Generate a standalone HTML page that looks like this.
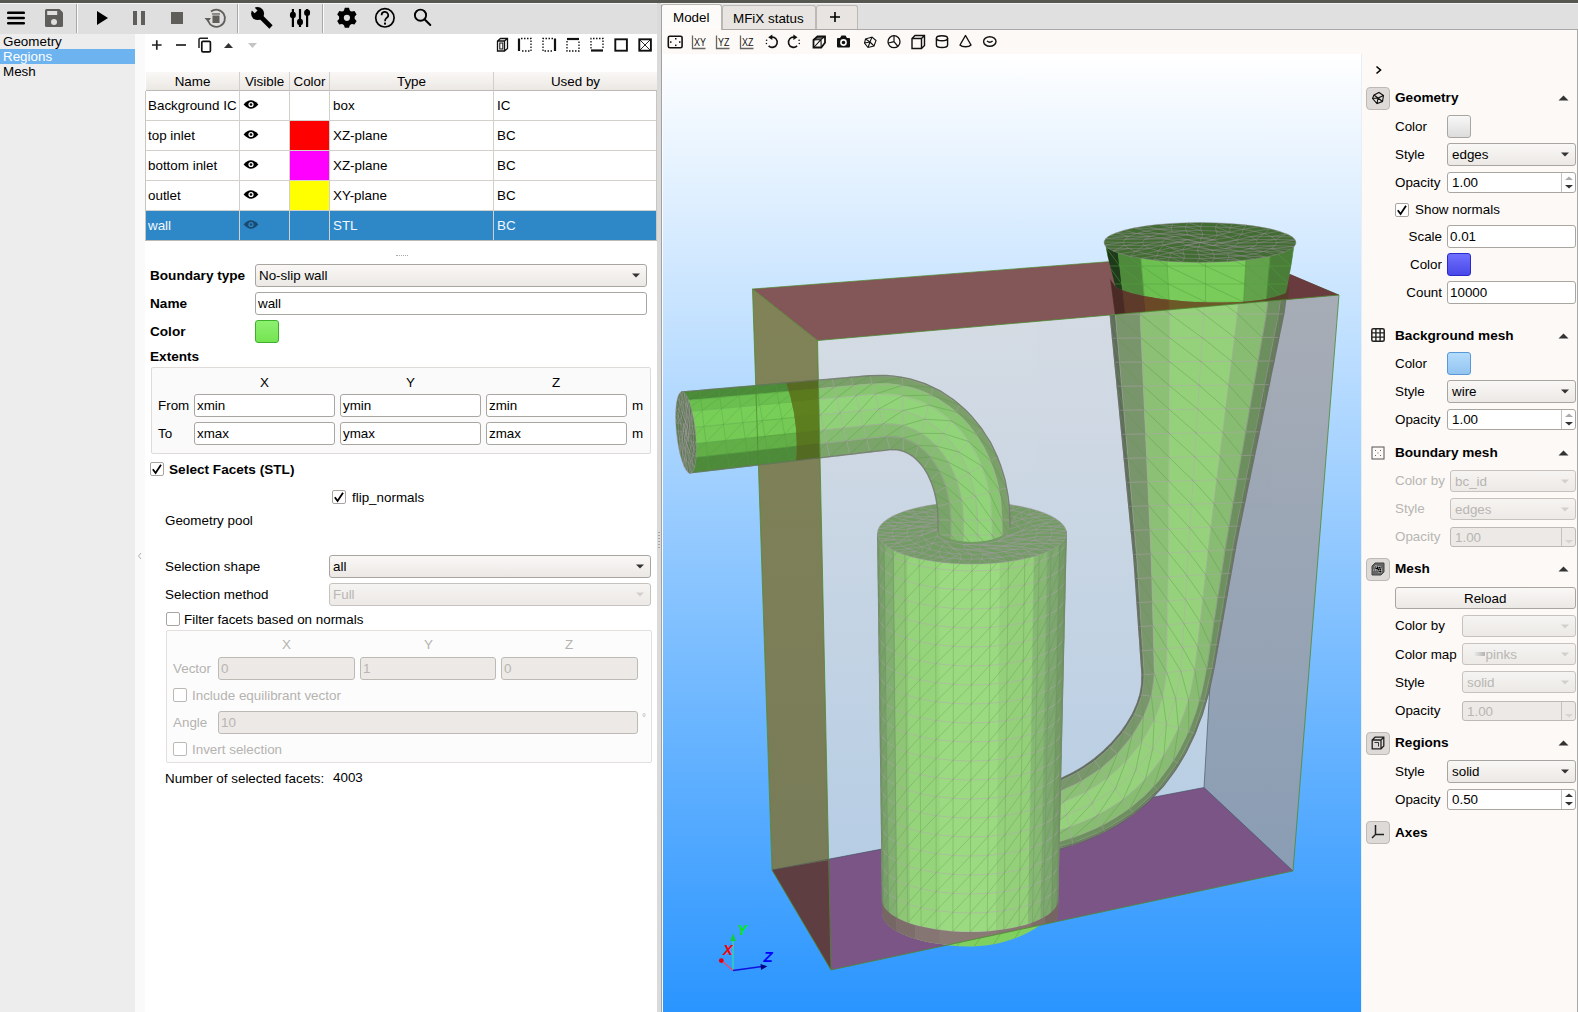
<!DOCTYPE html>
<html><head><meta charset="utf-8">
<style>
*{box-sizing:border-box;margin:0;padding:0}
html,body{width:1578px;height:1012px;overflow:hidden;background:#ededed;font-family:"Liberation Sans",sans-serif;font-size:13px;color:#000}
.a{position:absolute}
.t{position:absolute;white-space:nowrap;line-height:16px;font-size:13.4px;padding-top:1px}
.b{font-weight:bold;font-size:13.6px}
.combo{position:absolute;border:1px solid #a9a6a2;border-radius:3px;background:linear-gradient(#f9f7f5,#ebe8e5);}
.combo .ar{position:absolute;right:7px;top:9px;width:0;height:0;border-left:5px solid transparent;border-right:5px solid transparent;border-top:5px solid #333}
.inp{position:absolute;border:1px solid #aaa7a3;border-radius:3px;background:#fff}
.dis{color:#b5b3b0}
.dinp{position:absolute;border:1px solid #bab7b3;border-radius:3px;background:#edeae7}
.cbx{position:absolute;width:14px;height:14px;border:1px solid #aaa7a3;border-radius:2px;background:#fff}
.hdr{position:absolute;top:72px;height:19px;background:linear-gradient(#faf8f6,#ebe8e4);border-right:1px solid #d2cfcb;border-bottom:1px solid #bdbab6;text-align:center;line-height:20px;font-size:13.4px}
.row{position:absolute;left:146px;width:511px;height:30px;border-bottom:1px solid #d3d0cc}
.cell{position:absolute;top:0;height:30px;line-height:29px;padding-left:3px;border-right:1px solid #d3d0cc;font-size:13.4px}
.spin{position:absolute;border:1px solid #aaa7a3;border-radius:3px;background:#fff}
.spin .sep{position:absolute;right:14px;top:0;bottom:0;border-left:1px solid #c9c6c2;background:linear-gradient(#faf8f6,#eeebe8);width:0}
.ibtn{position:absolute;left:1366px;width:24px;height:23px;border:1px solid #bcb9b5;border-radius:4px;background:#dcd9d6}
.tri{position:absolute;left:1560px;width:0;height:0;border-left:5px solid transparent;border-right:5px solid transparent;border-bottom:5px solid #333}
</style></head><body>
<!-- top dark border -->
<div class="a" style="left:0;top:0;width:1578px;height:3px;background:#575752"></div>
<!-- main toolbar -->
<div class="a" style="left:0;top:3px;width:662px;height:31px;background:#dfdfdf;border-top:1px solid #f4f4f4"></div>
<svg class="a" style="left:0;top:0" width="662" height="34">
<g fill="#000"><rect x="7" y="11.5" width="18" height="2.6" rx="1.2"/><rect x="7" y="16.7" width="18" height="2.6" rx="1.2"/><rect x="7" y="21.9" width="18" height="2.6" rx="1.2"/></g>
<path d="M46.5,9 H59.5 L63,12.5 V25.5 Q63,27 61.5,27 H46.5 Q45,27 45,25.5 V10.5 Q45,9 46.5,9 Z" fill="#5f5e5a"/>
<rect x="47.2" y="11" width="10" height="4" fill="#dfdfdf"/><circle cx="54" cy="22" r="3" fill="#dfdfdf"/>
<rect x="76" y="4" width="1" height="29" fill="#a8a8a8"/><rect x="77" y="4" width="1" height="29" fill="#fbfbfb"/>
<path d="M97,11 L108,18 L97,25 Z" fill="#000"/>
<rect x="133" y="11" width="4" height="14" fill="#5f5e5a"/><rect x="141" y="11" width="4" height="14" fill="#5f5e5a"/>
<rect x="171" y="12" width="12" height="12" fill="#5f5e5a"/>
<path d="M208.2,21 A8.6,8.6 0 1 0 211,11.5" fill="none" stroke="#5f5e5a" stroke-width="1.8"/>
<path d="M204.5,18 L211,18 L208,22 Z" fill="#5f5e5a"/>
<rect x="212.5" y="15.5" width="7" height="7.5" fill="#5f5e5a"/><rect x="212" y="13.3" width="8" height="1.3" fill="#5f5e5a"/>
<rect x="237" y="4" width="1" height="29" fill="#a8a8a8"/><rect x="238" y="4" width="1" height="29" fill="#fbfbfb"/>
<g><circle cx="257.6" cy="13.6" r="6.5" fill="#000"/><path d="M259,15 L271,27" stroke="#000" stroke-width="4.6"/><rect x="250.9" y="4.2" width="4" height="9" transform="rotate(-45 252.9 8.7)" fill="#dfdfdf"/></g>
<g fill="#000"><rect x="291.8" y="9" width="2.2" height="18"/><rect x="298.9" y="9" width="2.2" height="18"/><rect x="306" y="9" width="2.2" height="18"/>
<ellipse cx="292.9" cy="15" rx="3" ry="3.3"/><ellipse cx="300" cy="22" rx="3" ry="3.3"/><ellipse cx="307.1" cy="12.8" rx="3" ry="3.3"/></g>
<rect x="322" y="4" width="1" height="29" fill="#a8a8a8"/><rect x="323" y="4" width="1" height="29" fill="#fbfbfb"/>
<g transform="translate(346.9 17.8)"><path d="M2.90,-7.40 L2.10,-10.00 L-2.10,-10.00 L-2.90,-7.40 A7.4,7.4 0 0 1 -4.96,-6.21 L-7.61,-6.82 L-9.71,-3.18 L-7.86,-1.19 A7.4,7.4 0 0 1 -7.86,1.19 L-9.71,3.18 L-7.61,6.82 L-4.96,6.21 A7.4,7.4 0 0 1 -2.90,7.40 L-2.10,10.00 L2.10,10.00 L2.90,7.40 A7.4,7.4 0 0 1 4.96,6.21 L7.61,6.82 L9.71,3.18 L7.86,1.19 A7.4,7.4 0 0 1 7.86,-1.19 L9.71,-3.18 L7.61,-6.82 L4.96,-6.21 A7.4,7.4 0 0 1 2.90,-7.40 Z" fill="#000"/><circle r="3.1" fill="#dfdfdf"/></g>
<circle cx="384.9" cy="17.8" r="9.2" fill="none" stroke="#000" stroke-width="1.7"/>
<path d="M381.6,15.2 A3.3,3.3 0 1 1 386.5,18 Q385,19 385,21.3" fill="none" stroke="#000" stroke-width="1.7"/><rect x="384" y="22.6" width="2" height="2" fill="#000"/>
<circle cx="420.5" cy="15.2" r="5.6" fill="none" stroke="#000" stroke-width="1.9"/><path d="M424.5,19.3 L430.3,25" stroke="#000" stroke-width="2" stroke-linecap="round"/>
</svg>

<!-- tab bar -->
<div class="a" style="left:662px;top:3px;width:916px;height:27px;background:#e0e0e0;border-top:1px solid #f2f2f2;border-bottom:1px solid #a9a9a9"></div>
<div class="a" style="left:661px;top:4px;width:61px;height:26px;background:#fdfbf9;border:1px solid #b9b6b2;border-bottom:none;border-radius:3px 3px 0 0"></div>
<div class="t" style="left:673px;top:9px">Model</div>
<div class="a" style="left:722px;top:5px;width:94px;height:24px;background:#e7e4e1;border:1px solid #bdbab6;border-bottom:none;border-radius:3px 3px 0 0"></div>
<div class="t" style="left:733px;top:10px">MFiX status</div>
<div class="a" style="left:816px;top:5px;width:42px;height:24px;background:#e7e4e1;border:1px solid #bdbab6;border-bottom:none;border-radius:3px 3px 0 0"></div>
<svg class="a" style="left:829px;top:11px" width="12" height="12"><path d="M6,1 V11 M1,6 H11" stroke="#000" stroke-width="1.6"/></svg>

<!-- left tree -->
<div class="a" style="left:0;top:34px;width:135px;height:978px;background:#ededed"></div>
<div class="a" style="left:0;top:49px;width:135px;height:15px;background:#6cb3f0"></div>
<div class="t" style="left:3px;top:33px">Geometry</div>
<div class="t" style="left:3px;top:48px;color:#fff">Regions</div>
<div class="t" style="left:3px;top:63px">Mesh</div>

<!-- left content panel -->
<div class="a" style="left:135px;top:34px;width:10px;height:978px;background:#fafafa"></div>
<div class="a" style="left:145px;top:34px;width:512px;height:978px;background:#fff"></div>
<div class="a" style="left:657px;top:3px;width:4px;height:1009px;background:#dadada"></div>
<div class="a" style="left:661px;top:5px;width:1px;height:1007px;background:#a2a2a2"></div>
<div class="a" style="left:662px;top:29px;width:1px;height:983px;background:#fdfdfd"></div>
<svg class="a" style="left:145px;top:34px" width="512" height="24">
<path d="M11.8,6.2 V15.8 M7,11 H16.6" stroke="#222" stroke-width="1.7"/>
<path d="M31,11 H41" stroke="#222" stroke-width="1.7"/>
<path d="M54,14 V5.5 Q54,4.3 55.2,4.3 H63" fill="none" stroke="#222" stroke-width="1.5"/><rect x="56.8" y="7.3" width="8.6" height="10.6" rx="1.2" fill="none" stroke="#111" stroke-width="1.7"/>
<path d="M79,14 L83.5,9 L88,14 Z" fill="#333"/>
<path d="M103,9 L107.5,14 L112,9 Z" fill="#c4c4c4"/>
<g fill="none" stroke="#111" stroke-width="1.3">
<path d="M352.5,17 V7 L355.5,4.5 H362.5 V14.5 L359.5,17 Z M352.5,7 H359.5 V17 M359.5,7 L362.5,4.5"/><rect x="354.8" y="9" width="3" height="6" stroke-width="1"/>
<path d="M374,4.5 V17" stroke-width="2.2"/><path d="M376,4.5 H386 V17 H376" stroke-dasharray="1.5 1.5"/>
<path d="M410,4.5 V17" stroke-width="2.2"/><path d="M408,4.5 H398 V17 H408" stroke-dasharray="1.5 1.5"/>
<path d="M422,5 H434" stroke-width="2.2"/><path d="M422,7 V17 H434 V7" stroke-dasharray="1.5 1.5"/>
<path d="M446,16.5 H458" stroke-width="2.2"/><path d="M446,14.5 V4.5 H458 V14.5" stroke-dasharray="1.5 1.5"/>
<rect x="470.3" y="5.3" width="11.6" height="11.4" stroke-width="1.9"/>
<rect x="494.3" y="5.3" width="11.6" height="11.4" stroke-width="1.9"/><path d="M495,6 L505,16 M505,6 L495,16" stroke-width="0.9"/>
</g></svg>
<!-- table header -->
<div class="hdr" style="left:146px;width:94px">Name</div>
<div class="hdr" style="left:240px;width:50px">Visible</div>
<div class="hdr" style="left:290px;width:40px">Color</div>
<div class="hdr" style="left:330px;width:164px">Type</div>
<div class="hdr" style="left:494px;width:163px;border-right:none">Used by</div>
<div class="a" style="left:145px;top:91px;width:1px;height:150px;background:#c9c6c2"></div>
<div class="a" style="left:656px;top:91px;width:1px;height:150px;background:#c9c6c2"></div>
<div class="a" style="left:146px;top:91px;width:510px;height:30px;background:#fff;border-bottom:1px solid #d3d0cc"></div>
<div class="a" style="left:239px;top:91px;width:1px;height:30px;background:#d3d0cc"></div>
<div class="a" style="left:289px;top:91px;width:1px;height:30px;background:#d3d0cc"></div>
<div class="a" style="left:329px;top:91px;width:1px;height:30px;background:#d3d0cc"></div>
<div class="a" style="left:493px;top:91px;width:1px;height:30px;background:#d3d0cc"></div>
<div class="t" style="left:148px;top:97px;color:#000">Background IC</div>
<div class="t" style="left:333px;top:97px;color:#000">box</div>
<div class="t" style="left:497px;top:97px;color:#000">IC</div>
<svg class="a" style="left:243px;top:99px" width="16" height="11"><path d="M0.6,5.5 Q8,-2.8 15.4,5.5 Q8,13.8 0.6,5.5 Z" fill="#000"/><circle cx="8" cy="5.5" r="2.6" fill="#fff"/><circle cx="8" cy="5.5" r="1.3" fill="#000"/></svg>
<div class="a" style="left:146px;top:121px;width:510px;height:30px;background:#fff;border-bottom:1px solid #d3d0cc"></div>
<div class="a" style="left:239px;top:121px;width:1px;height:30px;background:#d3d0cc"></div>
<div class="a" style="left:289px;top:121px;width:1px;height:30px;background:#d3d0cc"></div>
<div class="a" style="left:329px;top:121px;width:1px;height:30px;background:#d3d0cc"></div>
<div class="a" style="left:493px;top:121px;width:1px;height:30px;background:#d3d0cc"></div>
<div class="a" style="left:290px;top:121px;width:39px;height:29px;background:#ff0000"></div>
<div class="t" style="left:148px;top:127px;color:#000">top inlet</div>
<div class="t" style="left:333px;top:127px;color:#000">XZ-plane</div>
<div class="t" style="left:497px;top:127px;color:#000">BC</div>
<svg class="a" style="left:243px;top:129px" width="16" height="11"><path d="M0.6,5.5 Q8,-2.8 15.4,5.5 Q8,13.8 0.6,5.5 Z" fill="#000"/><circle cx="8" cy="5.5" r="2.6" fill="#fff"/><circle cx="8" cy="5.5" r="1.3" fill="#000"/></svg>
<div class="a" style="left:146px;top:151px;width:510px;height:30px;background:#fff;border-bottom:1px solid #d3d0cc"></div>
<div class="a" style="left:239px;top:151px;width:1px;height:30px;background:#d3d0cc"></div>
<div class="a" style="left:289px;top:151px;width:1px;height:30px;background:#d3d0cc"></div>
<div class="a" style="left:329px;top:151px;width:1px;height:30px;background:#d3d0cc"></div>
<div class="a" style="left:493px;top:151px;width:1px;height:30px;background:#d3d0cc"></div>
<div class="a" style="left:290px;top:151px;width:39px;height:29px;background:#ff00ff"></div>
<div class="t" style="left:148px;top:157px;color:#000">bottom inlet</div>
<div class="t" style="left:333px;top:157px;color:#000">XZ-plane</div>
<div class="t" style="left:497px;top:157px;color:#000">BC</div>
<svg class="a" style="left:243px;top:159px" width="16" height="11"><path d="M0.6,5.5 Q8,-2.8 15.4,5.5 Q8,13.8 0.6,5.5 Z" fill="#000"/><circle cx="8" cy="5.5" r="2.6" fill="#fff"/><circle cx="8" cy="5.5" r="1.3" fill="#000"/></svg>
<div class="a" style="left:146px;top:181px;width:510px;height:30px;background:#fff;border-bottom:1px solid #d3d0cc"></div>
<div class="a" style="left:239px;top:181px;width:1px;height:30px;background:#d3d0cc"></div>
<div class="a" style="left:289px;top:181px;width:1px;height:30px;background:#d3d0cc"></div>
<div class="a" style="left:329px;top:181px;width:1px;height:30px;background:#d3d0cc"></div>
<div class="a" style="left:493px;top:181px;width:1px;height:30px;background:#d3d0cc"></div>
<div class="a" style="left:290px;top:181px;width:39px;height:29px;background:#ffff00"></div>
<div class="t" style="left:148px;top:187px;color:#000">outlet</div>
<div class="t" style="left:333px;top:187px;color:#000">XY-plane</div>
<div class="t" style="left:497px;top:187px;color:#000">BC</div>
<svg class="a" style="left:243px;top:189px" width="16" height="11"><path d="M0.6,5.5 Q8,-2.8 15.4,5.5 Q8,13.8 0.6,5.5 Z" fill="#000"/><circle cx="8" cy="5.5" r="2.6" fill="#fff"/><circle cx="8" cy="5.5" r="1.3" fill="#000"/></svg>
<div class="a" style="left:146px;top:211px;width:510px;height:30px;background:#2e88c8;border-bottom:1px solid #d3d0cc"></div>
<div class="a" style="left:239px;top:211px;width:1px;height:30px;background:#d3d0cc"></div>
<div class="a" style="left:289px;top:211px;width:1px;height:30px;background:#d3d0cc"></div>
<div class="a" style="left:329px;top:211px;width:1px;height:30px;background:#d3d0cc"></div>
<div class="a" style="left:493px;top:211px;width:1px;height:30px;background:#d3d0cc"></div>
<div class="t" style="left:148px;top:217px;color:#f4f8fc">wall</div>
<div class="t" style="left:333px;top:217px;color:#f4f8fc">STL</div>
<div class="t" style="left:497px;top:217px;color:#f4f8fc">BC</div>
<svg class="a" style="left:243px;top:219px" width="16" height="11"><path d="M0.6,5.5 Q8,-2.8 15.4,5.5 Q8,13.8 0.6,5.5 Z" fill="#1a4a70"/><circle cx="8" cy="5.5" r="2.6" fill="#2e88c8"/><circle cx="8" cy="5.5" r="1.3" fill="#1a4a70"/></svg>

<div class="a" style="left:145px;top:240px;width:512px;height:1px;background:#bdbab6"></div>
<div class="a" style="left:396px;top:255px;width:12px;height:1px;border-top:1px dotted #aaa"></div>
<div class="t b" style="left:150px;top:267px">Boundary type</div><div class="a" style="left:255px;top:264px;width:392px;height:23px;border:1px solid #a9a6a2;border-radius:3px;background:linear-gradient(#faf8f6,#ebe8e5)"></div><div class="t" style="left:259px;top:267px;color:#000">No-slip wall</div><svg class="a" style="left:631px;top:273px" width="10" height="6"><path d="M1,0.5 H9 L5,4.5 Z" fill="#333"/></svg>
<div class="t b" style="left:150px;top:295px">Name</div><div class="a" style="left:255px;top:292px;width:392px;height:23px;border:1px solid #a9a6a2;border-radius:3px;background:#fff"></div><div class="t" style="left:258px;top:295px;color:#000">wall</div>
<div class="t b" style="left:150px;top:323px">Color</div><div class="a" style="left:255px;top:320px;width:24px;height:23px;border:1px solid #3cb02c;border-radius:3px;background:linear-gradient(#8ef070,#74e452)"></div>
<div class="t b" style="left:150px;top:348px">Extents</div><div class="a" style="left:151px;top:367px;width:500px;height:87px;border:1px solid #dedbd8;border-radius:2px;background:#fafafa"></div>
<div class="t" style="left:260px;top:374px">X</div><div class="t" style="left:406px;top:374px">Y</div><div class="t" style="left:552px;top:374px">Z</div><div class="t" style="left:158px;top:397px">From</div><div class="t" style="left:158px;top:425px">To</div><div class="a" style="left:194px;top:394px;width:141px;height:23px;border:1px solid #a9a6a2;border-radius:3px;background:#fff"></div><div class="t" style="left:197px;top:397px;color:#000">xmin</div>
<div class="a" style="left:194px;top:422px;width:141px;height:23px;border:1px solid #a9a6a2;border-radius:3px;background:#fff"></div><div class="t" style="left:197px;top:425px;color:#000">xmax</div>
<div class="a" style="left:340px;top:394px;width:141px;height:23px;border:1px solid #a9a6a2;border-radius:3px;background:#fff"></div><div class="t" style="left:343px;top:397px;color:#000">ymin</div>
<div class="a" style="left:340px;top:422px;width:141px;height:23px;border:1px solid #a9a6a2;border-radius:3px;background:#fff"></div><div class="t" style="left:343px;top:425px;color:#000">ymax</div>
<div class="a" style="left:486px;top:394px;width:141px;height:23px;border:1px solid #a9a6a2;border-radius:3px;background:#fff"></div><div class="t" style="left:489px;top:397px;color:#000">zmin</div>
<div class="a" style="left:486px;top:422px;width:141px;height:23px;border:1px solid #a9a6a2;border-radius:3px;background:#fff"></div><div class="t" style="left:489px;top:425px;color:#000">zmax</div>
<div class="t" style="left:632px;top:397px">m</div><div class="t" style="left:632px;top:425px">m</div>
<svg class="a" style="left:150px;top:462px" width="14" height="14"><rect x="0.5" y="0.5" width="13" height="13" rx="1.5" fill="#fff" stroke="#a8a5a1"/><path d="M2.8,7.2 L5.6,11 L11,2.8" fill="none" stroke="#000" stroke-width="1.8"/></svg><div class="t b" style="left:169px;top:461px">Select Facets (STL)</div>
<svg class="a" style="left:332px;top:490px" width="14" height="14"><rect x="0.5" y="0.5" width="13" height="13" rx="1.5" fill="#fff" stroke="#a8a5a1"/><path d="M2.8,7.2 L5.6,11 L11,2.8" fill="none" stroke="#000" stroke-width="1.8"/></svg><div class="t" style="left:352px;top:489px">flip_normals</div>
<div class="t" style="left:165px;top:512px">Geometry pool</div>
<div class="t" style="left:165px;top:558px">Selection shape</div><div class="a" style="left:329px;top:555px;width:322px;height:23px;border:1px solid #a9a6a2;border-radius:3px;background:linear-gradient(#faf8f6,#ebe8e5)"></div><div class="t" style="left:333px;top:558px;color:#000">all</div><svg class="a" style="left:635px;top:564px" width="10" height="6"><path d="M1,0.5 H9 L5,4.5 Z" fill="#333"/></svg>
<div class="t" style="left:165px;top:586px">Selection method</div><div class="a" style="left:329px;top:583px;width:322px;height:23px;border:1px solid #c6c3bf;border-radius:3px;background:linear-gradient(#f6f4f2,#ece9e6)"></div><div class="t" style="left:333px;top:586px;color:#b8b6b3">Full</div><svg class="a" style="left:635px;top:592px" width="10" height="6"><path d="M1,0.5 H9 L5,4.5 Z" fill="#d2d0cd"/></svg>
<svg class="a" style="left:166px;top:612px" width="14" height="14"><rect x="0.5" y="0.5" width="13" height="13" rx="1.5" fill="#fff" stroke="#a8a5a1"/></svg><div class="t" style="left:184px;top:611px">Filter facets based on normals</div>
<div class="a" style="left:166px;top:630px;width:486px;height:133px;border:1px solid #e2dfdc;border-radius:2px;background:#fcfcfc"></div>
<div class="t dis" style="left:282px;top:636px">X</div><div class="t dis" style="left:424px;top:636px">Y</div><div class="t dis" style="left:565px;top:636px">Z</div><div class="t dis" style="left:173px;top:660px">Vector</div><div class="a" style="left:218px;top:657px;width:137px;height:23px;border:1px solid #bdbab6;border-radius:3px;background:#ece9e6"></div><div class="t" style="left:221px;top:660px;color:#b8b6b3">0</div>
<div class="a" style="left:360px;top:657px;width:136px;height:23px;border:1px solid #bdbab6;border-radius:3px;background:#ece9e6"></div><div class="t" style="left:363px;top:660px;color:#b8b6b3">1</div>
<div class="a" style="left:501px;top:657px;width:137px;height:23px;border:1px solid #bdbab6;border-radius:3px;background:#ece9e6"></div><div class="t" style="left:504px;top:660px;color:#b8b6b3">0</div>
<svg class="a" style="left:173px;top:688px" width="14" height="14"><rect x="0.5" y="0.5" width="13" height="13" rx="1.5" fill="#fff" stroke="#bcb9b5"/></svg><div class="t dis" style="left:192px;top:687px">Include equilibrant vector</div>
<div class="t dis" style="left:173px;top:714px">Angle</div><div class="a" style="left:218px;top:711px;width:420px;height:23px;border:1px solid #bdbab6;border-radius:3px;background:#ece9e6"></div><div class="t" style="left:221px;top:714px;color:#b8b6b3">10</div>
<div class="t dis" style="left:642px;top:709px;font-size:10px">°</div><svg class="a" style="left:173px;top:742px" width="14" height="14"><rect x="0.5" y="0.5" width="13" height="13" rx="1.5" fill="#fff" stroke="#bcb9b5"/></svg><div class="t dis" style="left:192px;top:741px">Invert selection</div>
<div class="t" style="left:165px;top:770px">Number of selected facets:</div><div class="t" style="left:333px;top:769px">4003</div>
<svg class="a" style="left:137px;top:551px" width="6" height="10"><path d="M4,2 L1.5,5 L4,8" fill="none" stroke="#b0b0b0" stroke-width="1"/></svg><svg class="a" style="left:657px;top:530px" width="4" height="30"><g fill="#777"><rect x="1.5" y="2" width="1" height="1"/><rect x="1.5" y="5" width="1" height="1"/><rect x="1.5" y="8" width="1" height="1"/><rect x="1.5" y="11" width="1" height="1"/><rect x="1.5" y="14" width="1" height="1"/><rect x="1.5" y="17" width="1" height="1"/></g></svg>

<!-- viewer toolbar -->
<div class="a" style="left:663px;top:30px;width:915px;height:24px;background:#fcf9f6"></div>
<svg class="a" style="left:663px;top:30px" width="340" height="24"><g fill="none" stroke="#111" stroke-width="1.4">
<rect x="5.3" y="6.3" width="13.8" height="11.4" rx="1.5" stroke-width="1.6"/><g fill="#111" stroke="none"><rect x="7" y="11.3" width="1.5" height="1.5"/><rect x="16" y="11.3" width="1.5" height="1.5"/><rect x="12" y="8" width="1.5" height="1.5"/><rect x="12" y="14.6" width="1.5" height="1.5"/></g>
<path d="M29.5,5.5 V18.5 H42.5" stroke="#666" stroke-width="1.3"/>
<path d="M53.5,5.5 V18.5 H66.5" stroke="#666" stroke-width="1.3"/>
<path d="M77.5,5.5 V18.5 H90.5" stroke="#666" stroke-width="1.3"/>
<path d="M108.2,7.2 A5.1,5.1 0 1 1 105.6,15.9" stroke-width="1.6"/><g fill="#111" stroke="none"><circle cx="103.6" cy="10.3" r="0.8"/><circle cx="103.4" cy="13.5" r="0.8"/></g><path d="M105.2,7.3 L109.3,4.6 L109.3,10 Z" fill="#111" stroke="none"/>
<path d="M131.5,7.2 A5.1,5.1 0 1 0 134.1,15.9" stroke-width="1.6"/><g fill="#111" stroke="none"><circle cx="136.1" cy="10.3" r="0.8"/><circle cx="136.3" cy="13.5" r="0.8"/></g><path d="M134.5,7.3 L130.4,4.6 L130.4,10 Z" fill="#111" stroke="none"/>
<path d="M150.5,10 L154.5,6.5 H162 V12.8 L158.2,17.5 H150.5 Z" stroke-width="1.8"/><path d="M150.5,10 L158,9.5 L162,6.5 M158,9.5 L158.2,17.5 M151.2,17 L157.5,10.2" stroke-width="1.1"/><path d="M154.5,6.5 H162 L158,9.5 L150.5,10 Z" fill="#111" stroke="none" opacity="0.6"/>
<path d="M174,9 Q174,8 175,8 H177 L178.5,5.5 H182.5 L184,8 H186 Q187,8 187,9 V16.5 Q187,17.5 186,17.5 H175 Q174,17.5 174,16.5 Z" fill="#111" stroke="none"/><circle cx="180.5" cy="12.5" r="2.6" stroke="#fcf9f6" stroke-width="1.6"/>
<path d="M202.5,9 L209,7 L213,10.5 L211,16 L205,17.5 L201.5,13 Z M202.5,9 L207,12 L209,7 M207,12 L211,16 M207,12 L205,17.5 M201.5,13 L207,12" stroke-width="1.1"/>
<circle cx="231" cy="11.7" r="6" stroke-width="1.3"/><path d="M231,5.7 V11.7 L225.3,13 M231,11.7 L235,16.5" stroke-width="1.2"/>
<path d="M249,8.5 L252,5.5 H261.5 V15.5 L258.5,18.5 H249 Z M249,8.5 H258.5 V18.5 M258.5,8.5 L261.5,5.5" stroke-width="1.4"/>
<ellipse cx="279" cy="8.3" rx="5.6" ry="2.5" stroke-width="1.4"/><path d="M273.4,8.3 V15 A5.6,2.5 0 0 0 284.6,15 V8.3" stroke-width="1.4"/>
<path d="M302.5,5.5 L297,15 A6,3 0 0 0 308,15 Z" stroke-width="1.4" stroke-linejoin="round"/>
<ellipse cx="326.8" cy="11.5" rx="6.2" ry="4.8" stroke-width="1.4"/><path d="M324,11 Q326.8,13.5 329.6,11" stroke-width="1.4"/>
</g>
<g font-family="Liberation Sans" font-size="10.5" fill="#111" transform="scale(0.85 1)"><text x="36.5" y="16.5">XY</text><text x="64.7" y="16.5">YZ</text><text x="92.9" y="16.5">XZ</text></g>
</svg>

<!-- right panel -->
<div class="a" style="left:1361px;top:54px;width:216px;height:958px;background:#fcf9f6"></div>
<div class="a" style="left:1577px;top:29px;width:1px;height:983px;background:#a9a9a9"></div>
<svg class="a" style="left:1375px;top:65px" width="8" height="10"><path d="M1.5,1.5 L5.5,5 L1.5,8.5" fill="none" stroke="#000" stroke-width="1.6"/></svg>
<div class="a" style="left:1366px;top:87px;width:24px;height:23px;border:1px solid #bdbab6;border-radius:4px;background:#dddad7"></div><svg class="a" style="left:1371px;top:91px" width="14" height="14"><path d="M3,4 L8,1.5 L12.5,4.5 L11.5,10.5 L6,12.5 L1.5,7.5 Z M3,4 L7,7 L12.5,4.5 M7,7 L11.5,10.5 M7,7 L6,12.5 M1.5,7.5 L7,7" fill="none" stroke="#111" stroke-width="1.1"/></svg><div class="t b" style="left:1395px;top:89px">Geometry</div><svg class="a" style="left:1558px;top:95px" width="11" height="6"><path d="M0.5,5.5 H10.5 L5.5,0.5 Z" fill="#333"/></svg>
<div class="t" style="left:1395px;top:118px;color:#000">Color</div><div class="a" style="left:1447px;top:115px;width:24px;height:23px;border:1px solid #a9a6a2;border-radius:3px;background:linear-gradient(#f8f8f8,#dcdcdc)"></div>
<div class="t" style="left:1395px;top:146px;color:#000">Style</div><div class="a" style="left:1447px;top:143px;width:129px;height:23px;border:1px solid #a9a6a2;border-radius:3px;background:linear-gradient(#faf8f6,#ebe8e5)"></div><div class="t" style="left:1452px;top:146px;color:#000">edges</div><svg class="a" style="left:1560px;top:152px" width="10" height="6"><path d="M1,0.5 H9 L5,4.5 Z" fill="#333"/></svg>
<div class="t" style="left:1395px;top:174px;color:#000">Opacity</div><div class="a" style="left:1447px;top:172px;width:129px;height:21px;border:1px solid #a9a6a2;border-radius:3px;background:#fff"></div><div class="a" style="left:1561px;top:173px;width:1px;height:19px;background:#c5c2be"></div><div class="t" style="left:1452px;top:174px;color:#000">1.00</div><svg class="a" style="left:1564px;top:175px" width="10" height="16"><path d="M1,5 H9 L5,1.5 Z" fill="#aaa"/><path d="M1,10 H9 L5,13.5 Z" fill="#333"/></svg>
<svg class="a" style="left:1395px;top:203px" width="14" height="14"><rect x="0.5" y="0.5" width="13" height="13" rx="1.5" fill="#fff" stroke="#a8a5a1"/><path d="M2.8,7.2 L5.6,11 L11,2.8" fill="none" stroke="#000" stroke-width="1.8"/></svg><div class="t" style="left:1415px;top:201px;color:#000">Show normals</div><div class="t" style="right:136px;top:228px;color:#000">Scale</div><div class="a" style="left:1447px;top:225px;width:129px;height:23px;border:1px solid #a9a6a2;border-radius:3px;background:#fff"></div><div class="t" style="left:1450px;top:228px">0.01</div>
<div class="t" style="right:136px;top:256px;color:#000">Color</div><div class="a" style="left:1447px;top:253px;width:24px;height:23px;border:1px solid #2a2ac8;border-radius:3px;background:linear-gradient(#7070ff,#4848e8)"></div>
<div class="t" style="right:136px;top:284px;color:#000">Count</div><div class="a" style="left:1447px;top:281px;width:129px;height:23px;border:1px solid #a9a6a2;border-radius:3px;background:#fff"></div><div class="t" style="left:1450px;top:284px">10000</div>
<svg class="a" style="left:1371px;top:328px" width="14" height="14"><rect x="0.8" y="0.8" width="12.4" height="12.4" rx="1.5" fill="none" stroke="#222" stroke-width="1.5"/><path d="M4.9,1 V13 M9.1,1 V13 M1,4.9 H13 M1,9.1 H13" stroke="#222" stroke-width="1.4"/></svg><div class="t b" style="left:1395px;top:327px">Background mesh</div><svg class="a" style="left:1558px;top:333px" width="11" height="6"><path d="M0.5,5.5 H10.5 L5.5,0.5 Z" fill="#333"/></svg>
<div class="t" style="left:1395px;top:355px;color:#000">Color</div><div class="a" style="left:1447px;top:352px;width:24px;height:23px;border:1px solid #5898d8;border-radius:3px;background:linear-gradient(#b4dcfc,#92c4f0)"></div>
<div class="t" style="left:1395px;top:383px;color:#000">Style</div><div class="a" style="left:1447px;top:380px;width:129px;height:23px;border:1px solid #a9a6a2;border-radius:3px;background:linear-gradient(#faf8f6,#ebe8e5)"></div><div class="t" style="left:1452px;top:383px;color:#000">wire</div><svg class="a" style="left:1560px;top:389px" width="10" height="6"><path d="M1,0.5 H9 L5,4.5 Z" fill="#333"/></svg>
<div class="t" style="left:1395px;top:411px;color:#000">Opacity</div><div class="a" style="left:1447px;top:409px;width:129px;height:21px;border:1px solid #a9a6a2;border-radius:3px;background:#fff"></div><div class="a" style="left:1561px;top:410px;width:1px;height:19px;background:#c5c2be"></div><div class="t" style="left:1452px;top:411px;color:#000">1.00</div><svg class="a" style="left:1564px;top:412px" width="10" height="16"><path d="M1,5 H9 L5,1.5 Z" fill="#aaa"/><path d="M1,10 H9 L5,13.5 Z" fill="#333"/></svg>
<svg class="a" style="left:1371px;top:446px" width="14" height="14"><rect x="1" y="1" width="12" height="12" fill="none" stroke="#555" stroke-width="1"/><g fill="#666"><rect x="4" y="4" width="1" height="1"/><rect x="9" y="4" width="1" height="1"/><rect x="4" y="9" width="1" height="1"/><rect x="9" y="9" width="1" height="1"/><rect x="6.5" y="6.5" width="1" height="1"/></g></svg><div class="t b" style="left:1395px;top:444px">Boundary mesh</div><svg class="a" style="left:1558px;top:450px" width="11" height="6"><path d="M0.5,5.5 H10.5 L5.5,0.5 Z" fill="#333"/></svg>
<div class="t" style="left:1395px;top:472px;color:#b8b6b3">Color by</div><div class="a" style="left:1450px;top:470px;width:126px;height:22px;border:1px solid #c6c3bf;border-radius:3px;background:linear-gradient(#f6f4f2,#ece9e6)"></div><div class="t" style="left:1455px;top:473px;color:#b8b6b3">bc_id</div><svg class="a" style="left:1560px;top:479px" width="10" height="6"><path d="M1,0.5 H9 L5,4.5 Z" fill="#d2d0cd"/></svg>
<div class="t" style="left:1395px;top:500px;color:#b8b6b3">Style</div><div class="a" style="left:1450px;top:498px;width:126px;height:22px;border:1px solid #c6c3bf;border-radius:3px;background:linear-gradient(#f6f4f2,#ece9e6)"></div><div class="t" style="left:1455px;top:501px;color:#b8b6b3">edges</div><svg class="a" style="left:1560px;top:507px" width="10" height="6"><path d="M1,0.5 H9 L5,4.5 Z" fill="#d2d0cd"/></svg>
<div class="t" style="left:1395px;top:528px;color:#b8b6b3">Opacity</div><div class="a" style="left:1450px;top:527px;width:126px;height:20px;border:1px solid #bdbab6;border-radius:3px;background:#ece9e6"></div><div class="a" style="left:1561px;top:528px;width:1px;height:18px;background:#c5c2be"></div><div class="t" style="left:1455px;top:529px;color:#b8b6b3">1.00</div><svg class="a" style="left:1564px;top:529px" width="10" height="16"><path d="M1,11 H9 L5,14.5 Z" fill="#d6d4d1"/></svg>
<div class="a" style="left:1366px;top:558px;width:24px;height:23px;border:1px solid #bdbab6;border-radius:4px;background:#dddad7"></div><svg class="a" style="left:1371px;top:562px" width="14" height="14"><path d="M1,4 L4,1 H13 V10 L10,13 H1 Z" fill="#666" stroke="#444" stroke-width="1"/><path d="M3,5 H10 V11 M5,3 V9 M8,4 V11 M2,8 H11" stroke="#ddd" stroke-width="0.8" stroke-dasharray="1 1"/></svg><div class="t b" style="left:1395px;top:560px">Mesh</div><svg class="a" style="left:1558px;top:566px" width="11" height="6"><path d="M0.5,5.5 H10.5 L5.5,0.5 Z" fill="#333"/></svg>
<div class="a" style="left:1395px;top:587px;width:181px;height:22px;border:1px solid #a9a6a2;border-radius:3px;background:linear-gradient(#faf8f6,#ebe8e5)"></div><div class="t" style="left:1464px;top:590px">Reload</div>
<div class="t" style="left:1395px;top:617px;color:#000">Color by</div><div class="a" style="left:1462px;top:615px;width:114px;height:22px;border:1px solid #c6c3bf;border-radius:3px;background:linear-gradient(#f6f4f2,#ece9e6)"></div><div class="t" style="left:1467px;top:618px;color:#b8b6b3"></div><svg class="a" style="left:1560px;top:624px" width="10" height="6"><path d="M1,0.5 H9 L5,4.5 Z" fill="#d2d0cd"/></svg>
<div class="t" style="left:1395px;top:646px;color:#000">Color map</div><div class="a" style="left:1462px;top:643px;width:114px;height:22px;border:1px solid #c6c3bf;border-radius:3px;background:linear-gradient(#f6f4f2,#ece9e6)"></div><div class="t" style="left:1467px;top:646px;color:#b8b6b3">&nbsp;&nbsp;&nbsp;&nbsp;&nbsp;pinks</div><svg class="a" style="left:1560px;top:652px" width="10" height="6"><path d="M1,0.5 H9 L5,4.5 Z" fill="#d2d0cd"/></svg>
<div class="a" style="left:1473px;top:652px;width:12px;height:4px;background:linear-gradient(90deg,#f4f2f0,#b4b2b0)"></div><div class="t" style="left:1395px;top:674px;color:#000">Style</div><div class="a" style="left:1462px;top:671px;width:114px;height:22px;border:1px solid #c6c3bf;border-radius:3px;background:linear-gradient(#f6f4f2,#ece9e6)"></div><div class="t" style="left:1467px;top:674px;color:#b8b6b3">solid</div><svg class="a" style="left:1560px;top:680px" width="10" height="6"><path d="M1,0.5 H9 L5,4.5 Z" fill="#d2d0cd"/></svg>
<div class="t" style="left:1395px;top:702px;color:#000">Opacity</div><div class="a" style="left:1462px;top:701px;width:114px;height:20px;border:1px solid #bdbab6;border-radius:3px;background:#ece9e6"></div><div class="a" style="left:1561px;top:702px;width:1px;height:18px;background:#c5c2be"></div><div class="t" style="left:1467px;top:703px;color:#b8b6b3">1.00</div><svg class="a" style="left:1564px;top:703px" width="10" height="16"><path d="M1,11 H9 L5,14.5 Z" fill="#d6d4d1"/></svg>
<div class="a" style="left:1366px;top:732px;width:24px;height:23px;border:1px solid #bdbab6;border-radius:4px;background:#dddad7"></div><svg class="a" style="left:1371px;top:736px" width="14" height="14"><path d="M1.2,4 L4,1.2 H12.8 V10 L10,12.8 H1.2 Z M1.2,4 H10 V12.8 M10,4 L12.8,1.2" fill="none" stroke="#222" stroke-width="1.3"/><path d="M3.5,6.5 H7.5 V10.5" fill="none" stroke="#222" stroke-width="0.9"/></svg><div class="t b" style="left:1395px;top:734px">Regions</div><svg class="a" style="left:1558px;top:740px" width="11" height="6"><path d="M0.5,5.5 H10.5 L5.5,0.5 Z" fill="#333"/></svg>
<div class="t" style="left:1395px;top:763px;color:#000">Style</div><div class="a" style="left:1447px;top:760px;width:129px;height:23px;border:1px solid #a9a6a2;border-radius:3px;background:linear-gradient(#faf8f6,#ebe8e5)"></div><div class="t" style="left:1452px;top:763px;color:#000">solid</div><svg class="a" style="left:1560px;top:769px" width="10" height="6"><path d="M1,0.5 H9 L5,4.5 Z" fill="#333"/></svg>
<div class="t" style="left:1395px;top:791px;color:#000">Opacity</div><div class="a" style="left:1447px;top:789px;width:129px;height:21px;border:1px solid #a9a6a2;border-radius:3px;background:#fff"></div><div class="a" style="left:1561px;top:790px;width:1px;height:19px;background:#c5c2be"></div><div class="t" style="left:1452px;top:791px;color:#000">0.50</div><svg class="a" style="left:1564px;top:792px" width="10" height="16"><path d="M1,5 H9 L5,1.5 Z" fill="#333"/><path d="M1,10 H9 L5,13.5 Z" fill="#333"/></svg>
<div class="a" style="left:1366px;top:821px;width:24px;height:23px;border:1px solid #bdbab6;border-radius:4px;background:#dddad7"></div><svg class="a" style="left:1371px;top:824px" width="14" height="16"><path d="M4.5,1 V10.5 L1,14 M4.5,10.5 H13" fill="none" stroke="#222" stroke-width="1.5"/></svg><div class="t b" style="left:1395px;top:824px">Axes</div>
<div class="a" style="left:1361px;top:54px;width:1px;height:958px;background:#e8eef6"></div>

<!-- viewport -->
<svg class="a" style="left:663px;top:54px" width="698" height="958" viewBox="663 54 698 958">
<defs>
<linearGradient id="bg" x1="0" y1="0" x2="0" y2="1"><stop offset="0" stop-color="#ffffff"/><stop offset="1" stop-color="#2a95ff"/></linearGradient>
</defs>
<rect x="663" y="54" width="698" height="958" fill="url(#bg)"/>
<defs>
<linearGradient id="backg" x1="0" y1="0" x2="0" y2="1"><stop offset="0" stop-color="#d8dde3"/><stop offset="1" stop-color="#b6cde4"/></linearGradient>
<linearGradient id="rightg" x1="0" y1="0" x2="0" y2="1"><stop offset="0" stop-color="#a9aeb6"/><stop offset="1" stop-color="#8a9db4"/></linearGradient>
<linearGradient id="leftg" x1="0" y1="0" x2="0" y2="1"><stop offset="0" stop-color="#818357"/><stop offset="1" stop-color="#767a58"/></linearGradient>
<clipPath id="cFront"><polygon points="817.5,340.5 1339.0,295.0 1293.0,871.0 831.0,970.0"/></clipPath>
<clipPath id="cLeft"><polygon points="752.5,289.0 817.5,340.5 831.0,970.0 772.0,870.0"/></clipPath>
<clipPath id="cTop"><polygon points="752.5,289.0 1235.0,252.0 1339.0,295.0 817.5,340.5"/></clipPath>
<clipPath id="cOut"><path clip-rule="evenodd" d="M663,54 H1361 V1012 H663 Z M752.5,289.0 L1235.0,252.0 L1339.0,295.0 L1293.0,871.0 L831.0,970.0 L772.0,870.0 Z"/></clipPath>
<clipPath id="cPipeOut"><path d="M663,54 L786,54 L786,382 Q801,425 795,470 L795,1012 L663,1012 Z"/></clipPath>
<clipPath id="cPipeLeft"><path d="M786,54 L1361,54 L1361,1012 L795,1012 L795,470 Q801,425 786,382 Z"/></clipPath>
<pattern id="noise" patternUnits="userSpaceOnUse" width="24" height="16"><path d="M5.7,8.7 h3.5 M14.5,10.0 h2.3 M0.3,13.4 h3.0 M5.6,15.9 h3.9 M20.1,7.6 h4.6 M3.6,10.2 h5.5 M12.6,11.9 h4.7 M1.5,12.1 h4.4 M7.2,0.5 h5.5 M11.3,11.5 h5.5 M17.1,14.7 h3.6 M19.2,7.1 h5.7 M21.1,1.6 h2.5 M5.2,15.4 h3.7 M15.0,4.8 l0.1,2.8 M8.4,9.4 l0.7,3.8 M16.4,14.9 l2.9,4.0 M16.1,2.6 l2.9,3.9 M21.7,9.1 l1.7,2.4" stroke="#a898a8" stroke-width="1.1" fill="none"/></pattern>
</defs>
<polygon points="752.5,289.0 1235.0,252.0 1204.0,787.5 772.0,870.0" fill="url(#backg)"/>
<polygon points="1235.0,252.0 1339.0,295.0 1293.0,871.0 1204.0,787.5" fill="url(#rightg)"/>
<polygon points="772.0,870.0 1204.0,787.5 1293.0,871.0 831.0,970.0" fill="#7b5586"/>
<polygon points="752.5,289.0 817.5,340.5 831.0,970.0 772.0,870.0" fill="url(#leftg)"/>
<polygon points="752.5,289.0 1235.0,252.0 1339.0,295.0 817.5,340.5" fill="#835757"/>
<polygon points="772,870 829,860 831,970" fill="#5e3e40"/>
<g fill="none" stroke="#4a5058" stroke-width="1" opacity="0.6"><polyline points="772.0,870.0 1204.0,787.5 1293.0,871.0"/><polyline points="1235.0,252.0 1204.0,787.5"/></g>
<g fill="none" stroke="#4e8a30" stroke-width="1" opacity="0.7"><polyline points="752.5,289.0 1235.0,252.0 1339.0,295.0"/></g>
<polygon points="1290,274 1339,295 1283,300" fill="#6a3b3e"/>
<g clip-path="url(#cFront)"><polygon points="1109.0,290.0 1109.2,294.8 1109.4,299.7 1109.6,304.5 1109.8,309.3 1110.1,314.1 1110.6,318.9 1111.0,323.7 1111.5,328.6 1112.0,333.4 1112.4,338.2 1112.9,343.0 1113.4,347.8 1113.8,352.6 1114.3,357.4 1114.8,362.2 1115.2,367.0 1115.7,371.8 1116.2,376.6 1116.7,381.4 1117.1,386.2 1117.6,391.1 1118.1,395.9 1118.5,400.7 1119.0,405.5 1119.5,410.3 1119.9,415.1 1120.4,419.9 1120.9,424.7 1121.3,429.5 1121.8,434.3 1122.3,439.1 1122.7,443.9 1123.2,448.8 1123.7,453.6 1124.1,458.4 1124.6,463.2 1125.1,468.0 1125.5,472.8 1126.0,477.6 1126.5,482.4 1126.9,487.2 1127.4,492.0 1127.9,496.8 1128.3,501.6 1128.8,506.5 1129.3,511.3 1129.7,516.1 1130.2,520.9 1130.7,525.7 1131.1,530.5 1131.6,535.3 1132.1,540.1 1132.5,544.9 1133.0,549.7 1133.5,554.5 1133.9,559.3 1134.3,564.2 1134.6,569.0 1135.0,573.8 1135.3,578.6 1135.6,583.4 1136.0,588.3 1136.3,593.1 1136.6,597.9 1137.0,602.7 1137.3,607.5 1137.6,612.4 1138.0,617.2 1138.3,622.0 1138.6,626.8 1139.0,631.6 1139.3,636.4 1139.7,641.3 1140.0,646.1 1140.3,650.9 1140.7,655.7 1141.0,660.5 1141.3,665.4 1141.7,670.2 1142.0,675.0 1141.9,679.0 1141.9,683.1 1141.4,687.1 1140.7,691.0 1139.9,695.0 1138.7,698.8 1137.5,702.7 1135.9,706.4 1134.3,710.1 1132.6,713.8 1130.6,717.3 1128.6,720.7 1126.5,724.2 1124.1,727.5 1121.8,730.8 1119.4,734.0 1116.8,737.0 1114.1,740.1 1111.5,743.1 1108.6,746.0 1105.7,748.8 1102.8,751.6 1099.7,754.2 1096.6,756.8 1093.5,759.4 1090.3,761.7 1087.0,764.0 1083.7,766.4 1080.2,768.5 1076.7,770.5 1073.3,772.5 1069.7,774.4 1066.1,776.1 1062.4,777.9 1058.7,779.5 1055.0,781.0 1051.2,782.5 1047.5,784.0 1043.7,785.5 1040.0,787.0 1040.0,789.0 1043.8,787.5 1047.7,786.0 1051.5,784.5 1055.3,783.0 1059.2,781.5 1062.9,779.8 1066.7,778.1 1070.4,776.3 1074.0,774.4 1077.6,772.3 1081.1,770.3 1084.7,768.1 1088.0,765.8 1091.4,763.4 1094.8,761.0 1097.9,758.4 1101.1,755.7 1104.2,753.1 1107.2,750.2 1110.1,747.3 1113.0,744.4 1115.7,741.3 1118.4,738.2 1121.1,735.1 1123.5,731.7 1125.9,728.4 1128.3,725.0 1130.4,721.5 1132.5,717.9 1134.5,714.4 1136.2,710.6 1137.9,706.8 1139.4,703.0 1140.6,699.1 1141.9,695.2 1142.7,691.1 1143.4,687.1 1143.9,683.0 1144.1,678.9 1144.2,674.8 1143.9,670.0 1143.6,665.2 1143.3,660.3 1143.0,655.5 1142.7,650.7 1142.4,645.9 1142.1,641.1 1141.8,636.3 1141.5,631.4 1141.2,626.6 1140.9,621.8 1140.6,617.0 1140.3,612.2 1140.0,607.4 1139.7,602.5 1139.4,597.7 1139.1,592.9 1138.8,588.1 1138.5,583.3 1138.2,578.5 1137.9,573.6 1137.6,568.8 1137.3,564.0 1137.0,559.2 1136.5,554.4 1136.1,549.6 1135.7,544.8 1135.2,540.0 1134.8,535.2 1134.4,530.4 1134.0,525.6 1133.5,520.7 1133.1,515.9 1132.7,511.1 1132.3,506.3 1131.9,501.5 1131.4,496.7 1131.0,491.9 1130.6,487.1 1130.2,482.3 1129.7,477.5 1129.3,472.7 1128.9,467.9 1128.5,463.1 1128.0,458.3 1127.6,453.5 1127.2,448.7 1126.8,443.9 1126.3,439.1 1125.9,434.3 1125.5,429.4 1125.1,424.6 1124.6,419.8 1124.2,415.0 1123.8,410.2 1123.4,405.4 1123.0,400.6 1122.5,395.8 1122.1,391.0 1121.7,386.2 1121.3,381.4 1120.8,376.6 1120.4,371.8 1120.0,367.0 1119.6,362.2 1119.1,357.4 1118.7,352.6 1118.3,347.8 1117.9,343.0 1117.4,338.1 1117.0,333.3 1116.6,328.5 1116.2,323.7 1115.7,318.9 1115.3,314.1 1115.1,309.3 1114.9,304.5 1114.7,299.6 1114.5,294.8 1114.3,290.0" fill="#5e6e5a" stroke="#5e6e5a" stroke-width="0.6"/>
<polygon points="1114.3,290.0 1114.5,294.8 1114.7,299.6 1114.9,304.5 1115.1,309.3 1115.3,314.1 1115.7,318.9 1116.2,323.7 1116.6,328.5 1117.0,333.3 1117.4,338.1 1117.9,343.0 1118.3,347.8 1118.7,352.6 1119.1,357.4 1119.6,362.2 1120.0,367.0 1120.4,371.8 1120.8,376.6 1121.3,381.4 1121.7,386.2 1122.1,391.0 1122.5,395.8 1123.0,400.6 1123.4,405.4 1123.8,410.2 1124.2,415.0 1124.6,419.8 1125.1,424.6 1125.5,429.4 1125.9,434.3 1126.3,439.1 1126.8,443.9 1127.2,448.7 1127.6,453.5 1128.0,458.3 1128.5,463.1 1128.9,467.9 1129.3,472.7 1129.7,477.5 1130.2,482.3 1130.6,487.1 1131.0,491.9 1131.4,496.7 1131.9,501.5 1132.3,506.3 1132.7,511.1 1133.1,515.9 1133.5,520.7 1134.0,525.6 1134.4,530.4 1134.8,535.2 1135.2,540.0 1135.7,544.8 1136.1,549.6 1136.5,554.4 1137.0,559.2 1137.3,564.0 1137.6,568.8 1137.9,573.6 1138.2,578.5 1138.5,583.3 1138.8,588.1 1139.1,592.9 1139.4,597.7 1139.7,602.5 1140.0,607.4 1140.3,612.2 1140.6,617.0 1140.9,621.8 1141.2,626.6 1141.5,631.4 1141.8,636.3 1142.1,641.1 1142.4,645.9 1142.7,650.7 1143.0,655.5 1143.3,660.3 1143.6,665.2 1143.9,670.0 1144.2,674.8 1144.1,678.9 1143.9,683.0 1143.4,687.1 1142.7,691.1 1141.9,695.2 1140.6,699.1 1139.4,703.0 1137.9,706.8 1136.2,710.6 1134.5,714.4 1132.5,717.9 1130.4,721.5 1128.3,725.0 1125.9,728.4 1123.5,731.7 1121.1,735.1 1118.4,738.2 1115.7,741.3 1113.0,744.4 1110.1,747.3 1107.2,750.2 1104.2,753.1 1101.1,755.7 1097.9,758.4 1094.8,761.0 1091.4,763.4 1088.0,765.8 1084.7,768.1 1081.1,770.3 1077.6,772.3 1074.0,774.4 1070.4,776.3 1066.7,778.1 1062.9,779.8 1059.2,781.5 1055.3,783.0 1051.5,784.5 1047.7,786.0 1043.8,787.5 1040.0,789.0 1040.0,798.4 1044.3,796.9 1048.5,795.5 1052.8,794.0 1057.0,792.4 1061.2,790.8 1065.4,789.1 1069.5,787.2 1073.6,785.4 1077.7,783.4 1081.6,781.1 1085.5,778.9 1089.4,776.6 1093.1,774.0 1096.8,771.4 1100.5,768.8 1104.0,765.9 1107.4,763.0 1110.9,760.1 1114.1,757.0 1117.3,753.8 1120.5,750.5 1123.4,747.1 1126.3,743.6 1129.1,740.1 1131.7,736.5 1134.3,732.7 1136.8,729.0 1139.1,725.1 1141.3,721.1 1143.4,717.2 1145.2,713.0 1147.0,708.9 1148.7,704.7 1150.0,700.4 1151.4,696.1 1152.4,691.7 1153.2,687.2 1153.9,682.8 1154.2,678.3 1154.5,673.8 1154.3,669.0 1154.2,664.2 1154.1,659.4 1153.9,654.6 1153.8,649.8 1153.7,645.0 1153.5,640.2 1153.4,635.3 1153.3,630.5 1153.2,625.7 1153.0,620.9 1152.9,616.1 1152.8,611.3 1152.6,606.5 1152.5,601.7 1152.4,596.9 1152.2,592.1 1152.1,587.3 1152.0,582.5 1151.9,577.7 1151.7,572.9 1151.6,568.1 1151.5,563.3 1151.3,558.5 1151.1,553.7 1150.8,548.9 1150.6,544.1 1150.4,539.3 1150.2,534.5 1150.0,529.7 1149.7,524.9 1149.5,520.1 1149.3,515.3 1149.1,510.5 1148.9,505.7 1148.6,501.0 1148.4,496.2 1148.2,491.4 1148.0,486.6 1147.8,481.8 1147.6,477.0 1147.3,472.2 1147.1,467.4 1146.9,462.6 1146.7,457.8 1146.5,453.0 1146.3,448.2 1146.0,443.5 1145.8,438.7 1145.6,433.9 1145.4,429.1 1145.2,424.3 1144.9,419.5 1144.7,414.7 1144.5,409.9 1144.3,405.1 1144.1,400.3 1143.9,395.5 1143.6,390.7 1143.4,386.0 1143.2,381.2 1143.0,376.4 1142.8,371.6 1142.6,366.8 1142.3,362.0 1142.1,357.2 1141.9,352.4 1141.7,347.6 1141.5,342.8 1141.2,338.0 1141.0,333.2 1140.8,328.5 1140.6,323.7 1140.4,318.9 1140.2,314.1 1140.1,309.3 1140.0,304.5 1139.9,299.6 1139.9,294.8 1139.8,290.0" fill="#7a966c" stroke="#7a966c" stroke-width="0.6"/>
<polygon points="1139.8,290.0 1139.9,294.8 1139.9,299.6 1140.0,304.5 1140.1,309.3 1140.2,314.1 1140.4,318.9 1140.6,323.7 1140.8,328.5 1141.0,333.2 1141.2,338.0 1141.5,342.8 1141.7,347.6 1141.9,352.4 1142.1,357.2 1142.3,362.0 1142.6,366.8 1142.8,371.6 1143.0,376.4 1143.2,381.2 1143.4,386.0 1143.6,390.7 1143.9,395.5 1144.1,400.3 1144.3,405.1 1144.5,409.9 1144.7,414.7 1144.9,419.5 1145.2,424.3 1145.4,429.1 1145.6,433.9 1145.8,438.7 1146.0,443.5 1146.3,448.2 1146.5,453.0 1146.7,457.8 1146.9,462.6 1147.1,467.4 1147.3,472.2 1147.6,477.0 1147.8,481.8 1148.0,486.6 1148.2,491.4 1148.4,496.2 1148.6,501.0 1148.9,505.7 1149.1,510.5 1149.3,515.3 1149.5,520.1 1149.7,524.9 1150.0,529.7 1150.2,534.5 1150.4,539.3 1150.6,544.1 1150.8,548.9 1151.1,553.7 1151.3,558.5 1151.5,563.3 1151.6,568.1 1151.7,572.9 1151.9,577.7 1152.0,582.5 1152.1,587.3 1152.2,592.1 1152.4,596.9 1152.5,601.7 1152.6,606.5 1152.8,611.3 1152.9,616.1 1153.0,620.9 1153.2,625.7 1153.3,630.5 1153.4,635.3 1153.5,640.2 1153.7,645.0 1153.8,649.8 1153.9,654.6 1154.1,659.4 1154.2,664.2 1154.3,669.0 1154.5,673.8 1154.2,678.3 1153.9,682.8 1153.2,687.2 1152.4,691.7 1151.4,696.1 1150.0,700.4 1148.7,704.7 1147.0,708.9 1145.2,713.0 1143.4,717.2 1141.3,721.1 1139.1,725.1 1136.8,729.0 1134.3,732.7 1131.7,736.5 1129.1,740.1 1126.3,743.6 1123.4,747.1 1120.5,750.5 1117.3,753.8 1114.1,757.0 1110.9,760.1 1107.4,763.0 1104.0,765.9 1100.5,768.8 1096.8,771.4 1093.1,774.0 1089.4,776.6 1085.5,778.9 1081.6,781.1 1077.7,783.4 1073.6,785.4 1069.5,787.2 1065.4,789.1 1061.2,790.8 1057.0,792.4 1052.8,794.0 1048.5,795.5 1044.3,796.9 1040.0,798.4 1040.0,809.7 1044.8,808.3 1049.5,806.8 1054.3,805.4 1059.0,803.7 1063.7,802.0 1068.3,800.2 1072.9,798.2 1077.5,796.2 1082.0,794.0 1086.4,791.6 1090.7,789.2 1095.0,786.7 1099.2,783.9 1103.3,781.1 1107.4,778.2 1111.2,775.0 1115.0,771.8 1118.9,768.6 1122.4,765.0 1125.9,761.5 1129.4,757.9 1132.5,754.0 1135.7,750.1 1138.8,746.2 1141.6,742.1 1144.3,737.9 1147.1,733.8 1149.4,729.4 1151.8,725.0 1154.1,720.6 1156.0,715.9 1158.0,711.3 1159.8,706.7 1161.2,701.9 1162.7,697.1 1163.9,692.3 1164.9,687.4 1165.7,682.5 1166.2,677.5 1166.8,672.6 1166.8,667.8 1166.9,663.0 1167.0,658.2 1167.1,653.4 1167.1,648.6 1167.2,643.8 1167.3,639.1 1167.4,634.3 1167.4,629.5 1167.5,624.7 1167.6,619.9 1167.6,615.1 1167.7,610.3 1167.8,605.5 1167.9,600.7 1167.9,595.9 1168.0,591.1 1168.1,586.4 1168.2,581.6 1168.2,576.8 1168.3,572.0 1168.4,567.2 1168.4,562.4 1168.5,557.6 1168.5,552.8 1168.5,548.0 1168.5,543.3 1168.5,538.5 1168.5,533.7 1168.6,528.9 1168.6,524.2 1168.6,519.4 1168.6,514.6 1168.7,509.8 1168.7,505.1 1168.7,500.3 1168.8,495.5 1168.8,490.7 1168.8,486.0 1168.8,481.2 1168.9,476.4 1168.9,471.6 1168.9,466.8 1169.0,462.1 1169.0,457.3 1169.0,452.5 1169.0,447.7 1169.1,443.0 1169.1,438.2 1169.1,433.4 1169.2,428.6 1169.2,423.9 1169.2,419.1 1169.3,414.3 1169.3,409.5 1169.3,404.8 1169.3,400.0 1169.4,395.2 1169.4,390.4 1169.4,385.7 1169.5,380.9 1169.5,376.1 1169.5,371.3 1169.5,366.6 1169.6,361.8 1169.6,357.0 1169.6,352.2 1169.7,347.5 1169.7,342.7 1169.7,337.9 1169.8,333.1 1169.8,328.4 1169.8,323.6 1169.8,318.8 1169.9,314.0 1169.9,309.2 1170.0,304.4 1170.1,299.6 1170.2,294.8 1170.2,290.0" fill="#8cc076" stroke="#8cc076" stroke-width="0.6"/>
<polygon points="1170.2,290.0 1170.2,294.8 1170.1,299.6 1170.0,304.4 1169.9,309.2 1169.9,314.0 1169.8,318.8 1169.8,323.6 1169.8,328.4 1169.8,333.1 1169.7,337.9 1169.7,342.7 1169.7,347.5 1169.6,352.2 1169.6,357.0 1169.6,361.8 1169.5,366.6 1169.5,371.3 1169.5,376.1 1169.5,380.9 1169.4,385.7 1169.4,390.4 1169.4,395.2 1169.3,400.0 1169.3,404.8 1169.3,409.5 1169.3,414.3 1169.2,419.1 1169.2,423.9 1169.2,428.6 1169.1,433.4 1169.1,438.2 1169.1,443.0 1169.0,447.7 1169.0,452.5 1169.0,457.3 1169.0,462.1 1168.9,466.8 1168.9,471.6 1168.9,476.4 1168.8,481.2 1168.8,486.0 1168.8,490.7 1168.8,495.5 1168.7,500.3 1168.7,505.1 1168.7,509.8 1168.6,514.6 1168.6,519.4 1168.6,524.2 1168.6,528.9 1168.5,533.7 1168.5,538.5 1168.5,543.3 1168.5,548.0 1168.5,552.8 1168.5,557.6 1168.4,562.4 1168.4,567.2 1168.3,572.0 1168.2,576.8 1168.2,581.6 1168.1,586.4 1168.0,591.1 1167.9,595.9 1167.9,600.7 1167.8,605.5 1167.7,610.3 1167.6,615.1 1167.6,619.9 1167.5,624.7 1167.4,629.5 1167.4,634.3 1167.3,639.1 1167.2,643.8 1167.1,648.6 1167.1,653.4 1167.0,658.2 1166.9,663.0 1166.8,667.8 1166.8,672.6 1166.2,677.5 1165.7,682.5 1164.9,687.4 1163.9,692.3 1162.7,697.1 1161.2,701.9 1159.8,706.7 1158.0,711.3 1156.0,715.9 1154.1,720.6 1151.8,725.0 1149.4,729.4 1147.1,733.8 1144.3,737.9 1141.6,742.1 1138.8,746.2 1135.7,750.1 1132.5,754.0 1129.4,757.9 1125.9,761.5 1122.4,765.0 1118.9,768.6 1115.0,771.8 1111.2,775.0 1107.4,778.2 1103.3,781.1 1099.2,783.9 1095.0,786.7 1090.7,789.2 1086.4,791.6 1082.0,794.0 1077.5,796.2 1072.9,798.2 1068.3,800.2 1063.7,802.0 1059.0,803.7 1054.3,805.4 1049.5,806.8 1044.8,808.3 1040.0,809.7 1040.0,835.4 1045.9,834.1 1051.8,832.7 1057.7,831.3 1063.5,829.4 1069.3,827.5 1075.1,825.5 1080.7,823.2 1086.3,820.8 1091.9,818.4 1097.3,815.6 1102.6,812.7 1107.9,809.8 1113.0,806.4 1118.1,803.0 1123.1,799.6 1127.8,795.7 1132.4,791.7 1137.0,787.8 1141.3,783.4 1145.5,779.0 1149.6,774.6 1153.4,769.8 1157.1,765.0 1160.8,760.1 1164.0,755.0 1167.2,749.8 1170.4,744.6 1173.1,739.2 1175.8,733.7 1178.5,728.3 1180.7,722.6 1182.9,716.9 1185.1,711.2 1186.8,705.4 1188.6,699.6 1190.2,693.7 1191.6,687.8 1192.7,681.8 1193.8,675.8 1194.8,669.9 1195.4,665.1 1195.9,660.3 1196.5,655.6 1197.0,650.8 1197.5,646.1 1198.1,641.3 1198.6,636.5 1199.1,631.8 1199.7,627.0 1200.2,622.3 1200.7,617.5 1201.3,612.8 1201.8,608.0 1202.3,603.2 1202.9,598.5 1203.4,593.7 1204.0,589.0 1204.5,584.2 1205.0,579.4 1205.6,574.7 1206.1,569.9 1206.6,565.2 1207.2,560.4 1207.7,555.6 1208.2,550.9 1208.7,546.1 1209.2,541.4 1209.8,536.6 1210.4,531.9 1211.0,527.2 1211.6,522.4 1212.2,517.7 1212.8,512.9 1213.3,508.2 1213.9,503.5 1214.5,498.7 1215.1,494.0 1215.7,489.3 1216.3,484.5 1216.9,479.8 1217.5,475.0 1218.1,470.3 1218.7,465.6 1219.3,460.8 1219.9,456.1 1220.4,451.3 1221.0,446.6 1221.6,441.9 1222.2,437.1 1222.8,432.4 1223.4,427.7 1224.0,422.9 1224.6,418.2 1225.2,413.4 1225.8,408.7 1226.4,404.0 1227.0,399.2 1227.6,394.5 1228.1,389.7 1228.7,385.0 1229.3,380.3 1229.9,375.5 1230.5,370.8 1231.1,366.0 1231.7,361.3 1232.3,356.6 1232.9,351.8 1233.5,347.1 1234.1,342.4 1234.7,337.6 1235.2,332.9 1235.8,328.1 1236.4,323.4 1237.0,318.7 1237.6,313.9 1238.0,309.1 1238.4,304.4 1238.8,299.6 1239.3,294.8 1239.7,290.0" fill="#96d27c" stroke="#96d27c" stroke-width="0.6"/>
<polygon points="1239.7,290.0 1239.3,294.8 1238.8,299.6 1238.4,304.4 1238.0,309.1 1237.6,313.9 1237.0,318.7 1236.4,323.4 1235.8,328.1 1235.2,332.9 1234.7,337.6 1234.1,342.4 1233.5,347.1 1232.9,351.8 1232.3,356.6 1231.7,361.3 1231.1,366.0 1230.5,370.8 1229.9,375.5 1229.3,380.3 1228.7,385.0 1228.1,389.7 1227.6,394.5 1227.0,399.2 1226.4,404.0 1225.8,408.7 1225.2,413.4 1224.6,418.2 1224.0,422.9 1223.4,427.7 1222.8,432.4 1222.2,437.1 1221.6,441.9 1221.0,446.6 1220.4,451.3 1219.9,456.1 1219.3,460.8 1218.7,465.6 1218.1,470.3 1217.5,475.0 1216.9,479.8 1216.3,484.5 1215.7,489.3 1215.1,494.0 1214.5,498.7 1213.9,503.5 1213.3,508.2 1212.8,512.9 1212.2,517.7 1211.6,522.4 1211.0,527.2 1210.4,531.9 1209.8,536.6 1209.2,541.4 1208.7,546.1 1208.2,550.9 1207.7,555.6 1207.2,560.4 1206.6,565.2 1206.1,569.9 1205.6,574.7 1205.0,579.4 1204.5,584.2 1204.0,589.0 1203.4,593.7 1202.9,598.5 1202.3,603.2 1201.8,608.0 1201.3,612.8 1200.7,617.5 1200.2,622.3 1199.7,627.0 1199.1,631.8 1198.6,636.5 1198.1,641.3 1197.5,646.1 1197.0,650.8 1196.5,655.6 1195.9,660.3 1195.4,665.1 1194.8,669.9 1193.8,675.8 1192.7,681.8 1191.6,687.8 1190.2,693.7 1188.6,699.6 1186.8,705.4 1185.1,711.2 1182.9,716.9 1180.7,722.6 1178.5,728.3 1175.8,733.7 1173.1,739.2 1170.4,744.6 1167.2,749.8 1164.0,755.0 1160.8,760.1 1157.1,765.0 1153.4,769.8 1149.6,774.6 1145.5,779.0 1141.3,783.4 1137.0,787.8 1132.4,791.7 1127.8,795.7 1123.1,799.6 1118.1,803.0 1113.0,806.4 1107.9,809.8 1102.6,812.7 1097.3,815.6 1091.9,818.4 1086.3,820.8 1080.7,823.2 1075.1,825.5 1069.3,827.5 1063.5,829.4 1057.7,831.3 1051.8,832.7 1045.9,834.1 1040.0,835.4 1040.0,846.4 1046.4,845.0 1052.8,843.7 1059.2,842.3 1065.4,840.3 1071.7,838.3 1077.9,836.3 1084.0,833.9 1090.0,831.3 1096.1,828.8 1101.9,825.8 1107.7,822.7 1113.4,819.6 1118.9,816.0 1124.3,812.3 1129.8,808.7 1134.8,804.5 1139.8,800.2 1144.8,796.0 1149.3,791.3 1153.8,786.5 1158.3,781.7 1162.3,776.5 1166.2,771.3 1170.1,766.0 1173.5,760.5 1177.0,754.9 1180.3,749.2 1183.2,743.3 1186.1,737.5 1188.9,731.5 1191.2,725.4 1193.5,719.3 1195.9,713.2 1197.7,706.9 1199.6,700.6 1201.4,694.3 1202.9,687.9 1204.2,681.5 1205.5,675.1 1206.8,668.7 1207.5,664.0 1208.3,659.2 1209.0,654.5 1209.7,649.7 1210.5,645.0 1211.2,640.2 1211.9,635.5 1212.7,630.7 1213.4,626.0 1214.1,621.2 1214.9,616.5 1215.6,611.8 1216.3,607.0 1217.1,602.3 1217.8,597.5 1218.5,592.8 1219.3,588.0 1220.0,583.3 1220.7,578.5 1221.5,573.8 1222.2,569.0 1222.9,564.3 1223.6,559.6 1224.4,554.8 1225.1,550.1 1225.8,545.3 1226.5,540.6 1227.4,535.9 1228.2,531.1 1229.0,526.4 1229.9,521.7 1230.7,517.0 1231.5,512.2 1232.4,507.5 1233.2,502.8 1234.0,498.1 1234.9,493.3 1235.7,488.6 1236.5,483.9 1237.3,479.2 1238.2,474.5 1239.0,469.7 1239.8,465.0 1240.7,460.3 1241.5,455.6 1242.3,450.8 1243.2,446.1 1244.0,441.4 1244.8,436.7 1245.7,431.9 1246.5,427.2 1247.3,422.5 1248.2,417.8 1249.0,413.1 1249.8,408.3 1250.7,403.6 1251.5,398.9 1252.3,394.2 1253.1,389.4 1254.0,384.7 1254.8,380.0 1255.6,375.3 1256.5,370.6 1257.3,365.8 1258.1,361.1 1259.0,356.4 1259.8,351.7 1260.6,346.9 1261.5,342.2 1262.3,337.5 1263.1,332.8 1264.0,328.0 1264.8,323.3 1265.6,318.6 1266.5,313.9 1267.0,309.1 1267.6,304.3 1268.1,299.6 1268.7,294.8 1269.2,290.0" fill="#88bc72" stroke="#88bc72" stroke-width="0.6"/>
<polygon points="1269.2,290.0 1268.7,294.8 1268.1,299.6 1267.6,304.3 1267.0,309.1 1266.5,313.9 1265.6,318.6 1264.8,323.3 1264.0,328.0 1263.1,332.8 1262.3,337.5 1261.5,342.2 1260.6,346.9 1259.8,351.7 1259.0,356.4 1258.1,361.1 1257.3,365.8 1256.5,370.6 1255.6,375.3 1254.8,380.0 1254.0,384.7 1253.1,389.4 1252.3,394.2 1251.5,398.9 1250.7,403.6 1249.8,408.3 1249.0,413.1 1248.2,417.8 1247.3,422.5 1246.5,427.2 1245.7,431.9 1244.8,436.7 1244.0,441.4 1243.2,446.1 1242.3,450.8 1241.5,455.6 1240.7,460.3 1239.8,465.0 1239.0,469.7 1238.2,474.5 1237.3,479.2 1236.5,483.9 1235.7,488.6 1234.9,493.3 1234.0,498.1 1233.2,502.8 1232.4,507.5 1231.5,512.2 1230.7,517.0 1229.9,521.7 1229.0,526.4 1228.2,531.1 1227.4,535.9 1226.5,540.6 1225.8,545.3 1225.1,550.1 1224.4,554.8 1223.6,559.6 1222.9,564.3 1222.2,569.0 1221.5,573.8 1220.7,578.5 1220.0,583.3 1219.3,588.0 1218.5,592.8 1217.8,597.5 1217.1,602.3 1216.3,607.0 1215.6,611.8 1214.9,616.5 1214.1,621.2 1213.4,626.0 1212.7,630.7 1211.9,635.5 1211.2,640.2 1210.5,645.0 1209.7,649.7 1209.0,654.5 1208.3,659.2 1207.5,664.0 1206.8,668.7 1205.5,675.1 1204.2,681.5 1202.9,687.9 1201.4,694.3 1199.6,700.6 1197.7,706.9 1195.9,713.2 1193.5,719.3 1191.2,725.4 1188.9,731.5 1186.1,737.5 1183.2,743.3 1180.3,749.2 1177.0,754.9 1173.5,760.5 1170.1,766.0 1166.2,771.3 1162.3,776.5 1158.3,781.7 1153.8,786.5 1149.3,791.3 1144.8,796.0 1139.8,800.2 1134.8,804.5 1129.8,808.7 1124.3,812.3 1118.9,816.0 1113.4,819.6 1107.7,822.7 1101.9,825.8 1096.1,828.8 1090.0,831.3 1084.0,833.9 1077.9,836.3 1071.7,838.3 1065.4,840.3 1059.2,842.3 1052.8,843.7 1046.4,845.0 1040.0,846.4 1040.0,851.0 1046.6,849.7 1053.2,848.3 1059.8,847.0 1066.3,844.9 1072.7,842.9 1079.1,840.9 1085.4,838.4 1091.6,835.8 1097.8,833.2 1103.9,830.1 1109.8,826.9 1115.7,823.7 1121.4,820.1 1127.0,816.3 1132.6,812.5 1137.8,808.2 1142.9,803.8 1148.1,799.5 1152.7,794.6 1157.3,789.7 1161.9,784.7 1166.0,779.3 1170.1,774.0 1174.1,768.5 1177.6,762.8 1181.1,757.0 1184.5,751.2 1187.4,745.1 1190.4,739.0 1193.2,732.9 1195.6,726.6 1198.0,720.3 1200.4,714.0 1202.3,707.5 1204.2,701.0 1206.1,694.6 1207.7,688.0 1209.1,681.4 1210.5,674.8 1211.8,668.2 1212.7,663.5 1213.5,658.7 1214.3,654.0 1215.1,649.3 1215.9,644.5 1216.7,639.8 1217.5,635.0 1218.4,630.3 1219.2,625.6 1220.0,620.8 1220.8,616.1 1221.6,611.3 1222.4,606.6 1223.3,601.9 1224.1,597.1 1224.9,592.4 1225.7,587.6 1226.5,582.9 1227.3,578.2 1228.2,573.4 1229.0,568.7 1229.8,563.9 1230.6,559.2 1231.4,554.5 1232.2,549.7 1233.0,545.0 1233.9,540.2 1234.8,535.5 1235.7,530.8 1236.6,526.1 1237.6,521.4 1238.5,516.7 1239.4,511.9 1240.4,507.2 1241.3,502.5 1242.2,497.8 1243.2,493.1 1244.1,488.4 1245.0,483.6 1246.0,478.9 1246.9,474.2 1247.8,469.5 1248.8,464.8 1249.7,460.1 1250.6,455.3 1251.6,450.6 1252.5,445.9 1253.4,441.2 1254.4,436.5 1255.3,431.8 1256.2,427.0 1257.2,422.3 1258.1,417.6 1259.0,412.9 1260.0,408.2 1260.9,403.5 1261.8,398.8 1262.8,394.0 1263.7,389.3 1264.6,384.6 1265.6,379.9 1266.5,375.2 1267.4,370.5 1268.4,365.7 1269.3,361.0 1270.2,356.3 1271.2,351.6 1272.1,346.9 1273.0,342.2 1273.9,337.4 1274.9,332.7 1275.8,328.0 1276.7,323.3 1277.7,318.6 1278.6,313.9 1279.3,309.1 1279.9,304.3 1280.5,299.5 1281.1,294.8 1281.7,290.0" fill="#6e9060" stroke="#6e9060" stroke-width="0.6"/>
<polygon points="1281.7,290.0 1281.1,294.8 1280.5,299.5 1279.9,304.3 1279.3,309.1 1278.6,313.9 1277.7,318.6 1276.7,323.3 1275.8,328.0 1274.9,332.7 1273.9,337.4 1273.0,342.2 1272.1,346.9 1271.2,351.6 1270.2,356.3 1269.3,361.0 1268.4,365.7 1267.4,370.5 1266.5,375.2 1265.6,379.9 1264.6,384.6 1263.7,389.3 1262.8,394.0 1261.8,398.8 1260.9,403.5 1260.0,408.2 1259.0,412.9 1258.1,417.6 1257.2,422.3 1256.2,427.0 1255.3,431.8 1254.4,436.5 1253.4,441.2 1252.5,445.9 1251.6,450.6 1250.6,455.3 1249.7,460.1 1248.8,464.8 1247.8,469.5 1246.9,474.2 1246.0,478.9 1245.0,483.6 1244.1,488.4 1243.2,493.1 1242.2,497.8 1241.3,502.5 1240.4,507.2 1239.4,511.9 1238.5,516.7 1237.6,521.4 1236.6,526.1 1235.7,530.8 1234.8,535.5 1233.9,540.2 1233.0,545.0 1232.2,549.7 1231.4,554.5 1230.6,559.2 1229.8,563.9 1229.0,568.7 1228.2,573.4 1227.3,578.2 1226.5,582.9 1225.7,587.6 1224.9,592.4 1224.1,597.1 1223.3,601.9 1222.4,606.6 1221.6,611.3 1220.8,616.1 1220.0,620.8 1219.2,625.6 1218.4,630.3 1217.5,635.0 1216.7,639.8 1215.9,644.5 1215.1,649.3 1214.3,654.0 1213.5,658.7 1212.7,663.5 1211.8,668.2 1210.5,674.8 1209.1,681.4 1207.7,688.0 1206.1,694.6 1204.2,701.0 1202.3,707.5 1200.4,714.0 1198.0,720.3 1195.6,726.6 1193.2,732.9 1190.4,739.0 1187.4,745.1 1184.5,751.2 1181.1,757.0 1177.6,762.8 1174.1,768.5 1170.1,774.0 1166.0,779.3 1161.9,784.7 1157.3,789.7 1152.7,794.6 1148.1,799.5 1142.9,803.8 1137.8,808.2 1132.6,812.5 1127.0,816.3 1121.4,820.1 1115.7,823.7 1109.8,826.9 1103.9,830.1 1097.8,833.2 1091.6,835.8 1085.4,838.4 1079.1,840.9 1072.7,842.9 1066.3,844.9 1059.8,847.0 1053.2,848.3 1046.6,849.7 1040.0,851.0 1040.0,853.0 1046.7,851.7 1053.4,850.3 1060.1,849.0 1066.6,846.9 1073.1,844.9 1079.6,842.8 1086.0,840.3 1092.3,837.7 1098.6,835.0 1104.7,832.0 1110.7,828.7 1116.7,825.5 1122.5,821.8 1128.1,818.0 1133.8,814.1 1139.0,809.8 1144.2,805.4 1149.5,800.9 1154.2,796.0 1158.8,791.0 1163.5,786.0 1167.6,780.6 1171.7,775.1 1175.7,769.6 1179.3,763.8 1182.9,757.9 1186.3,752.0 1189.2,745.9 1192.2,739.7 1195.1,733.5 1197.5,727.1 1199.9,720.7 1202.4,714.4 1204.3,707.8 1206.2,701.2 1208.1,694.7 1209.7,688.0 1211.2,681.4 1212.6,674.7 1214.0,668.0 1214.9,663.3 1215.7,658.5 1216.6,653.8 1217.4,649.1 1218.3,644.3 1219.1,639.6 1220.0,634.8 1220.8,630.1 1221.7,625.4 1222.5,620.6 1223.4,615.9 1224.2,611.2 1225.1,606.4 1225.9,601.7 1226.8,596.9 1227.6,592.2 1228.5,587.5 1229.3,582.7 1230.2,578.0 1231.0,573.3 1231.9,568.5 1232.7,563.8 1233.6,559.0 1234.4,554.3 1235.3,549.6 1236.1,544.8 1237.0,540.1 1238.0,535.4 1238.9,530.7 1239.9,526.0 1240.9,521.2 1241.9,516.5 1242.8,511.8 1243.8,507.1 1244.8,502.4 1245.8,497.7 1246.7,493.0 1247.7,488.2 1248.7,483.5 1249.7,478.8 1250.6,474.1 1251.6,469.4 1252.6,464.7 1253.6,460.0 1254.5,455.3 1255.5,450.5 1256.5,445.8 1257.5,441.1 1258.5,436.4 1259.4,431.7 1260.4,427.0 1261.4,422.3 1262.4,417.5 1263.3,412.8 1264.3,408.1 1265.3,403.4 1266.3,398.7 1267.2,394.0 1268.2,389.3 1269.2,384.6 1270.2,379.8 1271.1,375.1 1272.1,370.4 1273.1,365.7 1274.1,361.0 1275.0,356.3 1276.0,351.6 1277.0,346.8 1278.0,342.1 1278.9,337.4 1279.9,332.7 1280.9,328.0 1281.9,323.3 1282.8,318.6 1283.8,313.9 1284.5,309.1 1285.1,304.3 1285.8,299.5 1286.4,294.8 1287.0,290.0" fill="#667a5c" stroke="#667a5c" stroke-width="0.6"/><path d="M1109.0,290.0 L1114.3,290.0 L1139.8,290.0 L1170.2,290.0 L1205.1,290.0 L1239.7,290.0 L1269.2,290.0 L1281.7,290.0 L1287.0,290.0 M1110.1,314.1 L1115.3,314.1 L1140.2,314.1 L1169.9,314.0 L1203.9,314.0 L1237.6,313.9 L1266.5,313.9 L1278.6,313.9 L1283.8,313.9 M1112.4,338.2 L1117.4,338.1 L1141.2,338.0 L1169.7,337.9 L1202.4,337.8 L1234.7,337.6 L1262.3,337.5 L1273.9,337.4 L1278.9,337.4 M1114.8,362.2 L1119.6,362.2 L1142.3,362.0 L1169.6,361.8 L1200.8,361.5 L1231.7,361.3 L1258.1,361.1 L1269.3,361.0 L1274.1,361.0 M1117.1,386.2 L1121.7,386.2 L1143.4,386.0 L1169.4,385.7 L1199.2,385.3 L1228.7,385.0 L1254.0,384.7 L1264.6,384.6 L1269.2,384.6 M1119.5,410.3 L1123.8,410.2 L1144.5,409.9 L1169.3,409.5 L1197.7,409.1 L1225.8,408.7 L1249.8,408.3 L1260.0,408.2 L1264.3,408.1 M1121.8,434.3 L1125.9,434.3 L1145.6,433.9 L1169.1,433.4 L1196.1,432.9 L1222.8,432.4 L1245.7,431.9 L1255.3,431.8 L1259.4,431.7 M1124.1,458.4 L1128.0,458.3 L1146.7,457.8 L1169.0,457.3 L1194.6,456.7 L1219.9,456.1 L1241.5,455.6 L1250.6,455.3 L1254.5,455.3 M1126.5,482.4 L1130.2,482.3 L1147.8,481.8 L1168.8,481.2 L1193.0,480.5 L1216.9,479.8 L1237.3,479.2 L1246.0,478.9 L1249.7,478.8 M1128.8,506.5 L1132.3,506.3 L1148.9,505.7 L1168.7,505.1 L1191.4,504.3 L1213.9,503.5 L1233.2,502.8 L1241.3,502.5 L1244.8,502.4 M1131.1,530.5 L1134.4,530.4 L1150.0,529.7 L1168.6,528.9 L1189.9,528.0 L1211.0,527.2 L1229.0,526.4 L1236.6,526.1 L1239.9,526.0 M1133.5,554.5 L1136.5,554.4 L1151.1,553.7 L1168.5,552.8 L1188.4,551.9 L1208.2,550.9 L1225.1,550.1 L1232.2,549.7 L1235.3,549.6 M1135.3,578.6 L1138.2,578.5 L1151.9,577.7 L1168.2,576.8 L1187.0,575.7 L1205.6,574.7 L1221.5,573.8 L1228.2,573.4 L1231.0,573.3 M1137.0,602.7 L1139.7,602.5 L1152.5,601.7 L1167.9,600.7 L1185.5,599.6 L1202.9,598.5 L1217.8,597.5 L1224.1,597.1 L1226.8,596.9 M1138.6,626.8 L1141.2,626.6 L1153.2,625.7 L1167.5,624.7 L1183.9,623.5 L1200.2,622.3 L1214.1,621.2 L1220.0,620.8 L1222.5,620.6 M1140.3,650.9 L1142.7,650.7 L1153.8,649.8 L1167.1,648.6 L1182.4,647.3 L1197.5,646.1 L1210.5,645.0 L1215.9,644.5 L1218.3,644.3 M1142.0,675.0 L1144.2,674.8 L1154.5,673.8 L1166.8,672.6 L1180.9,671.2 L1194.8,669.9 L1206.8,668.7 L1211.8,668.2 L1214.0,668.0 M1139.9,695.0 L1141.9,695.2 L1151.4,696.1 L1162.7,697.1 L1175.7,698.4 L1188.6,699.6 L1199.6,700.6 L1204.2,701.0 L1206.2,701.2 M1132.6,713.8 L1134.5,714.4 L1143.4,717.2 L1154.1,720.6 L1166.4,724.4 L1178.5,728.3 L1188.9,731.5 L1193.2,732.9 L1195.1,733.5 M1121.8,730.8 L1123.5,731.7 L1131.7,736.5 L1141.6,742.1 L1152.8,748.6 L1164.0,755.0 L1173.5,760.5 L1177.6,762.8 L1179.3,763.8 M1108.6,746.0 L1110.1,747.3 L1117.3,753.8 L1125.9,761.5 L1135.7,770.3 L1145.5,779.0 L1153.8,786.5 L1157.3,789.7 L1158.8,791.0 M1093.5,759.4 L1094.8,761.0 L1100.5,768.8 L1107.4,778.2 L1115.3,788.9 L1123.1,799.6 L1129.8,808.7 L1132.6,812.5 L1133.8,814.1 M1076.7,770.5 L1077.6,772.3 L1081.6,781.1 L1086.4,791.6 L1091.8,803.7 L1097.3,815.6 L1101.9,825.8 L1103.9,830.1 L1104.7,832.0 M1058.7,779.5 L1059.2,781.5 L1061.2,790.8 L1063.7,802.0 L1066.5,814.8 L1069.3,827.5 L1071.7,838.3 L1072.7,842.9 L1073.1,844.9 M1040.0,787.0 L1040.0,789.0 L1040.0,798.4 L1040.0,809.7 L1040.0,822.6 L1040.0,835.4 L1040.0,846.4 L1040.0,851.0 L1040.0,853.0 M1109.0,290.0 L1110.1,314.1 L1112.4,338.2 L1114.8,362.2 L1117.1,386.2 L1119.5,410.3 L1121.8,434.3 L1124.1,458.4 L1126.5,482.4 L1128.8,506.5 L1131.1,530.5 L1133.5,554.5 L1135.3,578.6 L1137.0,602.7 L1138.6,626.8 L1140.3,650.9 L1142.0,675.0 L1139.9,695.0 L1132.6,713.8 L1121.8,730.8 L1108.6,746.0 L1093.5,759.4 L1076.7,770.5 L1058.7,779.5 L1040.0,787.0 M1114.3,290.0 L1115.3,314.1 L1117.4,338.1 L1119.6,362.2 L1121.7,386.2 L1123.8,410.2 L1125.9,434.3 L1128.0,458.3 L1130.2,482.3 L1132.3,506.3 L1134.4,530.4 L1136.5,554.4 L1138.2,578.5 L1139.7,602.5 L1141.2,626.6 L1142.7,650.7 L1144.2,674.8 L1141.9,695.2 L1134.5,714.4 L1123.5,731.7 L1110.1,747.3 L1094.8,761.0 L1077.6,772.3 L1059.2,781.5 L1040.0,789.0 M1139.8,290.0 L1140.2,314.1 L1141.2,338.0 L1142.3,362.0 L1143.4,386.0 L1144.5,409.9 L1145.6,433.9 L1146.7,457.8 L1147.8,481.8 L1148.9,505.7 L1150.0,529.7 L1151.1,553.7 L1151.9,577.7 L1152.5,601.7 L1153.2,625.7 L1153.8,649.8 L1154.5,673.8 L1151.4,696.1 L1143.4,717.2 L1131.7,736.5 L1117.3,753.8 L1100.5,768.8 L1081.6,781.1 L1061.2,790.8 L1040.0,798.4 M1170.2,290.0 L1169.9,314.0 L1169.7,337.9 L1169.6,361.8 L1169.4,385.7 L1169.3,409.5 L1169.1,433.4 L1169.0,457.3 L1168.8,481.2 L1168.7,505.1 L1168.6,528.9 L1168.5,552.8 L1168.2,576.8 L1167.9,600.7 L1167.5,624.7 L1167.1,648.6 L1166.8,672.6 L1162.7,697.1 L1154.1,720.6 L1141.6,742.1 L1125.9,761.5 L1107.4,778.2 L1086.4,791.6 L1063.7,802.0 L1040.0,809.7 M1205.1,290.0 L1203.9,314.0 L1202.4,337.8 L1200.8,361.5 L1199.2,385.3 L1197.7,409.1 L1196.1,432.9 L1194.6,456.7 L1193.0,480.5 L1191.4,504.3 L1189.9,528.0 L1188.4,551.9 L1187.0,575.7 L1185.5,599.6 L1183.9,623.5 L1182.4,647.3 L1180.9,671.2 L1175.7,698.4 L1166.4,724.4 L1152.8,748.6 L1135.7,770.3 L1115.3,788.9 L1091.8,803.7 L1066.5,814.8 L1040.0,822.6 M1239.7,290.0 L1237.6,313.9 L1234.7,337.6 L1231.7,361.3 L1228.7,385.0 L1225.8,408.7 L1222.8,432.4 L1219.9,456.1 L1216.9,479.8 L1213.9,503.5 L1211.0,527.2 L1208.2,550.9 L1205.6,574.7 L1202.9,598.5 L1200.2,622.3 L1197.5,646.1 L1194.8,669.9 L1188.6,699.6 L1178.5,728.3 L1164.0,755.0 L1145.5,779.0 L1123.1,799.6 L1097.3,815.6 L1069.3,827.5 L1040.0,835.4 M1269.2,290.0 L1266.5,313.9 L1262.3,337.5 L1258.1,361.1 L1254.0,384.7 L1249.8,408.3 L1245.7,431.9 L1241.5,455.6 L1237.3,479.2 L1233.2,502.8 L1229.0,526.4 L1225.1,550.1 L1221.5,573.8 L1217.8,597.5 L1214.1,621.2 L1210.5,645.0 L1206.8,668.7 L1199.6,700.6 L1188.9,731.5 L1173.5,760.5 L1153.8,786.5 L1129.8,808.7 L1101.9,825.8 L1071.7,838.3 L1040.0,846.4 M1281.7,290.0 L1278.6,313.9 L1273.9,337.4 L1269.3,361.0 L1264.6,384.6 L1260.0,408.2 L1255.3,431.8 L1250.6,455.3 L1246.0,478.9 L1241.3,502.5 L1236.6,526.1 L1232.2,549.7 L1228.2,573.4 L1224.1,597.1 L1220.0,620.8 L1215.9,644.5 L1211.8,668.2 L1204.2,701.0 L1193.2,732.9 L1177.6,762.8 L1157.3,789.7 L1132.6,812.5 L1103.9,830.1 L1072.7,842.9 L1040.0,851.0 M1287.0,290.0 L1283.8,313.9 L1278.9,337.4 L1274.1,361.0 L1269.2,384.6 L1264.3,408.1 L1259.4,431.7 L1254.5,455.3 L1249.7,478.8 L1244.8,502.4 L1239.9,526.0 L1235.3,549.6 L1231.0,573.3 L1226.8,596.9 L1222.5,620.6 L1218.3,644.3 L1214.0,668.0 L1206.2,701.2 L1195.1,733.5 L1179.3,763.8 L1158.8,791.0 L1133.8,814.1 L1104.7,832.0 L1073.1,844.9 L1040.0,853.0" fill="none" stroke="#b8a4b8" stroke-width="0.8" opacity="0.55"/><path d="M1109.0,290.0 L1115.3,314.1 M1114.3,290.0 L1140.2,314.1 M1139.8,290.0 L1169.9,314.0 M1170.2,290.0 L1203.9,314.0 M1205.1,290.0 L1237.6,313.9 M1239.7,290.0 L1266.5,313.9 M1269.2,290.0 L1278.6,313.9 M1281.7,290.0 L1283.8,313.9 M1110.1,314.1 L1117.4,338.1 M1115.3,314.1 L1141.2,338.0 M1140.2,314.1 L1169.7,337.9 M1169.9,314.0 L1202.4,337.8 M1203.9,314.0 L1234.7,337.6 M1237.6,313.9 L1262.3,337.5 M1266.5,313.9 L1273.9,337.4 M1278.6,313.9 L1278.9,337.4 M1112.4,338.2 L1119.6,362.2 M1117.4,338.1 L1142.3,362.0 M1141.2,338.0 L1169.6,361.8 M1169.7,337.9 L1200.8,361.5 M1202.4,337.8 L1231.7,361.3 M1234.7,337.6 L1258.1,361.1 M1262.3,337.5 L1269.3,361.0 M1273.9,337.4 L1274.1,361.0 M1114.8,362.2 L1121.7,386.2 M1119.6,362.2 L1143.4,386.0 M1142.3,362.0 L1169.4,385.7 M1169.6,361.8 L1199.2,385.3 M1200.8,361.5 L1228.7,385.0 M1231.7,361.3 L1254.0,384.7 M1258.1,361.1 L1264.6,384.6 M1269.3,361.0 L1269.2,384.6 M1117.1,386.2 L1123.8,410.2 M1121.7,386.2 L1144.5,409.9 M1143.4,386.0 L1169.3,409.5 M1169.4,385.7 L1197.7,409.1 M1199.2,385.3 L1225.8,408.7 M1228.7,385.0 L1249.8,408.3 M1254.0,384.7 L1260.0,408.2 M1264.6,384.6 L1264.3,408.1 M1119.5,410.3 L1125.9,434.3 M1123.8,410.2 L1145.6,433.9 M1144.5,409.9 L1169.1,433.4 M1169.3,409.5 L1196.1,432.9 M1197.7,409.1 L1222.8,432.4 M1225.8,408.7 L1245.7,431.9 M1249.8,408.3 L1255.3,431.8 M1260.0,408.2 L1259.4,431.7 M1121.8,434.3 L1128.0,458.3 M1125.9,434.3 L1146.7,457.8 M1145.6,433.9 L1169.0,457.3 M1169.1,433.4 L1194.6,456.7 M1196.1,432.9 L1219.9,456.1 M1222.8,432.4 L1241.5,455.6 M1245.7,431.9 L1250.6,455.3 M1255.3,431.8 L1254.5,455.3 M1124.1,458.4 L1130.2,482.3 M1128.0,458.3 L1147.8,481.8 M1146.7,457.8 L1168.8,481.2 M1169.0,457.3 L1193.0,480.5 M1194.6,456.7 L1216.9,479.8 M1219.9,456.1 L1237.3,479.2 M1241.5,455.6 L1246.0,478.9 M1250.6,455.3 L1249.7,478.8 M1126.5,482.4 L1132.3,506.3 M1130.2,482.3 L1148.9,505.7 M1147.8,481.8 L1168.7,505.1 M1168.8,481.2 L1191.4,504.3 M1193.0,480.5 L1213.9,503.5 M1216.9,479.8 L1233.2,502.8 M1237.3,479.2 L1241.3,502.5 M1246.0,478.9 L1244.8,502.4 M1128.8,506.5 L1134.4,530.4 M1132.3,506.3 L1150.0,529.7 M1148.9,505.7 L1168.6,528.9 M1168.7,505.1 L1189.9,528.0 M1191.4,504.3 L1211.0,527.2 M1213.9,503.5 L1229.0,526.4 M1233.2,502.8 L1236.6,526.1 M1241.3,502.5 L1239.9,526.0 M1131.1,530.5 L1136.5,554.4 M1134.4,530.4 L1151.1,553.7 M1150.0,529.7 L1168.5,552.8 M1168.6,528.9 L1188.4,551.9 M1189.9,528.0 L1208.2,550.9 M1211.0,527.2 L1225.1,550.1 M1229.0,526.4 L1232.2,549.7 M1236.6,526.1 L1235.3,549.6 M1133.5,554.5 L1138.2,578.5 M1136.5,554.4 L1151.9,577.7 M1151.1,553.7 L1168.2,576.8 M1168.5,552.8 L1187.0,575.7 M1188.4,551.9 L1205.6,574.7 M1208.2,550.9 L1221.5,573.8 M1225.1,550.1 L1228.2,573.4 M1232.2,549.7 L1231.0,573.3 M1135.3,578.6 L1139.7,602.5 M1138.2,578.5 L1152.5,601.7 M1151.9,577.7 L1167.9,600.7 M1168.2,576.8 L1185.5,599.6 M1187.0,575.7 L1202.9,598.5 M1205.6,574.7 L1217.8,597.5 M1221.5,573.8 L1224.1,597.1 M1228.2,573.4 L1226.8,596.9 M1137.0,602.7 L1141.2,626.6 M1139.7,602.5 L1153.2,625.7 M1152.5,601.7 L1167.5,624.7 M1167.9,600.7 L1183.9,623.5 M1185.5,599.6 L1200.2,622.3 M1202.9,598.5 L1214.1,621.2 M1217.8,597.5 L1220.0,620.8 M1224.1,597.1 L1222.5,620.6 M1138.6,626.8 L1142.7,650.7 M1141.2,626.6 L1153.8,649.8 M1153.2,625.7 L1167.1,648.6 M1167.5,624.7 L1182.4,647.3 M1183.9,623.5 L1197.5,646.1 M1200.2,622.3 L1210.5,645.0 M1214.1,621.2 L1215.9,644.5 M1220.0,620.8 L1218.3,644.3 M1140.3,650.9 L1144.2,674.8 M1142.7,650.7 L1154.5,673.8 M1153.8,649.8 L1166.8,672.6 M1167.1,648.6 L1180.9,671.2 M1182.4,647.3 L1194.8,669.9 M1197.5,646.1 L1206.8,668.7 M1210.5,645.0 L1211.8,668.2 M1215.9,644.5 L1214.0,668.0 M1142.0,675.0 L1141.9,695.2 M1144.2,674.8 L1151.4,696.1 M1154.5,673.8 L1162.7,697.1 M1166.8,672.6 L1175.7,698.4 M1180.9,671.2 L1188.6,699.6 M1194.8,669.9 L1199.6,700.6 M1206.8,668.7 L1204.2,701.0 M1211.8,668.2 L1206.2,701.2 M1139.9,695.0 L1134.5,714.4 M1141.9,695.2 L1143.4,717.2 M1151.4,696.1 L1154.1,720.6 M1162.7,697.1 L1166.4,724.4 M1175.7,698.4 L1178.5,728.3 M1188.6,699.6 L1188.9,731.5 M1199.6,700.6 L1193.2,732.9 M1204.2,701.0 L1195.1,733.5 M1132.6,713.8 L1123.5,731.7 M1134.5,714.4 L1131.7,736.5 M1143.4,717.2 L1141.6,742.1 M1154.1,720.6 L1152.8,748.6 M1166.4,724.4 L1164.0,755.0 M1178.5,728.3 L1173.5,760.5 M1188.9,731.5 L1177.6,762.8 M1193.2,732.9 L1179.3,763.8 M1121.8,730.8 L1110.1,747.3 M1123.5,731.7 L1117.3,753.8 M1131.7,736.5 L1125.9,761.5 M1141.6,742.1 L1135.7,770.3 M1152.8,748.6 L1145.5,779.0 M1164.0,755.0 L1153.8,786.5 M1173.5,760.5 L1157.3,789.7 M1177.6,762.8 L1158.8,791.0 M1108.6,746.0 L1094.8,761.0 M1110.1,747.3 L1100.5,768.8 M1117.3,753.8 L1107.4,778.2 M1125.9,761.5 L1115.3,788.9 M1135.7,770.3 L1123.1,799.6 M1145.5,779.0 L1129.8,808.7 M1153.8,786.5 L1132.6,812.5 M1157.3,789.7 L1133.8,814.1 M1093.5,759.4 L1077.6,772.3 M1094.8,761.0 L1081.6,781.1 M1100.5,768.8 L1086.4,791.6 M1107.4,778.2 L1091.8,803.7 M1115.3,788.9 L1097.3,815.6 M1123.1,799.6 L1101.9,825.8 M1129.8,808.7 L1103.9,830.1 M1132.6,812.5 L1104.7,832.0 M1076.7,770.5 L1059.2,781.5 M1077.6,772.3 L1061.2,790.8 M1081.6,781.1 L1063.7,802.0 M1086.4,791.6 L1066.5,814.8 M1091.8,803.7 L1069.3,827.5 M1097.3,815.6 L1071.7,838.3 M1101.9,825.8 L1072.7,842.9 M1103.9,830.1 L1073.1,844.9 M1058.7,779.5 L1040.0,789.0 M1059.2,781.5 L1040.0,798.4 M1061.2,790.8 L1040.0,809.7 M1063.7,802.0 L1040.0,822.6 M1066.5,814.8 L1040.0,835.4 M1069.3,827.5 L1040.0,846.4 M1071.7,838.3 L1040.0,851.0 M1072.7,842.9 L1040.0,853.0" fill="none" stroke="#5e9a4c" stroke-width="0.8" opacity="0.55"/></g>
<g clip-path="url(#cOut)"><polygon points="1109.0,290.0 1109.2,294.8 1109.4,299.7 1109.6,304.5 1109.8,309.3 1110.1,314.1 1110.6,318.9 1111.0,323.7 1111.5,328.6 1112.0,333.4 1112.4,338.2 1112.9,343.0 1113.4,347.8 1113.8,352.6 1114.3,357.4 1114.8,362.2 1115.2,367.0 1115.7,371.8 1116.2,376.6 1116.7,381.4 1117.1,386.2 1117.6,391.1 1118.1,395.9 1118.5,400.7 1119.0,405.5 1119.5,410.3 1119.9,415.1 1120.4,419.9 1120.9,424.7 1121.3,429.5 1121.8,434.3 1122.3,439.1 1122.7,443.9 1123.2,448.8 1123.7,453.6 1124.1,458.4 1124.6,463.2 1125.1,468.0 1125.5,472.8 1126.0,477.6 1126.5,482.4 1126.9,487.2 1127.4,492.0 1127.9,496.8 1128.3,501.6 1128.8,506.5 1129.3,511.3 1129.7,516.1 1130.2,520.9 1130.7,525.7 1131.1,530.5 1131.6,535.3 1132.1,540.1 1132.5,544.9 1133.0,549.7 1133.5,554.5 1133.9,559.3 1134.3,564.2 1134.6,569.0 1135.0,573.8 1135.3,578.6 1135.6,583.4 1136.0,588.3 1136.3,593.1 1136.6,597.9 1137.0,602.7 1137.3,607.5 1137.6,612.4 1138.0,617.2 1138.3,622.0 1138.6,626.8 1139.0,631.6 1139.3,636.4 1139.7,641.3 1140.0,646.1 1140.3,650.9 1140.7,655.7 1141.0,660.5 1141.3,665.4 1141.7,670.2 1142.0,675.0 1141.9,679.0 1141.9,683.1 1141.4,687.1 1140.7,691.0 1139.9,695.0 1138.7,698.8 1137.5,702.7 1135.9,706.4 1134.3,710.1 1132.6,713.8 1130.6,717.3 1128.6,720.7 1126.5,724.2 1124.1,727.5 1121.8,730.8 1119.4,734.0 1116.8,737.0 1114.1,740.1 1111.5,743.1 1108.6,746.0 1105.7,748.8 1102.8,751.6 1099.7,754.2 1096.6,756.8 1093.5,759.4 1090.3,761.7 1087.0,764.0 1083.7,766.4 1080.2,768.5 1076.7,770.5 1073.3,772.5 1069.7,774.4 1066.1,776.1 1062.4,777.9 1058.7,779.5 1055.0,781.0 1051.2,782.5 1047.5,784.0 1043.7,785.5 1040.0,787.0 1040.0,789.0 1043.8,787.5 1047.7,786.0 1051.5,784.5 1055.3,783.0 1059.2,781.5 1062.9,779.8 1066.7,778.1 1070.4,776.3 1074.0,774.4 1077.6,772.3 1081.1,770.3 1084.7,768.1 1088.0,765.8 1091.4,763.4 1094.8,761.0 1097.9,758.4 1101.1,755.7 1104.2,753.1 1107.2,750.2 1110.1,747.3 1113.0,744.4 1115.7,741.3 1118.4,738.2 1121.1,735.1 1123.5,731.7 1125.9,728.4 1128.3,725.0 1130.4,721.5 1132.5,717.9 1134.5,714.4 1136.2,710.6 1137.9,706.8 1139.4,703.0 1140.6,699.1 1141.9,695.2 1142.7,691.1 1143.4,687.1 1143.9,683.0 1144.1,678.9 1144.2,674.8 1143.9,670.0 1143.6,665.2 1143.3,660.3 1143.0,655.5 1142.7,650.7 1142.4,645.9 1142.1,641.1 1141.8,636.3 1141.5,631.4 1141.2,626.6 1140.9,621.8 1140.6,617.0 1140.3,612.2 1140.0,607.4 1139.7,602.5 1139.4,597.7 1139.1,592.9 1138.8,588.1 1138.5,583.3 1138.2,578.5 1137.9,573.6 1137.6,568.8 1137.3,564.0 1137.0,559.2 1136.5,554.4 1136.1,549.6 1135.7,544.8 1135.2,540.0 1134.8,535.2 1134.4,530.4 1134.0,525.6 1133.5,520.7 1133.1,515.9 1132.7,511.1 1132.3,506.3 1131.9,501.5 1131.4,496.7 1131.0,491.9 1130.6,487.1 1130.2,482.3 1129.7,477.5 1129.3,472.7 1128.9,467.9 1128.5,463.1 1128.0,458.3 1127.6,453.5 1127.2,448.7 1126.8,443.9 1126.3,439.1 1125.9,434.3 1125.5,429.4 1125.1,424.6 1124.6,419.8 1124.2,415.0 1123.8,410.2 1123.4,405.4 1123.0,400.6 1122.5,395.8 1122.1,391.0 1121.7,386.2 1121.3,381.4 1120.8,376.6 1120.4,371.8 1120.0,367.0 1119.6,362.2 1119.1,357.4 1118.7,352.6 1118.3,347.8 1117.9,343.0 1117.4,338.1 1117.0,333.3 1116.6,328.5 1116.2,323.7 1115.7,318.9 1115.3,314.1 1115.1,309.3 1114.9,304.5 1114.7,299.6 1114.5,294.8 1114.3,290.0" fill="#2a4a22" stroke="#2a4a22" stroke-width="0.6"/>
<polygon points="1114.3,290.0 1114.5,294.8 1114.7,299.6 1114.9,304.5 1115.1,309.3 1115.3,314.1 1115.7,318.9 1116.2,323.7 1116.6,328.5 1117.0,333.3 1117.4,338.1 1117.9,343.0 1118.3,347.8 1118.7,352.6 1119.1,357.4 1119.6,362.2 1120.0,367.0 1120.4,371.8 1120.8,376.6 1121.3,381.4 1121.7,386.2 1122.1,391.0 1122.5,395.8 1123.0,400.6 1123.4,405.4 1123.8,410.2 1124.2,415.0 1124.6,419.8 1125.1,424.6 1125.5,429.4 1125.9,434.3 1126.3,439.1 1126.8,443.9 1127.2,448.7 1127.6,453.5 1128.0,458.3 1128.5,463.1 1128.9,467.9 1129.3,472.7 1129.7,477.5 1130.2,482.3 1130.6,487.1 1131.0,491.9 1131.4,496.7 1131.9,501.5 1132.3,506.3 1132.7,511.1 1133.1,515.9 1133.5,520.7 1134.0,525.6 1134.4,530.4 1134.8,535.2 1135.2,540.0 1135.7,544.8 1136.1,549.6 1136.5,554.4 1137.0,559.2 1137.3,564.0 1137.6,568.8 1137.9,573.6 1138.2,578.5 1138.5,583.3 1138.8,588.1 1139.1,592.9 1139.4,597.7 1139.7,602.5 1140.0,607.4 1140.3,612.2 1140.6,617.0 1140.9,621.8 1141.2,626.6 1141.5,631.4 1141.8,636.3 1142.1,641.1 1142.4,645.9 1142.7,650.7 1143.0,655.5 1143.3,660.3 1143.6,665.2 1143.9,670.0 1144.2,674.8 1144.1,678.9 1143.9,683.0 1143.4,687.1 1142.7,691.1 1141.9,695.2 1140.6,699.1 1139.4,703.0 1137.9,706.8 1136.2,710.6 1134.5,714.4 1132.5,717.9 1130.4,721.5 1128.3,725.0 1125.9,728.4 1123.5,731.7 1121.1,735.1 1118.4,738.2 1115.7,741.3 1113.0,744.4 1110.1,747.3 1107.2,750.2 1104.2,753.1 1101.1,755.7 1097.9,758.4 1094.8,761.0 1091.4,763.4 1088.0,765.8 1084.7,768.1 1081.1,770.3 1077.6,772.3 1074.0,774.4 1070.4,776.3 1066.7,778.1 1062.9,779.8 1059.2,781.5 1055.3,783.0 1051.5,784.5 1047.7,786.0 1043.8,787.5 1040.0,789.0 1040.0,798.4 1044.3,796.9 1048.5,795.5 1052.8,794.0 1057.0,792.4 1061.2,790.8 1065.4,789.1 1069.5,787.2 1073.6,785.4 1077.7,783.4 1081.6,781.1 1085.5,778.9 1089.4,776.6 1093.1,774.0 1096.8,771.4 1100.5,768.8 1104.0,765.9 1107.4,763.0 1110.9,760.1 1114.1,757.0 1117.3,753.8 1120.5,750.5 1123.4,747.1 1126.3,743.6 1129.1,740.1 1131.7,736.5 1134.3,732.7 1136.8,729.0 1139.1,725.1 1141.3,721.1 1143.4,717.2 1145.2,713.0 1147.0,708.9 1148.7,704.7 1150.0,700.4 1151.4,696.1 1152.4,691.7 1153.2,687.2 1153.9,682.8 1154.2,678.3 1154.5,673.8 1154.3,669.0 1154.2,664.2 1154.1,659.4 1153.9,654.6 1153.8,649.8 1153.7,645.0 1153.5,640.2 1153.4,635.3 1153.3,630.5 1153.2,625.7 1153.0,620.9 1152.9,616.1 1152.8,611.3 1152.6,606.5 1152.5,601.7 1152.4,596.9 1152.2,592.1 1152.1,587.3 1152.0,582.5 1151.9,577.7 1151.7,572.9 1151.6,568.1 1151.5,563.3 1151.3,558.5 1151.1,553.7 1150.8,548.9 1150.6,544.1 1150.4,539.3 1150.2,534.5 1150.0,529.7 1149.7,524.9 1149.5,520.1 1149.3,515.3 1149.1,510.5 1148.9,505.7 1148.6,501.0 1148.4,496.2 1148.2,491.4 1148.0,486.6 1147.8,481.8 1147.6,477.0 1147.3,472.2 1147.1,467.4 1146.9,462.6 1146.7,457.8 1146.5,453.0 1146.3,448.2 1146.0,443.5 1145.8,438.7 1145.6,433.9 1145.4,429.1 1145.2,424.3 1144.9,419.5 1144.7,414.7 1144.5,409.9 1144.3,405.1 1144.1,400.3 1143.9,395.5 1143.6,390.7 1143.4,386.0 1143.2,381.2 1143.0,376.4 1142.8,371.6 1142.6,366.8 1142.3,362.0 1142.1,357.2 1141.9,352.4 1141.7,347.6 1141.5,342.8 1141.2,338.0 1141.0,333.2 1140.8,328.5 1140.6,323.7 1140.4,318.9 1140.2,314.1 1140.1,309.3 1140.0,304.5 1139.9,299.6 1139.9,294.8 1139.8,290.0" fill="#4f8a3c" stroke="#4f8a3c" stroke-width="0.6"/>
<polygon points="1139.8,290.0 1139.9,294.8 1139.9,299.6 1140.0,304.5 1140.1,309.3 1140.2,314.1 1140.4,318.9 1140.6,323.7 1140.8,328.5 1141.0,333.2 1141.2,338.0 1141.5,342.8 1141.7,347.6 1141.9,352.4 1142.1,357.2 1142.3,362.0 1142.6,366.8 1142.8,371.6 1143.0,376.4 1143.2,381.2 1143.4,386.0 1143.6,390.7 1143.9,395.5 1144.1,400.3 1144.3,405.1 1144.5,409.9 1144.7,414.7 1144.9,419.5 1145.2,424.3 1145.4,429.1 1145.6,433.9 1145.8,438.7 1146.0,443.5 1146.3,448.2 1146.5,453.0 1146.7,457.8 1146.9,462.6 1147.1,467.4 1147.3,472.2 1147.6,477.0 1147.8,481.8 1148.0,486.6 1148.2,491.4 1148.4,496.2 1148.6,501.0 1148.9,505.7 1149.1,510.5 1149.3,515.3 1149.5,520.1 1149.7,524.9 1150.0,529.7 1150.2,534.5 1150.4,539.3 1150.6,544.1 1150.8,548.9 1151.1,553.7 1151.3,558.5 1151.5,563.3 1151.6,568.1 1151.7,572.9 1151.9,577.7 1152.0,582.5 1152.1,587.3 1152.2,592.1 1152.4,596.9 1152.5,601.7 1152.6,606.5 1152.8,611.3 1152.9,616.1 1153.0,620.9 1153.2,625.7 1153.3,630.5 1153.4,635.3 1153.5,640.2 1153.7,645.0 1153.8,649.8 1153.9,654.6 1154.1,659.4 1154.2,664.2 1154.3,669.0 1154.5,673.8 1154.2,678.3 1153.9,682.8 1153.2,687.2 1152.4,691.7 1151.4,696.1 1150.0,700.4 1148.7,704.7 1147.0,708.9 1145.2,713.0 1143.4,717.2 1141.3,721.1 1139.1,725.1 1136.8,729.0 1134.3,732.7 1131.7,736.5 1129.1,740.1 1126.3,743.6 1123.4,747.1 1120.5,750.5 1117.3,753.8 1114.1,757.0 1110.9,760.1 1107.4,763.0 1104.0,765.9 1100.5,768.8 1096.8,771.4 1093.1,774.0 1089.4,776.6 1085.5,778.9 1081.6,781.1 1077.7,783.4 1073.6,785.4 1069.5,787.2 1065.4,789.1 1061.2,790.8 1057.0,792.4 1052.8,794.0 1048.5,795.5 1044.3,796.9 1040.0,798.4 1040.0,809.7 1044.8,808.3 1049.5,806.8 1054.3,805.4 1059.0,803.7 1063.7,802.0 1068.3,800.2 1072.9,798.2 1077.5,796.2 1082.0,794.0 1086.4,791.6 1090.7,789.2 1095.0,786.7 1099.2,783.9 1103.3,781.1 1107.4,778.2 1111.2,775.0 1115.0,771.8 1118.9,768.6 1122.4,765.0 1125.9,761.5 1129.4,757.9 1132.5,754.0 1135.7,750.1 1138.8,746.2 1141.6,742.1 1144.3,737.9 1147.1,733.8 1149.4,729.4 1151.8,725.0 1154.1,720.6 1156.0,715.9 1158.0,711.3 1159.8,706.7 1161.2,701.9 1162.7,697.1 1163.9,692.3 1164.9,687.4 1165.7,682.5 1166.2,677.5 1166.8,672.6 1166.8,667.8 1166.9,663.0 1167.0,658.2 1167.1,653.4 1167.1,648.6 1167.2,643.8 1167.3,639.1 1167.4,634.3 1167.4,629.5 1167.5,624.7 1167.6,619.9 1167.6,615.1 1167.7,610.3 1167.8,605.5 1167.9,600.7 1167.9,595.9 1168.0,591.1 1168.1,586.4 1168.2,581.6 1168.2,576.8 1168.3,572.0 1168.4,567.2 1168.4,562.4 1168.5,557.6 1168.5,552.8 1168.5,548.0 1168.5,543.3 1168.5,538.5 1168.5,533.7 1168.6,528.9 1168.6,524.2 1168.6,519.4 1168.6,514.6 1168.7,509.8 1168.7,505.1 1168.7,500.3 1168.8,495.5 1168.8,490.7 1168.8,486.0 1168.8,481.2 1168.9,476.4 1168.9,471.6 1168.9,466.8 1169.0,462.1 1169.0,457.3 1169.0,452.5 1169.0,447.7 1169.1,443.0 1169.1,438.2 1169.1,433.4 1169.2,428.6 1169.2,423.9 1169.2,419.1 1169.3,414.3 1169.3,409.5 1169.3,404.8 1169.3,400.0 1169.4,395.2 1169.4,390.4 1169.4,385.7 1169.5,380.9 1169.5,376.1 1169.5,371.3 1169.5,366.6 1169.6,361.8 1169.6,357.0 1169.6,352.2 1169.7,347.5 1169.7,342.7 1169.7,337.9 1169.8,333.1 1169.8,328.4 1169.8,323.6 1169.8,318.8 1169.9,314.0 1169.9,309.2 1170.0,304.4 1170.1,299.6 1170.2,294.8 1170.2,290.0" fill="#6cc050" stroke="#6cc050" stroke-width="0.6"/>
<polygon points="1170.2,290.0 1170.2,294.8 1170.1,299.6 1170.0,304.4 1169.9,309.2 1169.9,314.0 1169.8,318.8 1169.8,323.6 1169.8,328.4 1169.8,333.1 1169.7,337.9 1169.7,342.7 1169.7,347.5 1169.6,352.2 1169.6,357.0 1169.6,361.8 1169.5,366.6 1169.5,371.3 1169.5,376.1 1169.5,380.9 1169.4,385.7 1169.4,390.4 1169.4,395.2 1169.3,400.0 1169.3,404.8 1169.3,409.5 1169.3,414.3 1169.2,419.1 1169.2,423.9 1169.2,428.6 1169.1,433.4 1169.1,438.2 1169.1,443.0 1169.0,447.7 1169.0,452.5 1169.0,457.3 1169.0,462.1 1168.9,466.8 1168.9,471.6 1168.9,476.4 1168.8,481.2 1168.8,486.0 1168.8,490.7 1168.8,495.5 1168.7,500.3 1168.7,505.1 1168.7,509.8 1168.6,514.6 1168.6,519.4 1168.6,524.2 1168.6,528.9 1168.5,533.7 1168.5,538.5 1168.5,543.3 1168.5,548.0 1168.5,552.8 1168.5,557.6 1168.4,562.4 1168.4,567.2 1168.3,572.0 1168.2,576.8 1168.2,581.6 1168.1,586.4 1168.0,591.1 1167.9,595.9 1167.9,600.7 1167.8,605.5 1167.7,610.3 1167.6,615.1 1167.6,619.9 1167.5,624.7 1167.4,629.5 1167.4,634.3 1167.3,639.1 1167.2,643.8 1167.1,648.6 1167.1,653.4 1167.0,658.2 1166.9,663.0 1166.8,667.8 1166.8,672.6 1166.2,677.5 1165.7,682.5 1164.9,687.4 1163.9,692.3 1162.7,697.1 1161.2,701.9 1159.8,706.7 1158.0,711.3 1156.0,715.9 1154.1,720.6 1151.8,725.0 1149.4,729.4 1147.1,733.8 1144.3,737.9 1141.6,742.1 1138.8,746.2 1135.7,750.1 1132.5,754.0 1129.4,757.9 1125.9,761.5 1122.4,765.0 1118.9,768.6 1115.0,771.8 1111.2,775.0 1107.4,778.2 1103.3,781.1 1099.2,783.9 1095.0,786.7 1090.7,789.2 1086.4,791.6 1082.0,794.0 1077.5,796.2 1072.9,798.2 1068.3,800.2 1063.7,802.0 1059.0,803.7 1054.3,805.4 1049.5,806.8 1044.8,808.3 1040.0,809.7 1040.0,835.4 1045.9,834.1 1051.8,832.7 1057.7,831.3 1063.5,829.4 1069.3,827.5 1075.1,825.5 1080.7,823.2 1086.3,820.8 1091.9,818.4 1097.3,815.6 1102.6,812.7 1107.9,809.8 1113.0,806.4 1118.1,803.0 1123.1,799.6 1127.8,795.7 1132.4,791.7 1137.0,787.8 1141.3,783.4 1145.5,779.0 1149.6,774.6 1153.4,769.8 1157.1,765.0 1160.8,760.1 1164.0,755.0 1167.2,749.8 1170.4,744.6 1173.1,739.2 1175.8,733.7 1178.5,728.3 1180.7,722.6 1182.9,716.9 1185.1,711.2 1186.8,705.4 1188.6,699.6 1190.2,693.7 1191.6,687.8 1192.7,681.8 1193.8,675.8 1194.8,669.9 1195.4,665.1 1195.9,660.3 1196.5,655.6 1197.0,650.8 1197.5,646.1 1198.1,641.3 1198.6,636.5 1199.1,631.8 1199.7,627.0 1200.2,622.3 1200.7,617.5 1201.3,612.8 1201.8,608.0 1202.3,603.2 1202.9,598.5 1203.4,593.7 1204.0,589.0 1204.5,584.2 1205.0,579.4 1205.6,574.7 1206.1,569.9 1206.6,565.2 1207.2,560.4 1207.7,555.6 1208.2,550.9 1208.7,546.1 1209.2,541.4 1209.8,536.6 1210.4,531.9 1211.0,527.2 1211.6,522.4 1212.2,517.7 1212.8,512.9 1213.3,508.2 1213.9,503.5 1214.5,498.7 1215.1,494.0 1215.7,489.3 1216.3,484.5 1216.9,479.8 1217.5,475.0 1218.1,470.3 1218.7,465.6 1219.3,460.8 1219.9,456.1 1220.4,451.3 1221.0,446.6 1221.6,441.9 1222.2,437.1 1222.8,432.4 1223.4,427.7 1224.0,422.9 1224.6,418.2 1225.2,413.4 1225.8,408.7 1226.4,404.0 1227.0,399.2 1227.6,394.5 1228.1,389.7 1228.7,385.0 1229.3,380.3 1229.9,375.5 1230.5,370.8 1231.1,366.0 1231.7,361.3 1232.3,356.6 1232.9,351.8 1233.5,347.1 1234.1,342.4 1234.7,337.6 1235.2,332.9 1235.8,328.1 1236.4,323.4 1237.0,318.7 1237.6,313.9 1238.0,309.1 1238.4,304.4 1238.8,299.6 1239.3,294.8 1239.7,290.0" fill="#7acc5a" stroke="#7acc5a" stroke-width="0.6"/>
<polygon points="1239.7,290.0 1239.3,294.8 1238.8,299.6 1238.4,304.4 1238.0,309.1 1237.6,313.9 1237.0,318.7 1236.4,323.4 1235.8,328.1 1235.2,332.9 1234.7,337.6 1234.1,342.4 1233.5,347.1 1232.9,351.8 1232.3,356.6 1231.7,361.3 1231.1,366.0 1230.5,370.8 1229.9,375.5 1229.3,380.3 1228.7,385.0 1228.1,389.7 1227.6,394.5 1227.0,399.2 1226.4,404.0 1225.8,408.7 1225.2,413.4 1224.6,418.2 1224.0,422.9 1223.4,427.7 1222.8,432.4 1222.2,437.1 1221.6,441.9 1221.0,446.6 1220.4,451.3 1219.9,456.1 1219.3,460.8 1218.7,465.6 1218.1,470.3 1217.5,475.0 1216.9,479.8 1216.3,484.5 1215.7,489.3 1215.1,494.0 1214.5,498.7 1213.9,503.5 1213.3,508.2 1212.8,512.9 1212.2,517.7 1211.6,522.4 1211.0,527.2 1210.4,531.9 1209.8,536.6 1209.2,541.4 1208.7,546.1 1208.2,550.9 1207.7,555.6 1207.2,560.4 1206.6,565.2 1206.1,569.9 1205.6,574.7 1205.0,579.4 1204.5,584.2 1204.0,589.0 1203.4,593.7 1202.9,598.5 1202.3,603.2 1201.8,608.0 1201.3,612.8 1200.7,617.5 1200.2,622.3 1199.7,627.0 1199.1,631.8 1198.6,636.5 1198.1,641.3 1197.5,646.1 1197.0,650.8 1196.5,655.6 1195.9,660.3 1195.4,665.1 1194.8,669.9 1193.8,675.8 1192.7,681.8 1191.6,687.8 1190.2,693.7 1188.6,699.6 1186.8,705.4 1185.1,711.2 1182.9,716.9 1180.7,722.6 1178.5,728.3 1175.8,733.7 1173.1,739.2 1170.4,744.6 1167.2,749.8 1164.0,755.0 1160.8,760.1 1157.1,765.0 1153.4,769.8 1149.6,774.6 1145.5,779.0 1141.3,783.4 1137.0,787.8 1132.4,791.7 1127.8,795.7 1123.1,799.6 1118.1,803.0 1113.0,806.4 1107.9,809.8 1102.6,812.7 1097.3,815.6 1091.9,818.4 1086.3,820.8 1080.7,823.2 1075.1,825.5 1069.3,827.5 1063.5,829.4 1057.7,831.3 1051.8,832.7 1045.9,834.1 1040.0,835.4 1040.0,846.4 1046.4,845.0 1052.8,843.7 1059.2,842.3 1065.4,840.3 1071.7,838.3 1077.9,836.3 1084.0,833.9 1090.0,831.3 1096.1,828.8 1101.9,825.8 1107.7,822.7 1113.4,819.6 1118.9,816.0 1124.3,812.3 1129.8,808.7 1134.8,804.5 1139.8,800.2 1144.8,796.0 1149.3,791.3 1153.8,786.5 1158.3,781.7 1162.3,776.5 1166.2,771.3 1170.1,766.0 1173.5,760.5 1177.0,754.9 1180.3,749.2 1183.2,743.3 1186.1,737.5 1188.9,731.5 1191.2,725.4 1193.5,719.3 1195.9,713.2 1197.7,706.9 1199.6,700.6 1201.4,694.3 1202.9,687.9 1204.2,681.5 1205.5,675.1 1206.8,668.7 1207.5,664.0 1208.3,659.2 1209.0,654.5 1209.7,649.7 1210.5,645.0 1211.2,640.2 1211.9,635.5 1212.7,630.7 1213.4,626.0 1214.1,621.2 1214.9,616.5 1215.6,611.8 1216.3,607.0 1217.1,602.3 1217.8,597.5 1218.5,592.8 1219.3,588.0 1220.0,583.3 1220.7,578.5 1221.5,573.8 1222.2,569.0 1222.9,564.3 1223.6,559.6 1224.4,554.8 1225.1,550.1 1225.8,545.3 1226.5,540.6 1227.4,535.9 1228.2,531.1 1229.0,526.4 1229.9,521.7 1230.7,517.0 1231.5,512.2 1232.4,507.5 1233.2,502.8 1234.0,498.1 1234.9,493.3 1235.7,488.6 1236.5,483.9 1237.3,479.2 1238.2,474.5 1239.0,469.7 1239.8,465.0 1240.7,460.3 1241.5,455.6 1242.3,450.8 1243.2,446.1 1244.0,441.4 1244.8,436.7 1245.7,431.9 1246.5,427.2 1247.3,422.5 1248.2,417.8 1249.0,413.1 1249.8,408.3 1250.7,403.6 1251.5,398.9 1252.3,394.2 1253.1,389.4 1254.0,384.7 1254.8,380.0 1255.6,375.3 1256.5,370.6 1257.3,365.8 1258.1,361.1 1259.0,356.4 1259.8,351.7 1260.6,346.9 1261.5,342.2 1262.3,337.5 1263.1,332.8 1264.0,328.0 1264.8,323.3 1265.6,318.6 1266.5,313.9 1267.0,309.1 1267.6,304.3 1268.1,299.6 1268.7,294.8 1269.2,290.0" fill="#5f9a48" stroke="#5f9a48" stroke-width="0.6"/>
<polygon points="1269.2,290.0 1268.7,294.8 1268.1,299.6 1267.6,304.3 1267.0,309.1 1266.5,313.9 1265.6,318.6 1264.8,323.3 1264.0,328.0 1263.1,332.8 1262.3,337.5 1261.5,342.2 1260.6,346.9 1259.8,351.7 1259.0,356.4 1258.1,361.1 1257.3,365.8 1256.5,370.6 1255.6,375.3 1254.8,380.0 1254.0,384.7 1253.1,389.4 1252.3,394.2 1251.5,398.9 1250.7,403.6 1249.8,408.3 1249.0,413.1 1248.2,417.8 1247.3,422.5 1246.5,427.2 1245.7,431.9 1244.8,436.7 1244.0,441.4 1243.2,446.1 1242.3,450.8 1241.5,455.6 1240.7,460.3 1239.8,465.0 1239.0,469.7 1238.2,474.5 1237.3,479.2 1236.5,483.9 1235.7,488.6 1234.9,493.3 1234.0,498.1 1233.2,502.8 1232.4,507.5 1231.5,512.2 1230.7,517.0 1229.9,521.7 1229.0,526.4 1228.2,531.1 1227.4,535.9 1226.5,540.6 1225.8,545.3 1225.1,550.1 1224.4,554.8 1223.6,559.6 1222.9,564.3 1222.2,569.0 1221.5,573.8 1220.7,578.5 1220.0,583.3 1219.3,588.0 1218.5,592.8 1217.8,597.5 1217.1,602.3 1216.3,607.0 1215.6,611.8 1214.9,616.5 1214.1,621.2 1213.4,626.0 1212.7,630.7 1211.9,635.5 1211.2,640.2 1210.5,645.0 1209.7,649.7 1209.0,654.5 1208.3,659.2 1207.5,664.0 1206.8,668.7 1205.5,675.1 1204.2,681.5 1202.9,687.9 1201.4,694.3 1199.6,700.6 1197.7,706.9 1195.9,713.2 1193.5,719.3 1191.2,725.4 1188.9,731.5 1186.1,737.5 1183.2,743.3 1180.3,749.2 1177.0,754.9 1173.5,760.5 1170.1,766.0 1166.2,771.3 1162.3,776.5 1158.3,781.7 1153.8,786.5 1149.3,791.3 1144.8,796.0 1139.8,800.2 1134.8,804.5 1129.8,808.7 1124.3,812.3 1118.9,816.0 1113.4,819.6 1107.7,822.7 1101.9,825.8 1096.1,828.8 1090.0,831.3 1084.0,833.9 1077.9,836.3 1071.7,838.3 1065.4,840.3 1059.2,842.3 1052.8,843.7 1046.4,845.0 1040.0,846.4 1040.0,851.0 1046.6,849.7 1053.2,848.3 1059.8,847.0 1066.3,844.9 1072.7,842.9 1079.1,840.9 1085.4,838.4 1091.6,835.8 1097.8,833.2 1103.9,830.1 1109.8,826.9 1115.7,823.7 1121.4,820.1 1127.0,816.3 1132.6,812.5 1137.8,808.2 1142.9,803.8 1148.1,799.5 1152.7,794.6 1157.3,789.7 1161.9,784.7 1166.0,779.3 1170.1,774.0 1174.1,768.5 1177.6,762.8 1181.1,757.0 1184.5,751.2 1187.4,745.1 1190.4,739.0 1193.2,732.9 1195.6,726.6 1198.0,720.3 1200.4,714.0 1202.3,707.5 1204.2,701.0 1206.1,694.6 1207.7,688.0 1209.1,681.4 1210.5,674.8 1211.8,668.2 1212.7,663.5 1213.5,658.7 1214.3,654.0 1215.1,649.3 1215.9,644.5 1216.7,639.8 1217.5,635.0 1218.4,630.3 1219.2,625.6 1220.0,620.8 1220.8,616.1 1221.6,611.3 1222.4,606.6 1223.3,601.9 1224.1,597.1 1224.9,592.4 1225.7,587.6 1226.5,582.9 1227.3,578.2 1228.2,573.4 1229.0,568.7 1229.8,563.9 1230.6,559.2 1231.4,554.5 1232.2,549.7 1233.0,545.0 1233.9,540.2 1234.8,535.5 1235.7,530.8 1236.6,526.1 1237.6,521.4 1238.5,516.7 1239.4,511.9 1240.4,507.2 1241.3,502.5 1242.2,497.8 1243.2,493.1 1244.1,488.4 1245.0,483.6 1246.0,478.9 1246.9,474.2 1247.8,469.5 1248.8,464.8 1249.7,460.1 1250.6,455.3 1251.6,450.6 1252.5,445.9 1253.4,441.2 1254.4,436.5 1255.3,431.8 1256.2,427.0 1257.2,422.3 1258.1,417.6 1259.0,412.9 1260.0,408.2 1260.9,403.5 1261.8,398.8 1262.8,394.0 1263.7,389.3 1264.6,384.6 1265.6,379.9 1266.5,375.2 1267.4,370.5 1268.4,365.7 1269.3,361.0 1270.2,356.3 1271.2,351.6 1272.1,346.9 1273.0,342.2 1273.9,337.4 1274.9,332.7 1275.8,328.0 1276.7,323.3 1277.7,318.6 1278.6,313.9 1279.3,309.1 1279.9,304.3 1280.5,299.5 1281.1,294.8 1281.7,290.0" fill="#4a7a38" stroke="#4a7a38" stroke-width="0.6"/>
<polygon points="1281.7,290.0 1281.1,294.8 1280.5,299.5 1279.9,304.3 1279.3,309.1 1278.6,313.9 1277.7,318.6 1276.7,323.3 1275.8,328.0 1274.9,332.7 1273.9,337.4 1273.0,342.2 1272.1,346.9 1271.2,351.6 1270.2,356.3 1269.3,361.0 1268.4,365.7 1267.4,370.5 1266.5,375.2 1265.6,379.9 1264.6,384.6 1263.7,389.3 1262.8,394.0 1261.8,398.8 1260.9,403.5 1260.0,408.2 1259.0,412.9 1258.1,417.6 1257.2,422.3 1256.2,427.0 1255.3,431.8 1254.4,436.5 1253.4,441.2 1252.5,445.9 1251.6,450.6 1250.6,455.3 1249.7,460.1 1248.8,464.8 1247.8,469.5 1246.9,474.2 1246.0,478.9 1245.0,483.6 1244.1,488.4 1243.2,493.1 1242.2,497.8 1241.3,502.5 1240.4,507.2 1239.4,511.9 1238.5,516.7 1237.6,521.4 1236.6,526.1 1235.7,530.8 1234.8,535.5 1233.9,540.2 1233.0,545.0 1232.2,549.7 1231.4,554.5 1230.6,559.2 1229.8,563.9 1229.0,568.7 1228.2,573.4 1227.3,578.2 1226.5,582.9 1225.7,587.6 1224.9,592.4 1224.1,597.1 1223.3,601.9 1222.4,606.6 1221.6,611.3 1220.8,616.1 1220.0,620.8 1219.2,625.6 1218.4,630.3 1217.5,635.0 1216.7,639.8 1215.9,644.5 1215.1,649.3 1214.3,654.0 1213.5,658.7 1212.7,663.5 1211.8,668.2 1210.5,674.8 1209.1,681.4 1207.7,688.0 1206.1,694.6 1204.2,701.0 1202.3,707.5 1200.4,714.0 1198.0,720.3 1195.6,726.6 1193.2,732.9 1190.4,739.0 1187.4,745.1 1184.5,751.2 1181.1,757.0 1177.6,762.8 1174.1,768.5 1170.1,774.0 1166.0,779.3 1161.9,784.7 1157.3,789.7 1152.7,794.6 1148.1,799.5 1142.9,803.8 1137.8,808.2 1132.6,812.5 1127.0,816.3 1121.4,820.1 1115.7,823.7 1109.8,826.9 1103.9,830.1 1097.8,833.2 1091.6,835.8 1085.4,838.4 1079.1,840.9 1072.7,842.9 1066.3,844.9 1059.8,847.0 1053.2,848.3 1046.6,849.7 1040.0,851.0 1040.0,853.0 1046.7,851.7 1053.4,850.3 1060.1,849.0 1066.6,846.9 1073.1,844.9 1079.6,842.8 1086.0,840.3 1092.3,837.7 1098.6,835.0 1104.7,832.0 1110.7,828.7 1116.7,825.5 1122.5,821.8 1128.1,818.0 1133.8,814.1 1139.0,809.8 1144.2,805.4 1149.5,800.9 1154.2,796.0 1158.8,791.0 1163.5,786.0 1167.6,780.6 1171.7,775.1 1175.7,769.6 1179.3,763.8 1182.9,757.9 1186.3,752.0 1189.2,745.9 1192.2,739.7 1195.1,733.5 1197.5,727.1 1199.9,720.7 1202.4,714.4 1204.3,707.8 1206.2,701.2 1208.1,694.7 1209.7,688.0 1211.2,681.4 1212.6,674.7 1214.0,668.0 1214.9,663.3 1215.7,658.5 1216.6,653.8 1217.4,649.1 1218.3,644.3 1219.1,639.6 1220.0,634.8 1220.8,630.1 1221.7,625.4 1222.5,620.6 1223.4,615.9 1224.2,611.2 1225.1,606.4 1225.9,601.7 1226.8,596.9 1227.6,592.2 1228.5,587.5 1229.3,582.7 1230.2,578.0 1231.0,573.3 1231.9,568.5 1232.7,563.8 1233.6,559.0 1234.4,554.3 1235.3,549.6 1236.1,544.8 1237.0,540.1 1238.0,535.4 1238.9,530.7 1239.9,526.0 1240.9,521.2 1241.9,516.5 1242.8,511.8 1243.8,507.1 1244.8,502.4 1245.8,497.7 1246.7,493.0 1247.7,488.2 1248.7,483.5 1249.7,478.8 1250.6,474.1 1251.6,469.4 1252.6,464.7 1253.6,460.0 1254.5,455.3 1255.5,450.5 1256.5,445.8 1257.5,441.1 1258.5,436.4 1259.4,431.7 1260.4,427.0 1261.4,422.3 1262.4,417.5 1263.3,412.8 1264.3,408.1 1265.3,403.4 1266.3,398.7 1267.2,394.0 1268.2,389.3 1269.2,384.6 1270.2,379.8 1271.1,375.1 1272.1,370.4 1273.1,365.7 1274.1,361.0 1275.0,356.3 1276.0,351.6 1277.0,346.8 1278.0,342.1 1278.9,337.4 1279.9,332.7 1280.9,328.0 1281.9,323.3 1282.8,318.6 1283.8,313.9 1284.5,309.1 1285.1,304.3 1285.8,299.5 1286.4,294.8 1287.0,290.0" fill="#3a6030" stroke="#3a6030" stroke-width="0.6"/><path d="M1109.0,290.0 L1114.3,290.0 L1139.8,290.0 L1170.2,290.0 L1205.1,290.0 L1239.7,290.0 L1269.2,290.0 L1281.7,290.0 L1287.0,290.0 M1110.1,314.1 L1115.3,314.1 L1140.2,314.1 L1169.9,314.0 L1203.9,314.0 L1237.6,313.9 L1266.5,313.9 L1278.6,313.9 L1283.8,313.9 M1112.4,338.2 L1117.4,338.1 L1141.2,338.0 L1169.7,337.9 L1202.4,337.8 L1234.7,337.6 L1262.3,337.5 L1273.9,337.4 L1278.9,337.4 M1114.8,362.2 L1119.6,362.2 L1142.3,362.0 L1169.6,361.8 L1200.8,361.5 L1231.7,361.3 L1258.1,361.1 L1269.3,361.0 L1274.1,361.0 M1117.1,386.2 L1121.7,386.2 L1143.4,386.0 L1169.4,385.7 L1199.2,385.3 L1228.7,385.0 L1254.0,384.7 L1264.6,384.6 L1269.2,384.6 M1119.5,410.3 L1123.8,410.2 L1144.5,409.9 L1169.3,409.5 L1197.7,409.1 L1225.8,408.7 L1249.8,408.3 L1260.0,408.2 L1264.3,408.1 M1121.8,434.3 L1125.9,434.3 L1145.6,433.9 L1169.1,433.4 L1196.1,432.9 L1222.8,432.4 L1245.7,431.9 L1255.3,431.8 L1259.4,431.7 M1124.1,458.4 L1128.0,458.3 L1146.7,457.8 L1169.0,457.3 L1194.6,456.7 L1219.9,456.1 L1241.5,455.6 L1250.6,455.3 L1254.5,455.3 M1126.5,482.4 L1130.2,482.3 L1147.8,481.8 L1168.8,481.2 L1193.0,480.5 L1216.9,479.8 L1237.3,479.2 L1246.0,478.9 L1249.7,478.8 M1128.8,506.5 L1132.3,506.3 L1148.9,505.7 L1168.7,505.1 L1191.4,504.3 L1213.9,503.5 L1233.2,502.8 L1241.3,502.5 L1244.8,502.4 M1131.1,530.5 L1134.4,530.4 L1150.0,529.7 L1168.6,528.9 L1189.9,528.0 L1211.0,527.2 L1229.0,526.4 L1236.6,526.1 L1239.9,526.0 M1133.5,554.5 L1136.5,554.4 L1151.1,553.7 L1168.5,552.8 L1188.4,551.9 L1208.2,550.9 L1225.1,550.1 L1232.2,549.7 L1235.3,549.6 M1135.3,578.6 L1138.2,578.5 L1151.9,577.7 L1168.2,576.8 L1187.0,575.7 L1205.6,574.7 L1221.5,573.8 L1228.2,573.4 L1231.0,573.3 M1137.0,602.7 L1139.7,602.5 L1152.5,601.7 L1167.9,600.7 L1185.5,599.6 L1202.9,598.5 L1217.8,597.5 L1224.1,597.1 L1226.8,596.9 M1138.6,626.8 L1141.2,626.6 L1153.2,625.7 L1167.5,624.7 L1183.9,623.5 L1200.2,622.3 L1214.1,621.2 L1220.0,620.8 L1222.5,620.6 M1140.3,650.9 L1142.7,650.7 L1153.8,649.8 L1167.1,648.6 L1182.4,647.3 L1197.5,646.1 L1210.5,645.0 L1215.9,644.5 L1218.3,644.3 M1142.0,675.0 L1144.2,674.8 L1154.5,673.8 L1166.8,672.6 L1180.9,671.2 L1194.8,669.9 L1206.8,668.7 L1211.8,668.2 L1214.0,668.0 M1139.9,695.0 L1141.9,695.2 L1151.4,696.1 L1162.7,697.1 L1175.7,698.4 L1188.6,699.6 L1199.6,700.6 L1204.2,701.0 L1206.2,701.2 M1132.6,713.8 L1134.5,714.4 L1143.4,717.2 L1154.1,720.6 L1166.4,724.4 L1178.5,728.3 L1188.9,731.5 L1193.2,732.9 L1195.1,733.5 M1121.8,730.8 L1123.5,731.7 L1131.7,736.5 L1141.6,742.1 L1152.8,748.6 L1164.0,755.0 L1173.5,760.5 L1177.6,762.8 L1179.3,763.8 M1108.6,746.0 L1110.1,747.3 L1117.3,753.8 L1125.9,761.5 L1135.7,770.3 L1145.5,779.0 L1153.8,786.5 L1157.3,789.7 L1158.8,791.0 M1093.5,759.4 L1094.8,761.0 L1100.5,768.8 L1107.4,778.2 L1115.3,788.9 L1123.1,799.6 L1129.8,808.7 L1132.6,812.5 L1133.8,814.1 M1076.7,770.5 L1077.6,772.3 L1081.6,781.1 L1086.4,791.6 L1091.8,803.7 L1097.3,815.6 L1101.9,825.8 L1103.9,830.1 L1104.7,832.0 M1058.7,779.5 L1059.2,781.5 L1061.2,790.8 L1063.7,802.0 L1066.5,814.8 L1069.3,827.5 L1071.7,838.3 L1072.7,842.9 L1073.1,844.9 M1040.0,787.0 L1040.0,789.0 L1040.0,798.4 L1040.0,809.7 L1040.0,822.6 L1040.0,835.4 L1040.0,846.4 L1040.0,851.0 L1040.0,853.0 M1109.0,290.0 L1110.1,314.1 L1112.4,338.2 L1114.8,362.2 L1117.1,386.2 L1119.5,410.3 L1121.8,434.3 L1124.1,458.4 L1126.5,482.4 L1128.8,506.5 L1131.1,530.5 L1133.5,554.5 L1135.3,578.6 L1137.0,602.7 L1138.6,626.8 L1140.3,650.9 L1142.0,675.0 L1139.9,695.0 L1132.6,713.8 L1121.8,730.8 L1108.6,746.0 L1093.5,759.4 L1076.7,770.5 L1058.7,779.5 L1040.0,787.0 M1114.3,290.0 L1115.3,314.1 L1117.4,338.1 L1119.6,362.2 L1121.7,386.2 L1123.8,410.2 L1125.9,434.3 L1128.0,458.3 L1130.2,482.3 L1132.3,506.3 L1134.4,530.4 L1136.5,554.4 L1138.2,578.5 L1139.7,602.5 L1141.2,626.6 L1142.7,650.7 L1144.2,674.8 L1141.9,695.2 L1134.5,714.4 L1123.5,731.7 L1110.1,747.3 L1094.8,761.0 L1077.6,772.3 L1059.2,781.5 L1040.0,789.0 M1139.8,290.0 L1140.2,314.1 L1141.2,338.0 L1142.3,362.0 L1143.4,386.0 L1144.5,409.9 L1145.6,433.9 L1146.7,457.8 L1147.8,481.8 L1148.9,505.7 L1150.0,529.7 L1151.1,553.7 L1151.9,577.7 L1152.5,601.7 L1153.2,625.7 L1153.8,649.8 L1154.5,673.8 L1151.4,696.1 L1143.4,717.2 L1131.7,736.5 L1117.3,753.8 L1100.5,768.8 L1081.6,781.1 L1061.2,790.8 L1040.0,798.4 M1170.2,290.0 L1169.9,314.0 L1169.7,337.9 L1169.6,361.8 L1169.4,385.7 L1169.3,409.5 L1169.1,433.4 L1169.0,457.3 L1168.8,481.2 L1168.7,505.1 L1168.6,528.9 L1168.5,552.8 L1168.2,576.8 L1167.9,600.7 L1167.5,624.7 L1167.1,648.6 L1166.8,672.6 L1162.7,697.1 L1154.1,720.6 L1141.6,742.1 L1125.9,761.5 L1107.4,778.2 L1086.4,791.6 L1063.7,802.0 L1040.0,809.7 M1205.1,290.0 L1203.9,314.0 L1202.4,337.8 L1200.8,361.5 L1199.2,385.3 L1197.7,409.1 L1196.1,432.9 L1194.6,456.7 L1193.0,480.5 L1191.4,504.3 L1189.9,528.0 L1188.4,551.9 L1187.0,575.7 L1185.5,599.6 L1183.9,623.5 L1182.4,647.3 L1180.9,671.2 L1175.7,698.4 L1166.4,724.4 L1152.8,748.6 L1135.7,770.3 L1115.3,788.9 L1091.8,803.7 L1066.5,814.8 L1040.0,822.6 M1239.7,290.0 L1237.6,313.9 L1234.7,337.6 L1231.7,361.3 L1228.7,385.0 L1225.8,408.7 L1222.8,432.4 L1219.9,456.1 L1216.9,479.8 L1213.9,503.5 L1211.0,527.2 L1208.2,550.9 L1205.6,574.7 L1202.9,598.5 L1200.2,622.3 L1197.5,646.1 L1194.8,669.9 L1188.6,699.6 L1178.5,728.3 L1164.0,755.0 L1145.5,779.0 L1123.1,799.6 L1097.3,815.6 L1069.3,827.5 L1040.0,835.4 M1269.2,290.0 L1266.5,313.9 L1262.3,337.5 L1258.1,361.1 L1254.0,384.7 L1249.8,408.3 L1245.7,431.9 L1241.5,455.6 L1237.3,479.2 L1233.2,502.8 L1229.0,526.4 L1225.1,550.1 L1221.5,573.8 L1217.8,597.5 L1214.1,621.2 L1210.5,645.0 L1206.8,668.7 L1199.6,700.6 L1188.9,731.5 L1173.5,760.5 L1153.8,786.5 L1129.8,808.7 L1101.9,825.8 L1071.7,838.3 L1040.0,846.4 M1281.7,290.0 L1278.6,313.9 L1273.9,337.4 L1269.3,361.0 L1264.6,384.6 L1260.0,408.2 L1255.3,431.8 L1250.6,455.3 L1246.0,478.9 L1241.3,502.5 L1236.6,526.1 L1232.2,549.7 L1228.2,573.4 L1224.1,597.1 L1220.0,620.8 L1215.9,644.5 L1211.8,668.2 L1204.2,701.0 L1193.2,732.9 L1177.6,762.8 L1157.3,789.7 L1132.6,812.5 L1103.9,830.1 L1072.7,842.9 L1040.0,851.0 M1287.0,290.0 L1283.8,313.9 L1278.9,337.4 L1274.1,361.0 L1269.2,384.6 L1264.3,408.1 L1259.4,431.7 L1254.5,455.3 L1249.7,478.8 L1244.8,502.4 L1239.9,526.0 L1235.3,549.6 L1231.0,573.3 L1226.8,596.9 L1222.5,620.6 L1218.3,644.3 L1214.0,668.0 L1206.2,701.2 L1195.1,733.5 L1179.3,763.8 L1158.8,791.0 L1133.8,814.1 L1104.7,832.0 L1073.1,844.9 L1040.0,853.0" fill="none" stroke="#50a040" stroke-width="0.8" opacity="0.45"/><path d="M1109.0,290.0 L1115.3,314.1 M1114.3,290.0 L1140.2,314.1 M1139.8,290.0 L1169.9,314.0 M1170.2,290.0 L1203.9,314.0 M1205.1,290.0 L1237.6,313.9 M1239.7,290.0 L1266.5,313.9 M1269.2,290.0 L1278.6,313.9 M1281.7,290.0 L1283.8,313.9 M1110.1,314.1 L1117.4,338.1 M1115.3,314.1 L1141.2,338.0 M1140.2,314.1 L1169.7,337.9 M1169.9,314.0 L1202.4,337.8 M1203.9,314.0 L1234.7,337.6 M1237.6,313.9 L1262.3,337.5 M1266.5,313.9 L1273.9,337.4 M1278.6,313.9 L1278.9,337.4 M1112.4,338.2 L1119.6,362.2 M1117.4,338.1 L1142.3,362.0 M1141.2,338.0 L1169.6,361.8 M1169.7,337.9 L1200.8,361.5 M1202.4,337.8 L1231.7,361.3 M1234.7,337.6 L1258.1,361.1 M1262.3,337.5 L1269.3,361.0 M1273.9,337.4 L1274.1,361.0 M1114.8,362.2 L1121.7,386.2 M1119.6,362.2 L1143.4,386.0 M1142.3,362.0 L1169.4,385.7 M1169.6,361.8 L1199.2,385.3 M1200.8,361.5 L1228.7,385.0 M1231.7,361.3 L1254.0,384.7 M1258.1,361.1 L1264.6,384.6 M1269.3,361.0 L1269.2,384.6 M1117.1,386.2 L1123.8,410.2 M1121.7,386.2 L1144.5,409.9 M1143.4,386.0 L1169.3,409.5 M1169.4,385.7 L1197.7,409.1 M1199.2,385.3 L1225.8,408.7 M1228.7,385.0 L1249.8,408.3 M1254.0,384.7 L1260.0,408.2 M1264.6,384.6 L1264.3,408.1 M1119.5,410.3 L1125.9,434.3 M1123.8,410.2 L1145.6,433.9 M1144.5,409.9 L1169.1,433.4 M1169.3,409.5 L1196.1,432.9 M1197.7,409.1 L1222.8,432.4 M1225.8,408.7 L1245.7,431.9 M1249.8,408.3 L1255.3,431.8 M1260.0,408.2 L1259.4,431.7 M1121.8,434.3 L1128.0,458.3 M1125.9,434.3 L1146.7,457.8 M1145.6,433.9 L1169.0,457.3 M1169.1,433.4 L1194.6,456.7 M1196.1,432.9 L1219.9,456.1 M1222.8,432.4 L1241.5,455.6 M1245.7,431.9 L1250.6,455.3 M1255.3,431.8 L1254.5,455.3 M1124.1,458.4 L1130.2,482.3 M1128.0,458.3 L1147.8,481.8 M1146.7,457.8 L1168.8,481.2 M1169.0,457.3 L1193.0,480.5 M1194.6,456.7 L1216.9,479.8 M1219.9,456.1 L1237.3,479.2 M1241.5,455.6 L1246.0,478.9 M1250.6,455.3 L1249.7,478.8 M1126.5,482.4 L1132.3,506.3 M1130.2,482.3 L1148.9,505.7 M1147.8,481.8 L1168.7,505.1 M1168.8,481.2 L1191.4,504.3 M1193.0,480.5 L1213.9,503.5 M1216.9,479.8 L1233.2,502.8 M1237.3,479.2 L1241.3,502.5 M1246.0,478.9 L1244.8,502.4 M1128.8,506.5 L1134.4,530.4 M1132.3,506.3 L1150.0,529.7 M1148.9,505.7 L1168.6,528.9 M1168.7,505.1 L1189.9,528.0 M1191.4,504.3 L1211.0,527.2 M1213.9,503.5 L1229.0,526.4 M1233.2,502.8 L1236.6,526.1 M1241.3,502.5 L1239.9,526.0 M1131.1,530.5 L1136.5,554.4 M1134.4,530.4 L1151.1,553.7 M1150.0,529.7 L1168.5,552.8 M1168.6,528.9 L1188.4,551.9 M1189.9,528.0 L1208.2,550.9 M1211.0,527.2 L1225.1,550.1 M1229.0,526.4 L1232.2,549.7 M1236.6,526.1 L1235.3,549.6 M1133.5,554.5 L1138.2,578.5 M1136.5,554.4 L1151.9,577.7 M1151.1,553.7 L1168.2,576.8 M1168.5,552.8 L1187.0,575.7 M1188.4,551.9 L1205.6,574.7 M1208.2,550.9 L1221.5,573.8 M1225.1,550.1 L1228.2,573.4 M1232.2,549.7 L1231.0,573.3 M1135.3,578.6 L1139.7,602.5 M1138.2,578.5 L1152.5,601.7 M1151.9,577.7 L1167.9,600.7 M1168.2,576.8 L1185.5,599.6 M1187.0,575.7 L1202.9,598.5 M1205.6,574.7 L1217.8,597.5 M1221.5,573.8 L1224.1,597.1 M1228.2,573.4 L1226.8,596.9 M1137.0,602.7 L1141.2,626.6 M1139.7,602.5 L1153.2,625.7 M1152.5,601.7 L1167.5,624.7 M1167.9,600.7 L1183.9,623.5 M1185.5,599.6 L1200.2,622.3 M1202.9,598.5 L1214.1,621.2 M1217.8,597.5 L1220.0,620.8 M1224.1,597.1 L1222.5,620.6 M1138.6,626.8 L1142.7,650.7 M1141.2,626.6 L1153.8,649.8 M1153.2,625.7 L1167.1,648.6 M1167.5,624.7 L1182.4,647.3 M1183.9,623.5 L1197.5,646.1 M1200.2,622.3 L1210.5,645.0 M1214.1,621.2 L1215.9,644.5 M1220.0,620.8 L1218.3,644.3 M1140.3,650.9 L1144.2,674.8 M1142.7,650.7 L1154.5,673.8 M1153.8,649.8 L1166.8,672.6 M1167.1,648.6 L1180.9,671.2 M1182.4,647.3 L1194.8,669.9 M1197.5,646.1 L1206.8,668.7 M1210.5,645.0 L1211.8,668.2 M1215.9,644.5 L1214.0,668.0 M1142.0,675.0 L1141.9,695.2 M1144.2,674.8 L1151.4,696.1 M1154.5,673.8 L1162.7,697.1 M1166.8,672.6 L1175.7,698.4 M1180.9,671.2 L1188.6,699.6 M1194.8,669.9 L1199.6,700.6 M1206.8,668.7 L1204.2,701.0 M1211.8,668.2 L1206.2,701.2 M1139.9,695.0 L1134.5,714.4 M1141.9,695.2 L1143.4,717.2 M1151.4,696.1 L1154.1,720.6 M1162.7,697.1 L1166.4,724.4 M1175.7,698.4 L1178.5,728.3 M1188.6,699.6 L1188.9,731.5 M1199.6,700.6 L1193.2,732.9 M1204.2,701.0 L1195.1,733.5 M1132.6,713.8 L1123.5,731.7 M1134.5,714.4 L1131.7,736.5 M1143.4,717.2 L1141.6,742.1 M1154.1,720.6 L1152.8,748.6 M1166.4,724.4 L1164.0,755.0 M1178.5,728.3 L1173.5,760.5 M1188.9,731.5 L1177.6,762.8 M1193.2,732.9 L1179.3,763.8 M1121.8,730.8 L1110.1,747.3 M1123.5,731.7 L1117.3,753.8 M1131.7,736.5 L1125.9,761.5 M1141.6,742.1 L1135.7,770.3 M1152.8,748.6 L1145.5,779.0 M1164.0,755.0 L1153.8,786.5 M1173.5,760.5 L1157.3,789.7 M1177.6,762.8 L1158.8,791.0 M1108.6,746.0 L1094.8,761.0 M1110.1,747.3 L1100.5,768.8 M1117.3,753.8 L1107.4,778.2 M1125.9,761.5 L1115.3,788.9 M1135.7,770.3 L1123.1,799.6 M1145.5,779.0 L1129.8,808.7 M1153.8,786.5 L1132.6,812.5 M1157.3,789.7 L1133.8,814.1 M1093.5,759.4 L1077.6,772.3 M1094.8,761.0 L1081.6,781.1 M1100.5,768.8 L1086.4,791.6 M1107.4,778.2 L1091.8,803.7 M1115.3,788.9 L1097.3,815.6 M1123.1,799.6 L1101.9,825.8 M1129.8,808.7 L1103.9,830.1 M1132.6,812.5 L1104.7,832.0 M1076.7,770.5 L1059.2,781.5 M1077.6,772.3 L1061.2,790.8 M1081.6,781.1 L1063.7,802.0 M1086.4,791.6 L1066.5,814.8 M1091.8,803.7 L1069.3,827.5 M1097.3,815.6 L1071.7,838.3 M1101.9,825.8 L1072.7,842.9 M1103.9,830.1 L1073.1,844.9 M1058.7,779.5 L1040.0,789.0 M1059.2,781.5 L1040.0,798.4 M1061.2,790.8 L1040.0,809.7 M1063.7,802.0 L1040.0,822.6 M1066.5,814.8 L1040.0,835.4 M1069.3,827.5 L1040.0,846.4 M1071.7,838.3 L1040.0,851.0 M1072.7,842.9 L1040.0,853.0" fill="none" stroke="#50a040" stroke-width="0.8" opacity="0.45"/></g>
<g clip-path="url(#cFront)"><g fill="none" stroke="#5e625c" stroke-width="1.3" opacity="0.65"><polyline points="1109.0,290.0 1109.2,294.8 1109.4,299.7 1109.6,304.5 1109.8,309.3 1110.1,314.1 1110.6,318.9 1111.0,323.7 1111.5,328.6 1112.0,333.4 1112.4,338.2 1112.9,343.0 1113.4,347.8 1113.8,352.6 1114.3,357.4 1114.8,362.2 1115.2,367.0 1115.7,371.8 1116.2,376.6 1116.7,381.4 1117.1,386.2 1117.6,391.1 1118.1,395.9 1118.5,400.7 1119.0,405.5 1119.5,410.3 1119.9,415.1 1120.4,419.9 1120.9,424.7 1121.3,429.5 1121.8,434.3 1122.3,439.1 1122.7,443.9 1123.2,448.8 1123.7,453.6 1124.1,458.4 1124.6,463.2 1125.1,468.0 1125.5,472.8 1126.0,477.6 1126.5,482.4 1126.9,487.2 1127.4,492.0 1127.9,496.8 1128.3,501.6 1128.8,506.5 1129.3,511.3 1129.7,516.1 1130.2,520.9 1130.7,525.7 1131.1,530.5 1131.6,535.3 1132.1,540.1 1132.5,544.9 1133.0,549.7 1133.5,554.5 1133.9,559.3 1134.3,564.2 1134.6,569.0 1135.0,573.8 1135.3,578.6 1135.6,583.4 1136.0,588.3 1136.3,593.1 1136.6,597.9 1137.0,602.7 1137.3,607.5 1137.6,612.4 1138.0,617.2 1138.3,622.0 1138.6,626.8 1139.0,631.6 1139.3,636.4 1139.7,641.3 1140.0,646.1 1140.3,650.9 1140.7,655.7 1141.0,660.5 1141.3,665.4 1141.7,670.2 1142.0,675.0 1141.9,679.0 1141.9,683.1 1141.4,687.1 1140.7,691.0 1139.9,695.0 1138.7,698.8 1137.5,702.7 1135.9,706.4 1134.3,710.1 1132.6,713.8 1130.6,717.3 1128.6,720.7 1126.5,724.2 1124.1,727.5 1121.8,730.8 1119.4,734.0 1116.8,737.0 1114.1,740.1 1111.5,743.1 1108.6,746.0 1105.7,748.8 1102.8,751.6 1099.7,754.2 1096.6,756.8 1093.5,759.4 1090.3,761.7 1087.0,764.0 1083.7,766.4 1080.2,768.5 1076.7,770.5 1073.3,772.5 1069.7,774.4 1066.1,776.1 1062.4,777.9 1058.7,779.5 1055.0,781.0 1051.2,782.5 1047.5,784.0 1043.7,785.5 1040.0,787.0"/><polyline points="1287.0,290.0 1286.4,294.8 1285.8,299.5 1285.1,304.3 1284.5,309.1 1283.8,313.9 1282.8,318.6 1281.9,323.3 1280.9,328.0 1279.9,332.7 1278.9,337.4 1278.0,342.1 1277.0,346.8 1276.0,351.6 1275.0,356.3 1274.1,361.0 1273.1,365.7 1272.1,370.4 1271.1,375.1 1270.2,379.8 1269.2,384.6 1268.2,389.3 1267.2,394.0 1266.3,398.7 1265.3,403.4 1264.3,408.1 1263.3,412.8 1262.4,417.5 1261.4,422.3 1260.4,427.0 1259.4,431.7 1258.5,436.4 1257.5,441.1 1256.5,445.8 1255.5,450.5 1254.5,455.3 1253.6,460.0 1252.6,464.7 1251.6,469.4 1250.6,474.1 1249.7,478.8 1248.7,483.5 1247.7,488.2 1246.7,493.0 1245.8,497.7 1244.8,502.4 1243.8,507.1 1242.8,511.8 1241.9,516.5 1240.9,521.2 1239.9,526.0 1238.9,530.7 1238.0,535.4 1237.0,540.1 1236.1,544.8 1235.3,549.6 1234.4,554.3 1233.6,559.0 1232.7,563.8 1231.9,568.5 1231.0,573.3 1230.2,578.0 1229.3,582.7 1228.5,587.5 1227.6,592.2 1226.8,596.9 1225.9,601.7 1225.1,606.4 1224.2,611.2 1223.4,615.9 1222.5,620.6 1221.7,625.4 1220.8,630.1 1220.0,634.8 1219.1,639.6 1218.3,644.3 1217.4,649.1 1216.6,653.8 1215.7,658.5 1214.9,663.3 1214.0,668.0 1212.6,674.7 1211.2,681.4 1209.7,688.0 1208.1,694.7 1206.2,701.2 1204.3,707.8 1202.4,714.4 1199.9,720.7 1197.5,727.1 1195.1,733.5 1192.2,739.7 1189.2,745.9 1186.3,752.0 1182.9,757.9 1179.3,763.8 1175.7,769.6 1171.7,775.1 1167.6,780.6 1163.5,786.0 1158.8,791.0 1154.2,796.0 1149.5,800.9 1144.2,805.4 1139.0,809.8 1133.8,814.1 1128.1,818.0 1122.5,821.8 1116.7,825.5 1110.7,828.7 1104.7,832.0 1098.6,835.0 1092.3,837.7 1086.0,840.3 1079.6,842.8 1073.1,844.9 1066.6,846.9 1060.1,849.0 1053.4,850.3 1046.7,851.7 1040.0,853.0"/></g></g>
<clipPath id="cCyl"><path d="M877,533 L882,913 A88,33 0 0 0 1058,913 L1067,531 Z"/></clipPath>
<g clip-path="url(#cFront)"><g clip-path="url(#cCyl)">
<polygon points="877.0,520.0 877.2,533.9 877.3,547.7 877.5,561.6 877.6,575.5 877.8,589.4 878.0,603.2 878.1,617.1 878.3,631.0 878.5,644.8 878.6,658.7 878.8,672.6 878.9,686.5 879.1,700.3 879.3,714.2 879.4,728.1 879.6,741.9 879.7,755.8 879.9,769.7 880.1,783.5 880.2,797.4 880.4,811.3 880.5,825.2 880.7,839.0 880.9,852.9 881.0,866.8 881.2,880.6 881.4,894.5 881.5,908.4 881.7,922.3 881.8,936.1 882.0,950.0 889.0,950.0 888.9,936.1 888.8,922.3 888.6,908.4 888.5,894.5 888.3,880.6 888.2,866.8 888.0,852.9 887.9,839.0 887.8,825.2 887.6,811.3 887.5,797.4 887.3,783.5 887.2,769.7 887.0,755.8 886.9,741.9 886.7,728.1 886.6,714.2 886.5,700.3 886.3,686.5 886.2,672.6 886.0,658.7 885.9,644.8 885.7,631.0 885.6,617.1 885.5,603.2 885.3,589.4 885.2,575.5 885.0,561.6 884.9,547.7 884.7,533.9 884.6,520.0" fill="#7a9e6c" stroke="#7a9e6c" stroke-width="0.6"/>
<polygon points="884.6,520.0 884.7,533.9 884.9,547.7 885.0,561.6 885.2,575.5 885.3,589.4 885.5,603.2 885.6,617.1 885.7,631.0 885.9,644.8 886.0,658.7 886.2,672.6 886.3,686.5 886.5,700.3 886.6,714.2 886.7,728.1 886.9,741.9 887.0,755.8 887.2,769.7 887.3,783.5 887.5,797.4 887.6,811.3 887.8,825.2 887.9,839.0 888.0,852.9 888.2,866.8 888.3,880.6 888.5,894.5 888.6,908.4 888.8,922.3 888.9,936.1 889.0,950.0 897.8,950.0 897.7,936.1 897.6,922.3 897.5,908.4 897.4,894.5 897.2,880.6 897.1,866.8 897.0,852.9 896.9,839.0 896.8,825.2 896.6,811.3 896.5,797.4 896.4,783.5 896.3,769.7 896.2,755.8 896.0,741.9 895.9,728.1 895.8,714.2 895.7,700.3 895.5,686.5 895.4,672.6 895.3,658.7 895.2,644.8 895.1,631.0 894.9,617.1 894.8,603.2 894.7,589.4 894.6,575.5 894.5,561.6 894.3,547.7 894.2,533.9 894.1,520.0" fill="#82ae72" stroke="#82ae72" stroke-width="0.6"/>
<polygon points="894.1,520.0 894.2,533.9 894.3,547.7 894.5,561.6 894.6,575.5 894.7,589.4 894.8,603.2 894.9,617.1 895.1,631.0 895.2,644.8 895.3,658.7 895.4,672.6 895.5,686.5 895.7,700.3 895.8,714.2 895.9,728.1 896.0,741.9 896.2,755.8 896.3,769.7 896.4,783.5 896.5,797.4 896.6,811.3 896.8,825.2 896.9,839.0 897.0,852.9 897.1,866.8 897.2,880.6 897.4,894.5 897.5,908.4 897.6,922.3 897.7,936.1 897.8,950.0 910.2,950.0 910.1,936.1 910.0,922.3 909.9,908.4 909.8,894.5 909.7,880.6 909.6,866.8 909.5,852.9 909.4,839.0 909.4,825.2 909.3,811.3 909.2,797.4 909.1,783.5 909.0,769.7 908.9,755.8 908.8,741.9 908.7,728.1 908.6,714.2 908.6,700.3 908.5,686.5 908.4,672.6 908.3,658.7 908.2,644.8 908.1,631.0 908.0,617.1 907.9,603.2 907.8,589.4 907.8,575.5 907.7,561.6 907.6,547.7 907.5,533.9 907.4,520.0" fill="#8ec676" stroke="#8ec676" stroke-width="0.6"/>
<polygon points="907.4,520.0 907.5,533.9 907.6,547.7 907.7,561.6 907.8,575.5 907.8,589.4 907.9,603.2 908.0,617.1 908.1,631.0 908.2,644.8 908.3,658.7 908.4,672.6 908.5,686.5 908.6,700.3 908.6,714.2 908.7,728.1 908.8,741.9 908.9,755.8 909.0,769.7 909.1,783.5 909.2,797.4 909.3,811.3 909.4,825.2 909.4,839.0 909.5,852.9 909.6,866.8 909.7,880.6 909.8,894.5 909.9,908.4 910.0,922.3 910.1,936.1 910.2,950.0 940.1,950.0 940.1,936.1 940.1,922.3 940.0,908.4 940.0,894.5 940.0,880.6 940.0,866.8 940.0,852.9 940.0,839.0 940.0,825.2 940.0,811.3 939.9,797.4 939.9,783.5 939.9,769.7 939.9,755.8 939.9,741.9 939.9,728.1 939.9,714.2 939.9,700.3 939.8,686.5 939.8,672.6 939.8,658.7 939.8,644.8 939.8,631.0 939.8,617.1 939.8,603.2 939.8,589.4 939.7,575.5 939.7,561.6 939.7,547.7 939.7,533.9 939.7,520.0" fill="#96d47c" stroke="#96d47c" stroke-width="0.6"/>
<polygon points="939.7,520.0 939.7,533.9 939.7,547.7 939.7,561.6 939.7,575.5 939.8,589.4 939.8,603.2 939.8,617.1 939.8,631.0 939.8,644.8 939.8,658.7 939.8,672.6 939.8,686.5 939.9,700.3 939.9,714.2 939.9,728.1 939.9,741.9 939.9,755.8 939.9,769.7 939.9,783.5 939.9,797.4 940.0,811.3 940.0,825.2 940.0,839.0 940.0,852.9 940.0,866.8 940.0,880.6 940.0,894.5 940.0,908.4 940.1,922.3 940.1,936.1 940.1,950.0 996.4,950.0 996.5,936.1 996.7,922.3 996.8,908.4 996.9,894.5 997.1,880.6 997.2,866.8 997.3,852.9 997.5,839.0 997.6,825.2 997.7,811.3 997.9,797.4 998.0,783.5 998.1,769.7 998.3,755.8 998.4,741.9 998.5,728.1 998.6,714.2 998.8,700.3 998.9,686.5 999.0,672.6 999.2,658.7 999.3,644.8 999.4,631.0 999.6,617.1 999.7,603.2 999.8,589.4 1000.0,575.5 1000.1,561.6 1000.2,547.7 1000.4,533.9 1000.5,520.0" fill="#9bda80" stroke="#9bda80" stroke-width="0.6"/>
<polygon points="1000.5,520.0 1000.4,533.9 1000.2,547.7 1000.1,561.6 1000.0,575.5 999.8,589.4 999.7,603.2 999.6,617.1 999.4,631.0 999.3,644.8 999.2,658.7 999.0,672.6 998.9,686.5 998.8,700.3 998.6,714.2 998.5,728.1 998.4,741.9 998.3,755.8 998.1,769.7 998.0,783.5 997.9,797.4 997.7,811.3 997.6,825.2 997.5,839.0 997.3,852.9 997.2,866.8 997.1,880.6 996.9,894.5 996.8,908.4 996.7,922.3 996.5,936.1 996.4,950.0 1028.1,950.0 1028.3,936.1 1028.5,922.3 1028.7,908.4 1028.9,894.5 1029.1,880.6 1029.4,866.8 1029.6,852.9 1029.8,839.0 1030.0,825.2 1030.2,811.3 1030.4,797.4 1030.6,783.5 1030.9,769.7 1031.1,755.8 1031.3,741.9 1031.5,728.1 1031.7,714.2 1031.9,700.3 1032.1,686.5 1032.4,672.6 1032.6,658.7 1032.8,644.8 1033.0,631.0 1033.2,617.1 1033.4,603.2 1033.6,589.4 1033.8,575.5 1034.1,561.6 1034.3,547.7 1034.5,533.9 1034.7,520.0" fill="#94d07a" stroke="#94d07a" stroke-width="0.6"/>
<polygon points="1034.7,520.0 1034.5,533.9 1034.3,547.7 1034.1,561.6 1033.8,575.5 1033.6,589.4 1033.4,603.2 1033.2,617.1 1033.0,631.0 1032.8,644.8 1032.6,658.7 1032.4,672.6 1032.1,686.5 1031.9,700.3 1031.7,714.2 1031.5,728.1 1031.3,741.9 1031.1,755.8 1030.9,769.7 1030.6,783.5 1030.4,797.4 1030.2,811.3 1030.0,825.2 1029.8,839.0 1029.6,852.9 1029.4,866.8 1029.1,880.6 1028.9,894.5 1028.7,908.4 1028.5,922.3 1028.3,936.1 1028.1,950.0 1040.4,950.0 1040.6,936.1 1040.9,922.3 1041.1,908.4 1041.4,894.5 1041.6,880.6 1041.9,866.8 1042.1,852.9 1042.4,839.0 1042.6,825.2 1042.9,811.3 1043.1,797.4 1043.3,783.5 1043.6,769.7 1043.8,755.8 1044.1,741.9 1044.3,728.1 1044.6,714.2 1044.8,700.3 1045.1,686.5 1045.3,672.6 1045.5,658.7 1045.8,644.8 1046.0,631.0 1046.3,617.1 1046.5,603.2 1046.8,589.4 1047.0,575.5 1047.3,561.6 1047.5,547.7 1047.8,533.9 1048.0,520.0" fill="#86b874" stroke="#86b874" stroke-width="0.6"/>
<polygon points="1048.0,520.0 1047.8,533.9 1047.5,547.7 1047.3,561.6 1047.0,575.5 1046.8,589.4 1046.5,603.2 1046.3,617.1 1046.0,631.0 1045.8,644.8 1045.5,658.7 1045.3,672.6 1045.1,686.5 1044.8,700.3 1044.6,714.2 1044.3,728.1 1044.1,741.9 1043.8,755.8 1043.6,769.7 1043.3,783.5 1043.1,797.4 1042.9,811.3 1042.6,825.2 1042.4,839.0 1042.1,852.9 1041.9,866.8 1041.6,880.6 1041.4,894.5 1041.1,908.4 1040.9,922.3 1040.6,936.1 1040.4,950.0 1051.0,950.0 1051.2,936.1 1051.5,922.3 1051.8,908.4 1052.0,894.5 1052.3,880.6 1052.6,866.8 1052.9,852.9 1053.1,839.0 1053.4,825.2 1053.7,811.3 1054.0,797.4 1054.2,783.5 1054.5,769.7 1054.8,755.8 1055.0,741.9 1055.3,728.1 1055.6,714.2 1055.9,700.3 1056.1,686.5 1056.4,672.6 1056.7,658.7 1056.9,644.8 1057.2,631.0 1057.5,617.1 1057.8,603.2 1058.0,589.4 1058.3,575.5 1058.6,561.6 1058.9,547.7 1059.1,533.9 1059.4,520.0" fill="#7ea670" stroke="#7ea670" stroke-width="0.6"/>
<polygon points="1059.4,520.0 1059.1,533.9 1058.9,547.7 1058.6,561.6 1058.3,575.5 1058.0,589.4 1057.8,603.2 1057.5,617.1 1057.2,631.0 1056.9,644.8 1056.7,658.7 1056.4,672.6 1056.1,686.5 1055.9,700.3 1055.6,714.2 1055.3,728.1 1055.0,741.9 1054.8,755.8 1054.5,769.7 1054.2,783.5 1054.0,797.4 1053.7,811.3 1053.4,825.2 1053.1,839.0 1052.9,852.9 1052.6,866.8 1052.3,880.6 1052.0,894.5 1051.8,908.4 1051.5,922.3 1051.2,936.1 1051.0,950.0 1058.0,950.0 1058.3,936.1 1058.6,922.3 1058.9,908.4 1059.2,894.5 1059.5,880.6 1059.7,866.8 1060.0,852.9 1060.3,839.0 1060.6,825.2 1060.9,811.3 1061.2,797.4 1061.5,783.5 1061.8,769.7 1062.1,755.8 1062.4,741.9 1062.6,728.1 1062.9,714.2 1063.2,700.3 1063.5,686.5 1063.8,672.6 1064.1,658.7 1064.4,644.8 1064.7,631.0 1065.0,617.1 1065.3,603.2 1065.5,589.4 1065.8,575.5 1066.1,561.6 1066.4,547.7 1066.7,533.9 1067.0,520.0" fill="#789a6a" stroke="#789a6a" stroke-width="0.6"/>
<path d="M876.8,521.0 L878.7,527.0 L884.1,532.9 L892.9,538.2 L904.7,542.9 L919.2,546.8 L935.6,549.6 L953.5,551.4 L972.1,552.0 L990.6,551.4 L1008.5,549.6 L1025.0,546.8 L1039.4,542.9 L1051.2,538.2 L1060.0,532.9 L1065.5,527.0 L1067.3,521.0 M877.1,540.0 L878.9,546.0 L884.3,551.9 L893.1,557.2 L904.9,561.9 L919.3,565.8 L935.7,568.6 L953.5,570.4 L972.0,571.0 L990.5,570.4 L1008.3,568.6 L1024.7,565.8 L1039.0,561.9 L1050.8,557.2 L1059.6,551.9 L1065.0,546.0 L1066.8,540.0 M877.3,559.0 L879.2,565.0 L884.5,570.9 L893.3,576.2 L905.0,580.9 L919.4,584.8 L935.7,587.6 L953.4,589.4 L971.9,590.0 L990.3,589.4 L1008.0,587.6 L1024.4,584.8 L1038.7,580.9 L1050.5,576.2 L1059.2,570.9 L1064.6,565.0 L1066.4,559.0 M877.6,578.0 L879.4,584.0 L884.8,589.9 L893.5,595.2 L905.2,599.9 L919.4,603.8 L935.7,606.6 L953.4,608.4 L971.8,609.0 L990.1,608.4 L1007.8,606.6 L1024.1,603.8 L1038.4,599.9 L1050.1,595.2 L1058.8,589.9 L1064.1,584.0 L1065.9,578.0 M877.8,597.0 L879.6,603.0 L885.0,608.9 L893.7,614.2 L905.3,618.9 L919.5,622.8 L935.8,625.6 L953.4,627.4 L971.7,628.0 L990.0,627.4 L1007.6,625.6 L1023.8,622.8 L1038.0,618.9 L1049.7,614.2 L1058.3,608.9 L1063.7,603.0 L1065.5,597.0 M878.1,616.0 L879.9,622.0 L885.2,627.9 L893.8,633.2 L905.5,637.9 L919.6,641.8 L935.8,644.6 L953.3,646.4 L971.6,647.0 L989.8,646.4 L1007.3,644.6 L1023.5,641.8 L1037.7,637.9 L1049.3,633.2 L1057.9,627.9 L1063.2,622.0 L1065.0,616.0 M878.3,635.0 L880.1,641.0 L885.4,646.9 L894.0,652.2 L905.6,656.9 L919.7,660.8 L935.8,663.6 L953.3,665.4 L971.5,666.0 L989.6,665.4 L1007.1,663.6 L1023.2,660.8 L1037.3,656.9 L1048.9,652.2 L1057.5,646.9 L1062.8,641.0 L1064.6,635.0 M878.6,654.0 L880.4,660.0 L885.7,665.9 L894.2,671.2 L905.8,675.9 L919.8,679.8 L935.9,682.6 L953.3,684.4 L971.4,685.0 L989.5,684.4 L1006.9,682.6 L1022.9,679.8 L1037.0,675.9 L1048.5,671.2 L1057.1,665.9 L1062.4,660.0 L1064.1,654.0 M878.8,673.0 L880.6,679.0 L885.9,684.9 L894.4,690.2 L905.9,694.9 L919.9,698.8 L935.9,701.6 L953.2,703.4 L971.3,704.0 L989.3,703.4 L1006.6,701.6 L1022.6,698.8 L1036.6,694.9 L1048.1,690.2 L1056.6,684.9 L1061.9,679.0 L1063.7,673.0 M879.1,692.0 L880.9,698.0 L886.1,703.9 L894.6,709.2 L906.1,713.9 L920.0,717.8 L935.9,720.6 L953.2,722.4 L971.2,723.0 L989.1,722.4 L1006.4,720.6 L1022.3,717.8 L1036.3,713.9 L1047.7,709.2 L1056.2,703.9 L1061.5,698.0 L1063.2,692.0 M879.3,711.0 L881.1,717.0 L886.3,722.9 L894.8,728.2 L906.2,732.9 L920.1,736.8 L936.0,739.6 L953.2,741.4 L971.1,742.0 L989.0,741.4 L1006.2,739.6 L1022.0,736.8 L1035.9,732.9 L1047.3,728.2 L1055.8,722.9 L1061.0,717.0 L1062.8,711.0 M879.6,730.0 L881.3,736.0 L886.5,741.9 L895.0,747.2 L906.4,751.9 L920.2,755.8 L936.0,758.6 L953.1,760.4 L971.0,761.0 L988.8,760.4 L1005.9,758.6 L1021.7,755.8 L1035.6,751.9 L1046.9,747.2 L1055.4,741.9 L1060.6,736.0 L1062.3,730.0 M879.8,749.0 L881.6,755.0 L886.8,760.9 L895.2,766.2 L906.5,770.9 L920.3,774.8 L936.0,777.6 L953.1,779.4 L970.9,780.0 L988.6,779.4 L1005.7,777.6 L1021.4,774.8 L1035.2,770.9 L1046.5,766.2 L1055.0,760.9 L1060.1,755.0 L1061.9,749.0 M880.1,768.0 L881.8,774.0 L887.0,779.9 L895.4,785.2 L906.6,789.9 L920.4,793.8 L936.1,796.6 L953.1,798.4 L970.8,799.0 L988.5,798.4 L1005.5,796.6 L1021.1,793.8 L1034.9,789.9 L1046.2,785.2 L1054.5,779.9 L1059.7,774.0 L1061.4,768.0 M880.3,787.0 L882.1,793.0 L887.2,798.9 L895.6,804.2 L906.8,808.9 L920.5,812.8 L936.1,815.6 L953.0,817.4 L970.7,818.0 L988.3,817.4 L1005.2,815.6 L1020.8,812.8 L1034.5,808.9 L1045.8,804.2 L1054.1,798.9 L1059.2,793.0 L1061.0,787.0 M880.6,806.0 L882.3,812.0 L887.4,817.9 L895.8,823.2 L906.9,827.9 L920.6,831.8 L936.1,834.6 L953.0,836.4 L970.6,837.0 L988.1,836.4 L1005.0,834.6 L1020.5,831.8 L1034.2,827.9 L1045.4,823.2 L1053.7,817.9 L1058.8,812.0 L1060.5,806.0 M880.8,825.0 L882.6,831.0 L887.7,836.9 L895.9,842.2 L907.1,846.9 L920.7,850.8 L936.2,853.6 L953.0,855.4 L970.5,856.0 L987.9,855.4 L1004.8,853.6 L1020.3,850.8 L1033.8,846.9 L1045.0,842.2 L1053.3,836.9 L1058.4,831.0 L1060.1,825.0 M881.1,844.0 L882.8,850.0 L887.9,855.9 L896.1,861.2 L907.2,865.9 L920.8,869.8 L936.2,872.6 L952.9,874.4 L970.4,875.0 L987.8,874.4 L1004.5,872.6 L1020.0,869.8 L1033.5,865.9 L1044.6,861.2 L1052.8,855.9 L1057.9,850.0 L1059.6,844.0 M881.3,863.0 L883.1,869.0 L888.1,874.9 L896.3,880.2 L907.4,884.9 L920.9,888.8 L936.2,891.6 L952.9,893.4 L970.3,894.0 L987.6,893.4 L1004.3,891.6 L1019.7,888.8 L1033.1,884.9 L1044.2,880.2 L1052.4,874.9 L1057.5,869.0 L1059.2,863.0 M881.6,882.0 L883.3,888.0 L888.3,893.9 L896.5,899.2 L907.5,903.9 L921.0,907.8 L936.3,910.6 L952.9,912.4 L970.2,913.0 L987.4,912.4 L1004.1,910.6 L1019.4,907.8 L1032.8,903.9 L1043.8,899.2 L1052.0,893.9 L1057.0,888.0 L1058.7,882.0 M881.8,901.0 L883.5,907.0 L888.6,912.9 L896.7,918.2 L907.7,922.9 L921.1,926.8 L936.3,929.6 L952.9,931.4 L970.1,932.0 L987.3,931.4 L1003.8,929.6 L1019.1,926.8 L1032.4,922.9 L1043.4,918.2 L1051.6,912.9 L1056.6,907.0 L1058.3,901.0 M882.1,920.0 L883.8,926.0 L888.8,931.9 L896.9,937.2 L907.8,941.9 L921.1,945.8 L936.3,948.6 L952.8,950.4 L970.0,951.0 L987.1,950.4 L1003.6,948.6 L1018.8,945.8 L1032.1,941.9 L1043.0,937.2 L1051.1,931.9 L1056.1,926.0 L1057.8,920.0" fill="none" stroke="#b8a4b8" stroke-width="0.9" opacity="0.55"/>
<path d="M877.0,533.0 L882.5,950.0 M878.8,539.0 L884.2,956.0 M884.2,544.9 L889.1,961.9 M893.0,550.2 L897.2,967.2 M904.8,554.9 L908.1,971.9 M919.2,558.8 L921.3,975.8 M935.6,561.6 L936.4,978.6 M953.5,563.4 L952.8,980.4 M972.0,564.0 L969.8,981.0 M990.5,563.4 L986.8,980.4 M1008.4,561.6 L1003.2,978.6 M1024.8,558.8 L1018.3,975.8 M1039.2,554.9 L1031.5,971.9 M1051.0,550.2 L1042.4,967.2 M1059.8,544.9 L1050.5,961.9 M1065.2,539.0 L1055.4,956.0 M1067.0,533.0 L1057.1,950.0 M878.7,527.0 L877.1,540.0 M884.1,532.9 L878.9,546.0 M892.9,538.2 L884.3,551.9 M904.7,542.9 L893.1,557.2 M919.2,546.8 L904.9,561.9 M935.6,549.6 L919.3,565.8 M953.5,551.4 L935.7,568.6 M972.1,552.0 L953.5,570.4 M990.6,551.4 L972.0,571.0 M1008.5,549.6 L990.5,570.4 M1025.0,546.8 L1008.3,568.6 M1039.4,542.9 L1024.7,565.8 M1051.2,538.2 L1039.0,561.9 M1060.0,532.9 L1050.8,557.2 M1065.5,527.0 L1059.6,551.9 M1067.3,521.0 L1065.0,546.0 M878.9,546.0 L877.3,559.0 M884.3,551.9 L879.2,565.0 M893.1,557.2 L884.5,570.9 M904.9,561.9 L893.3,576.2 M919.3,565.8 L905.0,580.9 M935.7,568.6 L919.4,584.8 M953.5,570.4 L935.7,587.6 M972.0,571.0 L953.4,589.4 M990.5,570.4 L971.9,590.0 M1008.3,568.6 L990.3,589.4 M1024.7,565.8 L1008.0,587.6 M1039.0,561.9 L1024.4,584.8 M1050.8,557.2 L1038.7,580.9 M1059.6,551.9 L1050.5,576.2 M1065.0,546.0 L1059.2,570.9 M1066.8,540.0 L1064.6,565.0 M879.2,565.0 L877.6,578.0 M884.5,570.9 L879.4,584.0 M893.3,576.2 L884.8,589.9 M905.0,580.9 L893.5,595.2 M919.4,584.8 L905.2,599.9 M935.7,587.6 L919.4,603.8 M953.4,589.4 L935.7,606.6 M971.9,590.0 L953.4,608.4 M990.3,589.4 L971.8,609.0 M1008.0,587.6 L990.1,608.4 M1024.4,584.8 L1007.8,606.6 M1038.7,580.9 L1024.1,603.8 M1050.5,576.2 L1038.4,599.9 M1059.2,570.9 L1050.1,595.2 M1064.6,565.0 L1058.8,589.9 M1066.4,559.0 L1064.1,584.0 M879.4,584.0 L877.8,597.0 M884.8,589.9 L879.6,603.0 M893.5,595.2 L885.0,608.9 M905.2,599.9 L893.7,614.2 M919.4,603.8 L905.3,618.9 M935.7,606.6 L919.5,622.8 M953.4,608.4 L935.8,625.6 M971.8,609.0 L953.4,627.4 M990.1,608.4 L971.7,628.0 M1007.8,606.6 L990.0,627.4 M1024.1,603.8 L1007.6,625.6 M1038.4,599.9 L1023.8,622.8 M1050.1,595.2 L1038.0,618.9 M1058.8,589.9 L1049.7,614.2 M1064.1,584.0 L1058.3,608.9 M1065.9,578.0 L1063.7,603.0 M879.6,603.0 L878.1,616.0 M885.0,608.9 L879.9,622.0 M893.7,614.2 L885.2,627.9 M905.3,618.9 L893.8,633.2 M919.5,622.8 L905.5,637.9 M935.8,625.6 L919.6,641.8 M953.4,627.4 L935.8,644.6 M971.7,628.0 L953.3,646.4 M990.0,627.4 L971.6,647.0 M1007.6,625.6 L989.8,646.4 M1023.8,622.8 L1007.3,644.6 M1038.0,618.9 L1023.5,641.8 M1049.7,614.2 L1037.7,637.9 M1058.3,608.9 L1049.3,633.2 M1063.7,603.0 L1057.9,627.9 M1065.5,597.0 L1063.2,622.0 M879.9,622.0 L878.3,635.0 M885.2,627.9 L880.1,641.0 M893.8,633.2 L885.4,646.9 M905.5,637.9 L894.0,652.2 M919.6,641.8 L905.6,656.9 M935.8,644.6 L919.7,660.8 M953.3,646.4 L935.8,663.6 M971.6,647.0 L953.3,665.4 M989.8,646.4 L971.5,666.0 M1007.3,644.6 L989.6,665.4 M1023.5,641.8 L1007.1,663.6 M1037.7,637.9 L1023.2,660.8 M1049.3,633.2 L1037.3,656.9 M1057.9,627.9 L1048.9,652.2 M1063.2,622.0 L1057.5,646.9 M1065.0,616.0 L1062.8,641.0 M880.1,641.0 L878.6,654.0 M885.4,646.9 L880.4,660.0 M894.0,652.2 L885.7,665.9 M905.6,656.9 L894.2,671.2 M919.7,660.8 L905.8,675.9 M935.8,663.6 L919.8,679.8 M953.3,665.4 L935.9,682.6 M971.5,666.0 L953.3,684.4 M989.6,665.4 L971.4,685.0 M1007.1,663.6 L989.5,684.4 M1023.2,660.8 L1006.9,682.6 M1037.3,656.9 L1022.9,679.8 M1048.9,652.2 L1037.0,675.9 M1057.5,646.9 L1048.5,671.2 M1062.8,641.0 L1057.1,665.9 M1064.6,635.0 L1062.4,660.0 M880.4,660.0 L878.8,673.0 M885.7,665.9 L880.6,679.0 M894.2,671.2 L885.9,684.9 M905.8,675.9 L894.4,690.2 M919.8,679.8 L905.9,694.9 M935.9,682.6 L919.9,698.8 M953.3,684.4 L935.9,701.6 M971.4,685.0 L953.2,703.4 M989.5,684.4 L971.3,704.0 M1006.9,682.6 L989.3,703.4 M1022.9,679.8 L1006.6,701.6 M1037.0,675.9 L1022.6,698.8 M1048.5,671.2 L1036.6,694.9 M1057.1,665.9 L1048.1,690.2 M1062.4,660.0 L1056.6,684.9 M1064.1,654.0 L1061.9,679.0 M880.6,679.0 L879.1,692.0 M885.9,684.9 L880.9,698.0 M894.4,690.2 L886.1,703.9 M905.9,694.9 L894.6,709.2 M919.9,698.8 L906.1,713.9 M935.9,701.6 L920.0,717.8 M953.2,703.4 L935.9,720.6 M971.3,704.0 L953.2,722.4 M989.3,703.4 L971.2,723.0 M1006.6,701.6 L989.1,722.4 M1022.6,698.8 L1006.4,720.6 M1036.6,694.9 L1022.3,717.8 M1048.1,690.2 L1036.3,713.9 M1056.6,684.9 L1047.7,709.2 M1061.9,679.0 L1056.2,703.9 M1063.7,673.0 L1061.5,698.0 M880.9,698.0 L879.3,711.0 M886.1,703.9 L881.1,717.0 M894.6,709.2 L886.3,722.9 M906.1,713.9 L894.8,728.2 M920.0,717.8 L906.2,732.9 M935.9,720.6 L920.1,736.8 M953.2,722.4 L936.0,739.6 M971.2,723.0 L953.2,741.4 M989.1,722.4 L971.1,742.0 M1006.4,720.6 L989.0,741.4 M1022.3,717.8 L1006.2,739.6 M1036.3,713.9 L1022.0,736.8 M1047.7,709.2 L1035.9,732.9 M1056.2,703.9 L1047.3,728.2 M1061.5,698.0 L1055.8,722.9 M1063.2,692.0 L1061.0,717.0 M881.1,717.0 L879.6,730.0 M886.3,722.9 L881.3,736.0 M894.8,728.2 L886.5,741.9 M906.2,732.9 L895.0,747.2 M920.1,736.8 L906.4,751.9 M936.0,739.6 L920.2,755.8 M953.2,741.4 L936.0,758.6 M971.1,742.0 L953.1,760.4 M989.0,741.4 L971.0,761.0 M1006.2,739.6 L988.8,760.4 M1022.0,736.8 L1005.9,758.6 M1035.9,732.9 L1021.7,755.8 M1047.3,728.2 L1035.6,751.9 M1055.8,722.9 L1046.9,747.2 M1061.0,717.0 L1055.4,741.9 M1062.8,711.0 L1060.6,736.0 M881.3,736.0 L879.8,749.0 M886.5,741.9 L881.6,755.0 M895.0,747.2 L886.8,760.9 M906.4,751.9 L895.2,766.2 M920.2,755.8 L906.5,770.9 M936.0,758.6 L920.3,774.8 M953.1,760.4 L936.0,777.6 M971.0,761.0 L953.1,779.4 M988.8,760.4 L970.9,780.0 M1005.9,758.6 L988.6,779.4 M1021.7,755.8 L1005.7,777.6 M1035.6,751.9 L1021.4,774.8 M1046.9,747.2 L1035.2,770.9 M1055.4,741.9 L1046.5,766.2 M1060.6,736.0 L1055.0,760.9 M1062.3,730.0 L1060.1,755.0 M881.6,755.0 L880.1,768.0 M886.8,760.9 L881.8,774.0 M895.2,766.2 L887.0,779.9 M906.5,770.9 L895.4,785.2 M920.3,774.8 L906.6,789.9 M936.0,777.6 L920.4,793.8 M953.1,779.4 L936.1,796.6 M970.9,780.0 L953.1,798.4 M988.6,779.4 L970.8,799.0 M1005.7,777.6 L988.5,798.4 M1021.4,774.8 L1005.5,796.6 M1035.2,770.9 L1021.1,793.8 M1046.5,766.2 L1034.9,789.9 M1055.0,760.9 L1046.2,785.2 M1060.1,755.0 L1054.5,779.9 M1061.9,749.0 L1059.7,774.0 M881.8,774.0 L880.3,787.0 M887.0,779.9 L882.1,793.0 M895.4,785.2 L887.2,798.9 M906.6,789.9 L895.6,804.2 M920.4,793.8 L906.8,808.9 M936.1,796.6 L920.5,812.8 M953.1,798.4 L936.1,815.6 M970.8,799.0 L953.0,817.4 M988.5,798.4 L970.7,818.0 M1005.5,796.6 L988.3,817.4 M1021.1,793.8 L1005.2,815.6 M1034.9,789.9 L1020.8,812.8 M1046.2,785.2 L1034.5,808.9 M1054.5,779.9 L1045.8,804.2 M1059.7,774.0 L1054.1,798.9 M1061.4,768.0 L1059.2,793.0 M882.1,793.0 L880.6,806.0 M887.2,798.9 L882.3,812.0 M895.6,804.2 L887.4,817.9 M906.8,808.9 L895.8,823.2 M920.5,812.8 L906.9,827.9 M936.1,815.6 L920.6,831.8 M953.0,817.4 L936.1,834.6 M970.7,818.0 L953.0,836.4 M988.3,817.4 L970.6,837.0 M1005.2,815.6 L988.1,836.4 M1020.8,812.8 L1005.0,834.6 M1034.5,808.9 L1020.5,831.8 M1045.8,804.2 L1034.2,827.9 M1054.1,798.9 L1045.4,823.2 M1059.2,793.0 L1053.7,817.9 M1061.0,787.0 L1058.8,812.0 M882.3,812.0 L880.8,825.0 M887.4,817.9 L882.6,831.0 M895.8,823.2 L887.7,836.9 M906.9,827.9 L895.9,842.2 M920.6,831.8 L907.1,846.9 M936.1,834.6 L920.7,850.8 M953.0,836.4 L936.2,853.6 M970.6,837.0 L953.0,855.4 M988.1,836.4 L970.5,856.0 M1005.0,834.6 L987.9,855.4 M1020.5,831.8 L1004.8,853.6 M1034.2,827.9 L1020.3,850.8 M1045.4,823.2 L1033.8,846.9 M1053.7,817.9 L1045.0,842.2 M1058.8,812.0 L1053.3,836.9 M1060.5,806.0 L1058.4,831.0 M882.6,831.0 L881.1,844.0 M887.7,836.9 L882.8,850.0 M895.9,842.2 L887.9,855.9 M907.1,846.9 L896.1,861.2 M920.7,850.8 L907.2,865.9 M936.2,853.6 L920.8,869.8 M953.0,855.4 L936.2,872.6 M970.5,856.0 L952.9,874.4 M987.9,855.4 L970.4,875.0 M1004.8,853.6 L987.8,874.4 M1020.3,850.8 L1004.5,872.6 M1033.8,846.9 L1020.0,869.8 M1045.0,842.2 L1033.5,865.9 M1053.3,836.9 L1044.6,861.2 M1058.4,831.0 L1052.8,855.9 M1060.1,825.0 L1057.9,850.0 M882.8,850.0 L881.3,863.0 M887.9,855.9 L883.1,869.0 M896.1,861.2 L888.1,874.9 M907.2,865.9 L896.3,880.2 M920.8,869.8 L907.4,884.9 M936.2,872.6 L920.9,888.8 M952.9,874.4 L936.2,891.6 M970.4,875.0 L952.9,893.4 M987.8,874.4 L970.3,894.0 M1004.5,872.6 L987.6,893.4 M1020.0,869.8 L1004.3,891.6 M1033.5,865.9 L1019.7,888.8 M1044.6,861.2 L1033.1,884.9 M1052.8,855.9 L1044.2,880.2 M1057.9,850.0 L1052.4,874.9 M1059.6,844.0 L1057.5,869.0 M883.1,869.0 L881.6,882.0 M888.1,874.9 L883.3,888.0 M896.3,880.2 L888.3,893.9 M907.4,884.9 L896.5,899.2 M920.9,888.8 L907.5,903.9 M936.2,891.6 L921.0,907.8 M952.9,893.4 L936.3,910.6 M970.3,894.0 L952.9,912.4 M987.6,893.4 L970.2,913.0 M1004.3,891.6 L987.4,912.4 M1019.7,888.8 L1004.1,910.6 M1033.1,884.9 L1019.4,907.8 M1044.2,880.2 L1032.8,903.9 M1052.4,874.9 L1043.8,899.2 M1057.5,869.0 L1052.0,893.9 M1059.2,863.0 L1057.0,888.0 M883.3,888.0 L881.8,901.0 M888.3,893.9 L883.5,907.0 M896.5,899.2 L888.6,912.9 M907.5,903.9 L896.7,918.2 M921.0,907.8 L907.7,922.9 M936.3,910.6 L921.1,926.8 M952.9,912.4 L936.3,929.6 M970.2,913.0 L952.9,931.4 M987.4,912.4 L970.1,932.0 M1004.1,910.6 L987.3,931.4 M1019.4,907.8 L1003.8,929.6 M1032.8,903.9 L1019.1,926.8 M1043.8,899.2 L1032.4,922.9 M1052.0,893.9 L1043.4,918.2 M1057.0,888.0 L1051.6,912.9 M1058.7,882.0 L1056.6,907.0 M883.5,907.0 L882.1,920.0 M888.6,912.9 L883.8,926.0 M896.7,918.2 L888.8,931.9 M907.7,922.9 L896.9,937.2 M921.1,926.8 L907.8,941.9 M936.3,929.6 L921.1,945.8 M952.9,931.4 L936.3,948.6 M970.1,932.0 L952.8,950.4 M987.3,931.4 L970.0,951.0 M1003.8,929.6 L987.1,950.4 M1019.1,926.8 L1003.6,948.6 M1032.4,922.9 L1018.8,945.8 M1043.4,918.2 L1032.1,941.9 M1051.6,912.9 L1043.0,937.2 M1056.6,907.0 L1051.1,931.9 M1058.3,901.0 L1056.1,926.0" fill="none" stroke="#5e9a4c" stroke-width="0.8" opacity="0.45"/>
<path d="M877.6,533 L882.6,913 M1066.4,531 L1057.4,913" fill="none" stroke="#7a7e78" stroke-width="1.4" opacity="0.6"/>
</g></g>
<clipPath id="cRing"><path d="M882,900 A88,32 0 0 0 1058,900 L1058,913 A88,33 0 0 1 882,913 Z"/></clipPath>
<g clip-path="url(#cFront)"><g clip-path="url(#cRing)"><polygon points="882.0,890.0 882.0,950.0 896.1,950.0 896.1,890.0" fill="#766664" stroke="#766664" stroke-width="0.6"/>
<polygon points="896.1,890.0 896.1,950.0 915.4,950.0 915.4,890.0" fill="#7e6e6b" stroke="#7e6e6b" stroke-width="0.6"/>
<polygon points="915.4,890.0 915.4,950.0 940.1,950.0 940.1,890.0" fill="#867673" stroke="#867673" stroke-width="0.6"/>
<polygon points="940.1,890.0 940.1,950.0 998.2,950.0 998.2,890.0" fill="#8a7a76" stroke="#8a7a76" stroke-width="0.6"/>
<polygon points="998.2,890.0 998.2,950.0 1031.6,950.0 1031.6,890.0" fill="#877571" stroke="#877571" stroke-width="0.6"/>
<polygon points="1031.6,890.0 1031.6,950.0 1045.7,950.0 1045.7,890.0" fill="#7e6c69" stroke="#7e6c69" stroke-width="0.6"/>
<polygon points="1045.7,890.0 1045.7,950.0 1058.0,950.0 1058.0,890.0" fill="#766462" stroke="#766462" stroke-width="0.6"/></g></g>
<clipPath id="cSliver"><path d="M930,942 C960,950 1010,950 1046,921 L1046,890 L930,890 Z"/></clipPath>
<g clip-path="url(#cOut)"><g clip-path="url(#cSliver)"><rect x="930" y="890" width="120" height="60" fill="#80d060"/><path d="M962,940 L955,948 M982,936 L972,949 M1002,932 L990,949 M1022,927 L1010,946 M1040,923 L1028,940" stroke="#5aa848" stroke-width="0.8" opacity="0.7"/></g></g>
<ellipse cx="972" cy="533" rx="94.5" ry="31" fill="#729c64"/>
<path d="M1006.8,535.9 L997.7,541.2 L981.7,544.3 L963.1,544.4 L946.9,541.4 L937.4,536.2 L937.2,530.1 L946.3,524.8 L962.3,521.7 L980.9,521.6 L997.1,524.6 L1006.6,529.8 Z M1022.2,535.1 L1018.8,539.2 L1012.3,543.0 L1003.1,546.1 L991.7,548.3 L978.9,549.4 L965.7,549.5 L953.0,548.4 L941.5,546.2 L932.1,543.2 L925.4,539.5 L921.9,535.3 L921.8,530.9 L925.2,526.8 L931.7,523.0 L940.9,519.9 L952.3,517.7 L965.1,516.6 L978.3,516.5 L991.0,517.6 L1002.5,519.8 L1011.9,522.8 L1018.6,526.5 L1022.1,530.7 Z M1037.2,533.1 L1036.2,536.8 L1033.2,540.4 L1028.3,543.8 L1021.7,546.8 L1013.7,549.5 L1004.3,551.6 L994.0,553.1 L983.0,554.1 L971.7,554.4 L960.4,554.0 L949.4,553.1 L939.1,551.5 L929.8,549.3 L921.8,546.7 L915.4,543.6 L910.6,540.2 L907.7,536.6 L906.8,532.9 L907.8,529.2 L910.8,525.6 L915.7,522.2 L922.3,519.2 L930.3,516.5 L939.7,514.4 L950.0,512.9 L961.0,511.9 L972.3,511.6 L983.6,512.0 L994.6,512.9 L1004.9,514.5 L1014.2,516.7 L1022.2,519.3 L1028.6,522.4 L1033.4,525.8 L1036.3,529.4 Z M1051.9,533.1 L1051.1,536.6 L1049.0,539.9 L1045.6,543.2 L1040.9,546.2 L1035.1,549.1 L1028.1,551.6 L1020.3,553.9 L1011.5,555.8 L1002.1,557.3 L992.2,558.3 L982.0,559.0 L971.6,559.2 L961.1,559.0 L950.9,558.3 L941.0,557.1 L931.7,555.6 L923.0,553.7 L915.2,551.4 L908.4,548.8 L902.6,546.0 L898.1,542.9 L894.8,539.6 L892.8,536.3 L892.1,532.9 L892.9,529.4 L895.0,526.1 L898.4,522.8 L903.1,519.8 L908.9,516.9 L915.9,514.4 L923.7,512.1 L932.5,510.2 L941.9,508.7 L951.8,507.7 L962.0,507.0 L972.4,506.8 L982.9,507.0 L993.1,507.7 L1003.0,508.9 L1012.3,510.4 L1021.0,512.3 L1028.8,514.6 L1035.6,517.2 L1041.4,520.0 L1045.9,523.1 L1049.2,526.4 L1051.2,529.7 Z M1066.4,534.4 L1065.5,537.6 L1063.5,540.8 L1060.5,543.9 L1056.6,546.8 L1051.7,549.7 L1045.9,552.3 L1039.4,554.7 L1032.1,556.9 L1024.1,558.9 L1015.6,560.5 L1006.6,561.8 L997.2,562.9 L987.6,563.6 L977.8,563.9 L967.9,564.0 L958.0,563.7 L948.3,563.0 L938.9,562.0 L929.8,560.7 L921.2,559.1 L913.2,557.3 L905.8,555.1 L899.1,552.7 L893.2,550.1 L888.2,547.3 L884.1,544.4 L880.9,541.3 L878.8,538.1 L877.7,534.9 L877.6,531.6 L878.5,528.4 L880.5,525.2 L883.5,522.1 L887.4,519.2 L892.3,516.3 L898.1,513.7 L904.6,511.3 L911.9,509.1 L919.9,507.1 L928.4,505.5 L937.4,504.2 L946.8,503.1 L956.4,502.4 L966.2,502.1 L976.1,502.0 L986.0,502.3 L995.7,503.0 L1005.1,504.0 L1014.2,505.3 L1022.8,506.9 L1030.8,508.7 L1038.2,510.9 L1044.9,513.3 L1050.8,515.9 L1055.8,518.7 L1059.9,521.6 L1063.1,524.7 L1065.2,527.9 L1066.3,531.1 Z M1022.2,535.1 L1006.8,535.9 M1018.8,539.2 L1006.8,535.9 M1018.8,539.2 L997.7,541.2 M1012.3,543.0 L997.7,541.2 M1003.1,546.1 L981.7,544.3 M1003.1,546.1 L963.1,544.4 M991.7,548.3 L981.7,544.3 M978.9,549.4 L981.7,544.3 M978.9,549.4 L963.1,544.4 M965.7,549.5 L963.1,544.4 M953.0,548.4 L946.9,541.4 M953.0,548.4 L937.4,536.2 M941.5,546.2 L946.9,541.4 M932.1,543.2 L946.9,541.4 M932.1,543.2 L937.4,536.2 M925.4,539.5 L937.4,536.2 M921.9,535.3 L937.2,530.1 M921.9,535.3 L946.3,524.8 M921.8,530.9 L937.2,530.1 M925.2,526.8 L937.2,530.1 M925.2,526.8 L946.3,524.8 M931.7,523.0 L946.3,524.8 M940.9,519.9 L962.3,521.7 M940.9,519.9 L980.9,521.6 M952.3,517.7 L962.3,521.7 M965.1,516.6 L962.3,521.7 M965.1,516.6 L980.9,521.6 M978.3,516.5 L980.9,521.6 M991.0,517.6 L997.1,524.6 M991.0,517.6 L1006.6,529.8 M1002.5,519.8 L997.1,524.6 M1011.9,522.8 L997.1,524.6 M1011.9,522.8 L1006.6,529.8 M1018.6,526.5 L1006.6,529.8 M1022.1,530.7 L1006.8,535.9 M1022.1,530.7 L997.7,541.2 M1037.2,533.1 L1022.2,535.1 M1036.2,536.8 L1018.8,539.2 M1036.2,536.8 L1012.3,543.0 M1033.2,540.4 L1018.8,539.2 M1028.3,543.8 L1012.3,543.0 M1028.3,543.8 L1003.1,546.1 M1021.7,546.8 L1003.1,546.1 M1013.7,549.5 L1003.1,546.1 M1013.7,549.5 L991.7,548.3 M1004.3,551.6 L991.7,548.3 M994.0,553.1 L978.9,549.4 M994.0,553.1 L965.7,549.5 M983.0,554.1 L978.9,549.4 M971.7,554.4 L965.7,549.5 M971.7,554.4 L953.0,548.4 M960.4,554.0 L953.0,548.4 M949.4,553.1 L953.0,548.4 M949.4,553.1 L941.5,546.2 M939.1,551.5 L941.5,546.2 M929.8,549.3 L932.1,543.2 M929.8,549.3 L925.4,539.5 M921.8,546.7 L932.1,543.2 M915.4,543.6 L925.4,539.5 M915.4,543.6 L921.9,535.3 M910.6,540.2 L921.9,535.3 M907.7,536.6 L921.9,535.3 M907.7,536.6 L921.8,530.9 M906.8,532.9 L921.8,530.9 M907.8,529.2 L925.2,526.8 M907.8,529.2 L931.7,523.0 M910.8,525.6 L925.2,526.8 M915.7,522.2 L931.7,523.0 M915.7,522.2 L940.9,519.9 M922.3,519.2 L940.9,519.9 M930.3,516.5 L940.9,519.9 M930.3,516.5 L952.3,517.7 M939.7,514.4 L952.3,517.7 M950.0,512.9 L965.1,516.6 M950.0,512.9 L978.3,516.5 M961.0,511.9 L965.1,516.6 M972.3,511.6 L978.3,516.5 M972.3,511.6 L991.0,517.6 M983.6,512.0 L991.0,517.6 M994.6,512.9 L991.0,517.6 M994.6,512.9 L1002.5,519.8 M1004.9,514.5 L1002.5,519.8 M1014.2,516.7 L1011.9,522.8 M1014.2,516.7 L1018.6,526.5 M1022.2,519.3 L1011.9,522.8 M1028.6,522.4 L1018.6,526.5 M1028.6,522.4 L1022.1,530.7 M1033.4,525.8 L1022.1,530.7 M1036.3,529.4 L1022.1,530.7 M1036.3,529.4 L1022.2,535.1 M1051.9,533.1 L1037.2,533.1 M1051.1,536.6 L1036.2,536.8 M1051.1,536.6 L1033.2,540.4 M1049.0,539.9 L1033.2,540.4 M1045.6,543.2 L1033.2,540.4 M1045.6,543.2 L1028.3,543.8 M1040.9,546.2 L1028.3,543.8 M1035.1,549.1 L1021.7,546.8 M1035.1,549.1 L1013.7,549.5 M1028.1,551.6 L1021.7,546.8 M1020.3,553.9 L1013.7,549.5 M1020.3,553.9 L1004.3,551.6 M1011.5,555.8 L1004.3,551.6 M1002.1,557.3 L994.0,553.1 M1002.1,557.3 L983.0,554.1 M992.2,558.3 L983.0,554.1 M982.0,559.0 L983.0,554.1 M982.0,559.0 L971.7,554.4 M971.6,559.2 L971.7,554.4 M961.1,559.0 L960.4,554.0 M961.1,559.0 L949.4,553.1 M950.9,558.3 L960.4,554.0 M941.0,557.1 L949.4,553.1 M941.0,557.1 L939.1,551.5 M931.7,555.6 L939.1,551.5 M923.0,553.7 L929.8,549.3 M923.0,553.7 L921.8,546.7 M915.2,551.4 L921.8,546.7 M908.4,548.8 L921.8,546.7 M908.4,548.8 L915.4,543.6 M902.6,546.0 L915.4,543.6 M898.1,542.9 L910.6,540.2 M898.1,542.9 L907.7,536.6 M894.8,539.6 L910.6,540.2 M892.8,536.3 L907.7,536.6 M892.8,536.3 L906.8,532.9 M892.1,532.9 L906.8,532.9 M892.9,529.4 L907.8,529.2 M892.9,529.4 L910.8,525.6 M895.0,526.1 L910.8,525.6 M898.4,522.8 L910.8,525.6 M898.4,522.8 L915.7,522.2 M903.1,519.8 L915.7,522.2 M908.9,516.9 L922.3,519.2 M908.9,516.9 L930.3,516.5 M915.9,514.4 L922.3,519.2 M923.7,512.1 L930.3,516.5 M923.7,512.1 L939.7,514.4 M932.5,510.2 L939.7,514.4 M941.9,508.7 L950.0,512.9 M941.9,508.7 L961.0,511.9 M951.8,507.7 L961.0,511.9 M962.0,507.0 L961.0,511.9 M962.0,507.0 L972.3,511.6 M972.4,506.8 L972.3,511.6 M982.9,507.0 L983.6,512.0 M982.9,507.0 L994.6,512.9 M993.1,507.7 L983.6,512.0 M1003.0,508.9 L994.6,512.9 M1003.0,508.9 L1004.9,514.5 M1012.3,510.4 L1004.9,514.5 M1021.0,512.3 L1014.2,516.7 M1021.0,512.3 L1022.2,519.3 M1028.8,514.6 L1022.2,519.3 M1035.6,517.2 L1022.2,519.3 M1035.6,517.2 L1028.6,522.4 M1041.4,520.0 L1028.6,522.4 M1045.9,523.1 L1033.4,525.8 M1045.9,523.1 L1036.3,529.4 M1049.2,526.4 L1033.4,525.8 M1051.2,529.7 L1036.3,529.4 M1051.2,529.7 L1037.2,533.1 M1066.4,534.4 L1051.9,533.1 M1065.5,537.6 L1051.1,536.6 M1065.5,537.6 L1049.0,539.9 M1063.5,540.8 L1049.0,539.9 M1060.5,543.9 L1049.0,539.9 M1060.5,543.9 L1045.6,543.2 M1056.6,546.8 L1045.6,543.2 M1051.7,549.7 L1040.9,546.2 M1051.7,549.7 L1035.1,549.1 M1045.9,552.3 L1035.1,549.1 M1039.4,554.7 L1028.1,551.6 M1039.4,554.7 L1020.3,553.9 M1032.1,556.9 L1028.1,551.6 M1024.1,558.9 L1020.3,553.9 M1024.1,558.9 L1011.5,555.8 M1015.6,560.5 L1011.5,555.8 M1006.6,561.8 L1002.1,557.3 M1006.6,561.8 L992.2,558.3 M997.2,562.9 L992.2,558.3 M987.6,563.6 L992.2,558.3 M987.6,563.6 L982.0,559.0 M977.8,563.9 L982.0,559.0 M967.9,564.0 L971.6,559.2 M967.9,564.0 L961.1,559.0 M958.0,563.7 L961.1,559.0 M948.3,563.0 L950.9,558.3 M948.3,563.0 L941.0,557.1 M938.9,562.0 L950.9,558.3 M929.8,560.7 L941.0,557.1 M929.8,560.7 L931.7,555.6 M921.2,559.1 L931.7,555.6 M913.2,557.3 L923.0,553.7 M913.2,557.3 L915.2,551.4 M905.8,555.1 L915.2,551.4 M899.1,552.7 L915.2,551.4 M899.1,552.7 L908.4,548.8 M893.2,550.1 L908.4,548.8 M888.2,547.3 L902.6,546.0 M888.2,547.3 L898.1,542.9 M884.1,544.4 L898.1,542.9 M880.9,541.3 L894.8,539.6 M880.9,541.3 L892.8,536.3 M878.8,538.1 L894.8,539.6 M877.7,534.9 L892.8,536.3 M877.7,534.9 L892.1,532.9 M877.6,531.6 L892.1,532.9 M878.5,528.4 L892.9,529.4 M878.5,528.4 L895.0,526.1 M880.5,525.2 L895.0,526.1 M883.5,522.1 L895.0,526.1 M883.5,522.1 L898.4,522.8 M887.4,519.2 L898.4,522.8 M892.3,516.3 L903.1,519.8 M892.3,516.3 L908.9,516.9 M898.1,513.7 L908.9,516.9 M904.6,511.3 L915.9,514.4 M904.6,511.3 L923.7,512.1 M911.9,509.1 L915.9,514.4 M919.9,507.1 L923.7,512.1 M919.9,507.1 L932.5,510.2 M928.4,505.5 L932.5,510.2 M937.4,504.2 L941.9,508.7 M937.4,504.2 L951.8,507.7 M946.8,503.1 L951.8,507.7 M956.4,502.4 L951.8,507.7 M956.4,502.4 L962.0,507.0 M966.2,502.1 L962.0,507.0 M976.1,502.0 L972.4,506.8 M976.1,502.0 L982.9,507.0 M986.0,502.3 L982.9,507.0 M995.7,503.0 L993.1,507.7 M995.7,503.0 L1003.0,508.9 M1005.1,504.0 L993.1,507.7 M1014.2,505.3 L1003.0,508.9 M1014.2,505.3 L1012.3,510.4 M1022.8,506.9 L1012.3,510.4 M1030.8,508.7 L1021.0,512.3 M1030.8,508.7 L1028.8,514.6 M1038.2,510.9 L1028.8,514.6 M1044.9,513.3 L1028.8,514.6 M1044.9,513.3 L1035.6,517.2 M1050.8,515.9 L1035.6,517.2 M1055.8,518.7 L1041.4,520.0 M1055.8,518.7 L1045.9,523.1 M1059.9,521.6 L1045.9,523.1 M1063.1,524.7 L1049.2,526.4 M1063.1,524.7 L1051.2,529.7 M1065.2,527.9 L1049.2,526.4 M1066.3,531.1 L1051.2,529.7 M1066.3,531.1 L1051.9,533.1" fill="none" stroke="#a898a8" stroke-width="0.9" opacity="0.55"/>
<clipPath id="cPipeEnd"><path d="M663,54 H1361 V527 H663 Z"/><ellipse cx="972" cy="527" rx="37" ry="15"/></clipPath>
<g clip-path="url(#cPipeEnd)">
<g clip-path="url(#cPipeOut)"><polygon points="681.0,392.0 685.7,391.6 690.5,391.2 695.2,390.8 699.9,390.4 704.6,389.9 709.4,389.5 714.1,389.1 718.8,388.7 723.5,388.3 728.2,387.9 733.0,387.5 737.7,387.1 742.4,386.7 747.1,386.3 751.9,385.9 756.6,385.4 761.3,385.0 766.0,384.6 770.8,384.2 775.5,383.8 780.2,383.4 785.0,383.0 789.7,382.6 794.4,382.2 799.1,381.8 803.9,381.3 808.6,380.9 813.3,380.5 818.0,380.1 822.8,379.7 827.5,379.3 832.2,378.9 836.9,378.5 841.6,378.1 846.4,377.7 851.1,377.2 855.8,376.8 860.5,376.4 865.3,376.0 870.0,375.6 878.1,375.5 886.2,375.4 894.2,376.2 902.2,377.3 910.1,378.9 917.9,381.3 925.6,383.8 932.9,387.3 940.2,390.8 946.9,395.2 953.7,399.8 959.9,404.9 965.9,410.3 971.5,416.1 976.7,422.3 981.7,428.7 986.1,435.5 990.5,442.3 994.0,449.6 997.4,456.9 1000.3,464.5 1002.8,472.2 1005.1,479.9 1006.6,487.9 1008.1,495.8 1009.0,503.8 1009.5,511.9 1010.0,520.0 1010.0,523.8 1010.0,527.5 1010.0,531.2 1010.0,535.0 1010.0,538.8 1010.0,542.5 1010.0,546.2 1010.0,550.0 1002.1,550.0 1002.1,546.2 1002.1,542.5 1002.1,538.8 1002.1,535.0 1002.1,531.2 1002.1,527.5 1002.1,523.8 1002.1,520.0 1001.6,512.4 1001.2,504.9 1000.4,497.4 999.0,489.9 997.6,482.4 995.5,475.2 993.2,468.0 990.5,460.9 987.4,454.0 984.1,447.2 980.1,440.7 976.1,434.3 971.5,428.4 966.7,422.5 961.5,417.0 955.9,411.9 950.2,407.0 943.9,402.7 937.7,398.5 930.9,395.1 924.1,391.8 917.0,389.3 909.7,387.0 902.4,385.4 894.9,384.3 887.4,383.6 879.8,383.7 872.2,383.8 867.4,384.2 862.7,384.6 857.9,385.0 853.2,385.5 848.4,385.9 843.7,386.3 838.9,386.8 834.1,387.2 829.4,387.6 824.6,388.0 819.9,388.5 815.1,388.9 810.3,389.3 805.6,389.8 800.8,390.2 796.1,390.6 791.3,391.0 786.6,391.5 781.8,391.9 777.0,392.3 772.3,392.8 767.5,393.2 762.8,393.6 758.0,394.0 753.2,394.5 748.5,394.9 743.7,395.3 739.0,395.8 734.2,396.2 729.5,396.6 724.7,397.0 719.9,397.5 715.2,397.9 710.4,398.3 705.7,398.8 700.9,399.2 696.2,399.6 691.4,400.1 686.6,400.5 681.9,400.9" fill="#4b8a39" stroke="#4b8a39" stroke-width="0.6"/>
<polygon points="681.9,400.9 686.6,400.5 691.4,400.1 696.2,399.6 700.9,399.2 705.7,398.8 710.4,398.3 715.2,397.9 719.9,397.5 724.7,397.0 729.5,396.6 734.2,396.2 739.0,395.8 743.7,395.3 748.5,394.9 753.2,394.5 758.0,394.0 762.8,393.6 767.5,393.2 772.3,392.8 777.0,392.3 781.8,391.9 786.6,391.5 791.3,391.0 796.1,390.6 800.8,390.2 805.6,389.8 810.3,389.3 815.1,388.9 819.9,388.5 824.6,388.0 829.4,387.6 834.1,387.2 838.9,386.8 843.7,386.3 848.4,385.9 853.2,385.5 857.9,385.0 862.7,384.6 867.4,384.2 872.2,383.8 879.8,383.7 887.4,383.6 894.9,384.3 902.4,385.4 909.7,387.0 917.0,389.3 924.1,391.8 930.9,395.1 937.7,398.5 943.9,402.7 950.2,407.0 955.9,411.9 961.5,417.0 966.7,422.5 971.5,428.4 976.1,434.3 980.1,440.7 984.1,447.2 987.4,454.0 990.5,460.9 993.2,468.0 995.5,475.2 997.6,482.4 999.0,489.9 1000.4,497.4 1001.2,504.9 1001.6,512.4 1002.1,520.0 1002.1,523.8 1002.1,527.5 1002.1,531.2 1002.1,535.0 1002.1,538.8 1002.1,542.5 1002.1,546.2 1002.1,550.0 992.0,550.0 992.0,546.2 992.0,542.5 992.0,538.8 992.0,535.0 992.0,531.2 992.0,527.5 992.0,523.8 992.0,520.0 991.6,513.1 991.2,506.2 990.5,499.3 989.3,492.5 988.0,485.7 986.1,479.1 984.1,472.4 981.7,466.0 978.9,459.6 976.0,453.4 972.5,447.5 968.9,441.6 964.8,436.0 960.5,430.6 955.8,425.6 950.9,420.8 945.7,416.2 940.1,412.2 934.5,408.2 928.4,405.0 922.2,401.9 915.8,399.5 909.2,397.4 902.5,395.8 895.7,394.7 888.8,394.0 881.9,394.1 875.0,394.1 870.2,394.6 865.4,395.0 860.6,395.5 855.8,395.9 851.0,396.4 846.2,396.8 841.4,397.3 836.6,397.8 831.8,398.2 827.0,398.7 822.2,399.1 817.4,399.6 812.6,400.0 807.8,400.5 803.0,400.9 798.2,401.4 793.4,401.8 788.6,402.3 783.8,402.7 779.0,403.2 774.2,403.6 769.4,404.1 764.6,404.5 759.8,405.0 755.0,405.5 750.2,405.9 745.4,406.4 740.6,406.8 735.8,407.3 731.0,407.7 726.2,408.2 721.4,408.6 716.6,409.1 711.8,409.5 707.0,410.0 702.2,410.4 697.4,410.9 692.6,411.3 687.8,411.8 683.0,412.2" fill="#6abf4e" stroke="#6abf4e" stroke-width="0.6"/>
<polygon points="683.0,412.2 687.8,411.8 692.6,411.3 697.4,410.9 702.2,410.4 707.0,410.0 711.8,409.5 716.6,409.1 721.4,408.6 726.2,408.2 731.0,407.7 735.8,407.3 740.6,406.8 745.4,406.4 750.2,405.9 755.0,405.5 759.8,405.0 764.6,404.5 769.4,404.1 774.2,403.6 779.0,403.2 783.8,402.7 788.6,402.3 793.4,401.8 798.2,401.4 803.0,400.9 807.8,400.5 812.6,400.0 817.4,399.6 822.2,399.1 827.0,398.7 831.8,398.2 836.6,397.8 841.4,397.3 846.2,396.8 851.0,396.4 855.8,395.9 860.6,395.5 865.4,395.0 870.2,394.6 875.0,394.1 881.9,394.1 888.8,394.0 895.7,394.7 902.5,395.8 909.2,397.4 915.8,399.5 922.2,401.9 928.4,405.0 934.5,408.2 940.1,412.2 945.7,416.2 950.9,420.8 955.8,425.6 960.5,430.6 964.8,436.0 968.9,441.6 972.5,447.5 976.0,453.4 978.9,459.6 981.7,466.0 984.1,472.4 986.1,479.1 988.0,485.7 989.3,492.5 990.5,499.3 991.2,506.2 991.6,513.1 992.0,520.0 992.0,523.8 992.0,527.5 992.0,531.2 992.0,535.0 992.0,538.8 992.0,542.5 992.0,546.2 992.0,550.0 977.6,550.0 977.6,546.2 977.6,542.5 977.6,538.8 977.6,535.0 977.6,531.2 977.6,527.5 977.6,523.8 977.6,520.0 977.3,514.0 976.9,508.1 976.4,502.1 975.4,496.2 974.3,490.3 972.8,484.6 971.1,478.8 969.2,473.2 966.9,467.7 964.5,462.2 961.6,457.0 958.6,451.9 955.2,447.0 951.7,442.2 947.8,437.7 943.7,433.5 939.4,429.4 934.7,425.7 929.9,422.2 924.8,419.2 919.6,416.3 914.1,414.1 908.5,412.1 902.8,410.6 896.9,409.6 891.0,408.9 885.0,408.9 879.0,408.9 874.1,409.4 869.3,409.9 864.4,410.4 859.6,410.9 854.7,411.4 849.8,411.9 845.0,412.4 840.1,412.8 835.3,413.3 830.4,413.8 825.5,414.3 820.7,414.8 815.8,415.3 811.0,415.8 806.1,416.3 801.2,416.7 796.4,417.2 791.5,417.7 786.7,418.2 781.8,418.7 776.9,419.2 772.1,419.7 767.2,420.2 762.4,420.6 757.5,421.1 752.6,421.6 747.8,422.1 742.9,422.6 738.1,423.1 733.2,423.6 728.3,424.1 723.5,424.5 718.6,425.0 713.8,425.5 708.9,426.0 704.0,426.5 699.2,427.0 694.3,427.5 689.5,428.0 684.6,428.4" fill="#78cf58" stroke="#78cf58" stroke-width="0.6"/>
<polygon points="684.6,428.4 689.5,428.0 694.3,427.5 699.2,427.0 704.0,426.5 708.9,426.0 713.8,425.5 718.6,425.0 723.5,424.5 728.3,424.1 733.2,423.6 738.1,423.1 742.9,422.6 747.8,422.1 752.6,421.6 757.5,421.1 762.4,420.6 767.2,420.2 772.1,419.7 776.9,419.2 781.8,418.7 786.7,418.2 791.5,417.7 796.4,417.2 801.2,416.7 806.1,416.3 811.0,415.8 815.8,415.3 820.7,414.8 825.5,414.3 830.4,413.8 835.3,413.3 840.1,412.8 845.0,412.4 849.8,411.9 854.7,411.4 859.6,410.9 864.4,410.4 869.3,409.9 874.1,409.4 879.0,408.9 885.0,408.9 891.0,408.9 896.9,409.6 902.8,410.6 908.5,412.1 914.1,414.1 919.6,416.3 924.8,419.2 929.9,422.2 934.7,425.7 939.4,429.4 943.7,433.5 947.8,437.7 951.7,442.2 955.2,447.0 958.6,451.9 961.6,457.0 964.5,462.2 966.9,467.7 969.2,473.2 971.1,478.8 972.8,484.6 974.3,490.3 975.4,496.2 976.4,502.1 976.9,508.1 977.3,514.0 977.6,520.0 977.6,523.8 977.6,527.5 977.6,531.2 977.6,535.0 977.6,538.8 977.6,542.5 977.6,546.2 977.6,550.0 963.2,550.0 963.2,546.2 963.2,542.5 963.2,538.8 963.2,535.0 963.2,531.2 963.2,527.5 963.2,523.8 963.2,520.0 962.9,515.0 962.7,509.9 962.3,504.9 961.4,499.9 960.6,495.0 959.5,490.1 958.1,485.2 956.6,480.4 954.9,475.7 952.9,471.1 950.7,466.6 948.3,462.2 945.7,458.0 942.9,453.8 939.8,449.9 936.5,446.1 933.0,442.6 929.3,439.3 925.4,436.1 921.2,433.4 916.9,430.8 912.4,428.7 907.8,426.8 903.0,425.4 898.0,424.4 893.1,423.7 888.0,423.7 883.0,423.8 878.1,424.3 873.2,424.8 868.2,425.3 863.3,425.9 858.4,426.4 853.5,426.9 848.6,427.4 843.6,427.9 838.7,428.5 833.8,429.0 828.9,429.5 824.0,430.0 819.0,430.6 814.1,431.1 809.2,431.6 804.3,432.1 799.4,432.6 794.4,433.2 789.5,433.7 784.6,434.2 779.7,434.7 774.8,435.3 769.8,435.8 764.9,436.3 760.0,436.8 755.1,437.3 750.2,437.9 745.2,438.4 740.3,438.9 735.4,439.4 730.5,440.0 725.6,440.5 720.6,441.0 715.7,441.5 710.8,442.0 705.9,442.6 701.0,443.1 696.0,443.6 691.1,444.1 686.2,444.6" fill="#74ca55" stroke="#74ca55" stroke-width="0.6"/>
<polygon points="686.2,444.6 691.1,444.1 696.0,443.6 701.0,443.1 705.9,442.6 710.8,442.0 715.7,441.5 720.6,441.0 725.6,440.5 730.5,440.0 735.4,439.4 740.3,438.9 745.2,438.4 750.2,437.9 755.1,437.3 760.0,436.8 764.9,436.3 769.8,435.8 774.8,435.3 779.7,434.7 784.6,434.2 789.5,433.7 794.4,433.2 799.4,432.6 804.3,432.1 809.2,431.6 814.1,431.1 819.0,430.6 824.0,430.0 828.9,429.5 833.8,429.0 838.7,428.5 843.6,427.9 848.6,427.4 853.5,426.9 858.4,426.4 863.3,425.9 868.2,425.3 873.2,424.8 878.1,424.3 883.0,423.8 888.0,423.7 893.1,423.7 898.0,424.4 903.0,425.4 907.8,426.8 912.4,428.7 916.9,430.8 921.2,433.4 925.4,436.1 929.3,439.3 933.0,442.6 936.5,446.1 939.8,449.9 942.9,453.8 945.7,458.0 948.3,462.2 950.7,466.6 952.9,471.1 954.9,475.7 956.6,480.4 958.1,485.2 959.5,490.1 960.6,495.0 961.4,499.9 962.3,504.9 962.7,509.9 962.9,515.0 963.2,520.0 963.2,523.8 963.2,527.5 963.2,531.2 963.2,535.0 963.2,538.8 963.2,542.5 963.2,546.2 963.2,550.0 951.0,550.0 951.0,546.2 951.0,542.5 951.0,538.8 951.0,535.0 951.0,531.2 951.0,527.5 951.0,523.8 951.0,520.0 950.7,515.8 950.5,511.5 950.3,507.3 949.6,503.1 949.0,498.9 948.2,494.8 947.1,490.7 946.0,486.6 944.6,482.6 943.1,478.6 941.5,474.8 939.6,471.0 937.5,467.3 935.4,463.7 932.9,460.3 930.4,456.9 927.6,453.8 924.7,450.8 921.5,448.0 918.2,445.4 914.7,443.1 911.0,441.1 907.1,439.4 903.2,438.0 899.0,437.1 894.9,436.4 890.6,436.3 886.4,436.4 881.4,436.9 876.5,437.5 871.5,438.0 866.5,438.6 861.5,439.1 856.6,439.7 851.6,440.2 846.6,440.8 841.7,441.3 836.7,441.9 831.7,442.4 826.7,443.0 821.8,443.5 816.8,444.1 811.8,444.6 806.9,445.2 801.9,445.7 796.9,446.3 792.0,446.8 787.0,447.4 782.0,447.9 777.0,448.5 772.1,449.0 767.1,449.6 762.1,450.1 757.2,450.7 752.2,451.3 747.2,451.8 742.2,452.4 737.3,452.9 732.3,453.5 727.3,454.0 722.4,454.6 717.4,455.1 712.4,455.7 707.4,456.2 702.5,456.8 697.5,457.3 692.5,457.9 687.6,458.4" fill="#62ae47" stroke="#62ae47" stroke-width="0.6"/>
<polygon points="687.6,458.4 692.5,457.9 697.5,457.3 702.5,456.8 707.4,456.2 712.4,455.7 717.4,455.1 722.4,454.6 727.3,454.0 732.3,453.5 737.3,452.9 742.2,452.4 747.2,451.8 752.2,451.3 757.2,450.7 762.1,450.1 767.1,449.6 772.1,449.0 777.0,448.5 782.0,447.9 787.0,447.4 792.0,446.8 796.9,446.3 801.9,445.7 806.9,445.2 811.8,444.6 816.8,444.1 821.8,443.5 826.7,443.0 831.7,442.4 836.7,441.9 841.7,441.3 846.6,440.8 851.6,440.2 856.6,439.7 861.5,439.1 866.5,438.6 871.5,438.0 876.5,437.5 881.4,436.9 886.4,436.4 890.6,436.3 894.9,436.4 899.0,437.1 903.2,438.0 907.1,439.4 911.0,441.1 914.7,443.1 918.2,445.4 921.5,448.0 924.7,450.8 927.6,453.8 930.4,456.9 932.9,460.3 935.4,463.7 937.5,467.3 939.6,471.0 941.5,474.8 943.1,478.6 944.6,482.6 946.0,486.6 947.1,490.7 948.2,494.8 949.0,498.9 949.6,503.1 950.3,507.3 950.5,511.5 950.7,515.8 951.0,520.0 951.0,523.8 951.0,527.5 951.0,531.2 951.0,535.0 951.0,538.8 951.0,542.5 951.0,546.2 951.0,550.0 938.0,550.0 938.0,546.2 938.0,542.5 938.0,538.8 938.0,535.0 938.0,531.2 938.0,527.5 938.0,523.8 938.0,520.0 937.9,516.6 937.7,513.2 937.6,509.8 937.1,506.5 936.7,503.1 936.2,499.7 935.4,496.4 934.7,493.1 933.8,489.8 932.7,486.6 931.7,483.4 930.3,480.3 928.9,477.2 927.5,474.1 925.7,471.2 924.0,468.3 921.9,465.6 919.8,463.0 917.4,460.5 915.0,458.2 912.3,456.1 909.5,454.2 906.5,452.6 903.4,451.3 900.1,450.4 896.8,449.7 893.4,449.7 890.0,449.7 885.0,450.3 880.0,450.9 874.9,451.4 869.9,452.0 864.9,452.6 859.8,453.2 854.8,453.8 849.8,454.4 844.8,454.9 839.8,455.5 834.7,456.1 829.7,456.7 824.7,457.3 819.6,457.9 814.6,458.4 809.6,459.0 804.6,459.6 799.5,460.2 794.5,460.8 789.5,461.4 784.5,461.9 779.5,462.5 774.4,463.1 769.4,463.7 764.4,464.3 759.4,464.8 754.3,465.4 749.3,466.0 744.3,466.6 739.2,467.2 734.2,467.8 729.2,468.3 724.2,468.9 719.1,469.5 714.1,470.1 709.1,470.7 704.1,471.3 699.0,471.8 694.0,472.4 689.0,473.0" fill="#4d8a39" stroke="#4d8a39" stroke-width="0.6"/><path d="M681.0,392.0 L681.9,400.9 L683.0,412.2 L684.6,428.4 L686.2,444.6 L687.6,458.4 L689.0,473.0 M699.9,390.4 L700.9,399.2 L702.2,410.4 L704.0,426.5 L705.9,442.6 L707.4,456.2 L709.1,470.7 M718.8,388.7 L719.9,397.5 L721.4,408.6 L723.5,424.5 L725.6,440.5 L727.3,454.0 L729.2,468.3 M737.7,387.1 L739.0,395.8 L740.6,406.8 L742.9,422.6 L745.2,438.4 L747.2,451.8 L749.3,466.0 M756.6,385.4 L758.0,394.0 L759.8,405.0 L762.4,420.6 L764.9,436.3 L767.1,449.6 L769.4,463.7 M775.5,383.8 L777.0,392.3 L779.0,403.2 L781.8,418.7 L784.6,434.2 L787.0,447.4 L789.5,461.4 M794.4,382.2 L796.1,390.6 L798.2,401.4 L801.2,416.7 L804.3,432.1 L806.9,445.2 L809.6,459.0 M813.3,380.5 L815.1,388.9 L817.4,399.6 L820.7,414.8 L824.0,430.0 L826.7,443.0 L829.7,456.7 M832.2,378.9 L834.1,387.2 L836.6,397.8 L840.1,412.8 L843.6,427.9 L846.6,440.8 L849.8,454.4 M851.1,377.2 L853.2,385.5 L855.8,395.9 L859.6,410.9 L863.3,425.9 L866.5,438.6 L869.9,452.0 M870.0,375.6 L872.2,383.8 L875.0,394.1 L879.0,408.9 L883.0,423.8 L886.4,436.4 L890.0,449.7 M902.2,377.3 L902.4,385.4 L902.5,395.8 L902.8,410.6 L903.0,425.4 L903.2,438.0 L903.4,451.3 M932.9,387.3 L930.9,395.1 L928.4,405.0 L924.8,419.2 L921.2,433.4 L918.2,445.4 L915.0,458.2 M959.9,404.9 L955.9,411.9 L950.9,420.8 L943.7,433.5 L936.5,446.1 L930.4,456.9 L924.0,468.3 M981.7,428.7 L976.1,434.3 L968.9,441.6 L958.6,451.9 L948.3,462.2 L939.6,471.0 L930.3,480.3 M997.4,456.9 L990.5,460.9 L981.7,466.0 L969.2,473.2 L956.6,480.4 L946.0,486.6 L934.7,493.1 M1006.6,487.9 L999.0,489.9 L989.3,492.5 L975.4,496.2 L961.4,499.9 L949.6,503.1 L937.1,506.5 M1010.0,520.0 L1002.1,520.0 L992.0,520.0 L977.6,520.0 L963.2,520.0 L951.0,520.0 L938.0,520.0 M1010.0,535.0 L1002.1,535.0 L992.0,535.0 L977.6,535.0 L963.2,535.0 L951.0,535.0 L938.0,535.0 M1010.0,550.0 L1002.1,550.0 L992.0,550.0 L977.6,550.0 L963.2,550.0 L951.0,550.0 L938.0,550.0 M681.0,392.0 L699.9,390.4 L718.8,388.7 L737.7,387.1 L756.6,385.4 L775.5,383.8 L794.4,382.2 L813.3,380.5 L832.2,378.9 L851.1,377.2 L870.0,375.6 L902.2,377.3 L932.9,387.3 L959.9,404.9 L981.7,428.7 L997.4,456.9 L1006.6,487.9 L1010.0,520.0 L1010.0,535.0 L1010.0,550.0 M681.9,400.9 L700.9,399.2 L719.9,397.5 L739.0,395.8 L758.0,394.0 L777.0,392.3 L796.1,390.6 L815.1,388.9 L834.1,387.2 L853.2,385.5 L872.2,383.8 L902.4,385.4 L930.9,395.1 L955.9,411.9 L976.1,434.3 L990.5,460.9 L999.0,489.9 L1002.1,520.0 L1002.1,535.0 L1002.1,550.0 M683.0,412.2 L702.2,410.4 L721.4,408.6 L740.6,406.8 L759.8,405.0 L779.0,403.2 L798.2,401.4 L817.4,399.6 L836.6,397.8 L855.8,395.9 L875.0,394.1 L902.5,395.8 L928.4,405.0 L950.9,420.8 L968.9,441.6 L981.7,466.0 L989.3,492.5 L992.0,520.0 L992.0,535.0 L992.0,550.0 M684.6,428.4 L704.0,426.5 L723.5,424.5 L742.9,422.6 L762.4,420.6 L781.8,418.7 L801.2,416.7 L820.7,414.8 L840.1,412.8 L859.6,410.9 L879.0,408.9 L902.8,410.6 L924.8,419.2 L943.7,433.5 L958.6,451.9 L969.2,473.2 L975.4,496.2 L977.6,520.0 L977.6,535.0 L977.6,550.0 M686.2,444.6 L705.9,442.6 L725.6,440.5 L745.2,438.4 L764.9,436.3 L784.6,434.2 L804.3,432.1 L824.0,430.0 L843.6,427.9 L863.3,425.9 L883.0,423.8 L903.0,425.4 L921.2,433.4 L936.5,446.1 L948.3,462.2 L956.6,480.4 L961.4,499.9 L963.2,520.0 L963.2,535.0 L963.2,550.0 M687.6,458.4 L707.4,456.2 L727.3,454.0 L747.2,451.8 L767.1,449.6 L787.0,447.4 L806.9,445.2 L826.7,443.0 L846.6,440.8 L866.5,438.6 L886.4,436.4 L903.2,438.0 L918.2,445.4 L930.4,456.9 L939.6,471.0 L946.0,486.6 L949.6,503.1 L951.0,520.0 L951.0,535.0 L951.0,550.0 M689.0,473.0 L709.1,470.7 L729.2,468.3 L749.3,466.0 L769.4,463.7 L789.5,461.4 L809.6,459.0 L829.7,456.7 L849.8,454.4 L869.9,452.0 L890.0,449.7 L903.4,451.3 L915.0,458.2 L924.0,468.3 L930.3,480.3 L934.7,493.1 L937.1,506.5 L938.0,520.0 L938.0,535.0 L938.0,550.0" fill="none" stroke="#50a040" stroke-width="0.8" opacity="0.45"/><path d="M681.9,400.9 L699.9,390.4 M683.0,412.2 L700.9,399.2 M684.6,428.4 L702.2,410.4 M686.2,444.6 L704.0,426.5 M687.6,458.4 L705.9,442.6 M689.0,473.0 L707.4,456.2 M700.9,399.2 L718.8,388.7 M702.2,410.4 L719.9,397.5 M704.0,426.5 L721.4,408.6 M705.9,442.6 L723.5,424.5 M707.4,456.2 L725.6,440.5 M709.1,470.7 L727.3,454.0 M719.9,397.5 L737.7,387.1 M721.4,408.6 L739.0,395.8 M723.5,424.5 L740.6,406.8 M725.6,440.5 L742.9,422.6 M727.3,454.0 L745.2,438.4 M729.2,468.3 L747.2,451.8 M739.0,395.8 L756.6,385.4 M740.6,406.8 L758.0,394.0 M742.9,422.6 L759.8,405.0 M745.2,438.4 L762.4,420.6 M747.2,451.8 L764.9,436.3 M749.3,466.0 L767.1,449.6 M758.0,394.0 L775.5,383.8 M759.8,405.0 L777.0,392.3 M762.4,420.6 L779.0,403.2 M764.9,436.3 L781.8,418.7 M767.1,449.6 L784.6,434.2 M769.4,463.7 L787.0,447.4 M777.0,392.3 L794.4,382.2 M779.0,403.2 L796.1,390.6 M781.8,418.7 L798.2,401.4 M784.6,434.2 L801.2,416.7 M787.0,447.4 L804.3,432.1 M789.5,461.4 L806.9,445.2 M796.1,390.6 L813.3,380.5 M798.2,401.4 L815.1,388.9 M801.2,416.7 L817.4,399.6 M804.3,432.1 L820.7,414.8 M806.9,445.2 L824.0,430.0 M809.6,459.0 L826.7,443.0 M815.1,388.9 L832.2,378.9 M817.4,399.6 L834.1,387.2 M820.7,414.8 L836.6,397.8 M824.0,430.0 L840.1,412.8 M826.7,443.0 L843.6,427.9 M829.7,456.7 L846.6,440.8 M834.1,387.2 L851.1,377.2 M836.6,397.8 L853.2,385.5 M840.1,412.8 L855.8,395.9 M843.6,427.9 L859.6,410.9 M846.6,440.8 L863.3,425.9 M849.8,454.4 L866.5,438.6 M853.2,385.5 L870.0,375.6 M855.8,395.9 L872.2,383.8 M859.6,410.9 L875.0,394.1 M863.3,425.9 L879.0,408.9 M866.5,438.6 L883.0,423.8 M869.9,452.0 L886.4,436.4 M872.2,383.8 L902.2,377.3 M875.0,394.1 L902.4,385.4 M879.0,408.9 L902.5,395.8 M883.0,423.8 L902.8,410.6 M886.4,436.4 L903.0,425.4 M890.0,449.7 L903.2,438.0 M902.4,385.4 L932.9,387.3 M902.5,395.8 L930.9,395.1 M902.8,410.6 L928.4,405.0 M903.0,425.4 L924.8,419.2 M903.2,438.0 L921.2,433.4 M903.4,451.3 L918.2,445.4 M930.9,395.1 L959.9,404.9 M928.4,405.0 L955.9,411.9 M924.8,419.2 L950.9,420.8 M921.2,433.4 L943.7,433.5 M918.2,445.4 L936.5,446.1 M915.0,458.2 L930.4,456.9 M955.9,411.9 L981.7,428.7 M950.9,420.8 L976.1,434.3 M943.7,433.5 L968.9,441.6 M936.5,446.1 L958.6,451.9 M930.4,456.9 L948.3,462.2 M924.0,468.3 L939.6,471.0 M976.1,434.3 L997.4,456.9 M968.9,441.6 L990.5,460.9 M958.6,451.9 L981.7,466.0 M948.3,462.2 L969.2,473.2 M939.6,471.0 L956.6,480.4 M930.3,480.3 L946.0,486.6 M990.5,460.9 L1006.6,487.9 M981.7,466.0 L999.0,489.9 M969.2,473.2 L989.3,492.5 M956.6,480.4 L975.4,496.2 M946.0,486.6 L961.4,499.9 M934.7,493.1 L949.6,503.1 M999.0,489.9 L1010.0,520.0 M989.3,492.5 L1002.1,520.0 M975.4,496.2 L992.0,520.0 M961.4,499.9 L977.6,520.0 M949.6,503.1 L963.2,520.0 M937.1,506.5 L951.0,520.0 M1002.1,520.0 L1010.0,535.0 M992.0,520.0 L1002.1,535.0 M977.6,520.0 L992.0,535.0 M963.2,520.0 L977.6,535.0 M951.0,520.0 L963.2,535.0 M938.0,520.0 L951.0,535.0 M1002.1,535.0 L1010.0,550.0 M992.0,535.0 L1002.1,550.0 M977.6,535.0 L992.0,550.0 M963.2,535.0 L977.6,550.0 M951.0,535.0 L963.2,550.0 M938.0,535.0 L951.0,550.0" fill="none" stroke="#50a040" stroke-width="0.8" opacity="0.45"/></g>
<g clip-path="url(#cPipeLeft)"><g clip-path="url(#cLeft)"><polygon points="681.0,392.0 685.7,391.6 690.5,391.2 695.2,390.8 699.9,390.4 704.6,389.9 709.4,389.5 714.1,389.1 718.8,388.7 723.5,388.3 728.2,387.9 733.0,387.5 737.7,387.1 742.4,386.7 747.1,386.3 751.9,385.9 756.6,385.4 761.3,385.0 766.0,384.6 770.8,384.2 775.5,383.8 780.2,383.4 785.0,383.0 789.7,382.6 794.4,382.2 799.1,381.8 803.9,381.3 808.6,380.9 813.3,380.5 818.0,380.1 822.8,379.7 827.5,379.3 832.2,378.9 836.9,378.5 841.6,378.1 846.4,377.7 851.1,377.2 855.8,376.8 860.5,376.4 865.3,376.0 870.0,375.6 878.1,375.5 886.2,375.4 894.2,376.2 902.2,377.3 910.1,378.9 917.9,381.3 925.6,383.8 932.9,387.3 940.2,390.8 946.9,395.2 953.7,399.8 959.9,404.9 965.9,410.3 971.5,416.1 976.7,422.3 981.7,428.7 986.1,435.5 990.5,442.3 994.0,449.6 997.4,456.9 1000.3,464.5 1002.8,472.2 1005.1,479.9 1006.6,487.9 1008.1,495.8 1009.0,503.8 1009.5,511.9 1010.0,520.0 1010.0,523.8 1010.0,527.5 1010.0,531.2 1010.0,535.0 1010.0,538.8 1010.0,542.5 1010.0,546.2 1010.0,550.0 1002.1,550.0 1002.1,546.2 1002.1,542.5 1002.1,538.8 1002.1,535.0 1002.1,531.2 1002.1,527.5 1002.1,523.8 1002.1,520.0 1001.6,512.4 1001.2,504.9 1000.4,497.4 999.0,489.9 997.6,482.4 995.5,475.2 993.2,468.0 990.5,460.9 987.4,454.0 984.1,447.2 980.1,440.7 976.1,434.3 971.5,428.4 966.7,422.5 961.5,417.0 955.9,411.9 950.2,407.0 943.9,402.7 937.7,398.5 930.9,395.1 924.1,391.8 917.0,389.3 909.7,387.0 902.4,385.4 894.9,384.3 887.4,383.6 879.8,383.7 872.2,383.8 867.4,384.2 862.7,384.6 857.9,385.0 853.2,385.5 848.4,385.9 843.7,386.3 838.9,386.8 834.1,387.2 829.4,387.6 824.6,388.0 819.9,388.5 815.1,388.9 810.3,389.3 805.6,389.8 800.8,390.2 796.1,390.6 791.3,391.0 786.6,391.5 781.8,391.9 777.0,392.3 772.3,392.8 767.5,393.2 762.8,393.6 758.0,394.0 753.2,394.5 748.5,394.9 743.7,395.3 739.0,395.8 734.2,396.2 729.5,396.6 724.7,397.0 719.9,397.5 715.2,397.9 710.4,398.3 705.7,398.8 700.9,399.2 696.2,399.6 691.4,400.1 686.6,400.5 681.9,400.9" fill="#566a22" stroke="#566a22" stroke-width="0.6"/>
<polygon points="681.9,400.9 686.6,400.5 691.4,400.1 696.2,399.6 700.9,399.2 705.7,398.8 710.4,398.3 715.2,397.9 719.9,397.5 724.7,397.0 729.5,396.6 734.2,396.2 739.0,395.8 743.7,395.3 748.5,394.9 753.2,394.5 758.0,394.0 762.8,393.6 767.5,393.2 772.3,392.8 777.0,392.3 781.8,391.9 786.6,391.5 791.3,391.0 796.1,390.6 800.8,390.2 805.6,389.8 810.3,389.3 815.1,388.9 819.9,388.5 824.6,388.0 829.4,387.6 834.1,387.2 838.9,386.8 843.7,386.3 848.4,385.9 853.2,385.5 857.9,385.0 862.7,384.6 867.4,384.2 872.2,383.8 879.8,383.7 887.4,383.6 894.9,384.3 902.4,385.4 909.7,387.0 917.0,389.3 924.1,391.8 930.9,395.1 937.7,398.5 943.9,402.7 950.2,407.0 955.9,411.9 961.5,417.0 966.7,422.5 971.5,428.4 976.1,434.3 980.1,440.7 984.1,447.2 987.4,454.0 990.5,460.9 993.2,468.0 995.5,475.2 997.6,482.4 999.0,489.9 1000.4,497.4 1001.2,504.9 1001.6,512.4 1002.1,520.0 1002.1,523.8 1002.1,527.5 1002.1,531.2 1002.1,535.0 1002.1,538.8 1002.1,542.5 1002.1,546.2 1002.1,550.0 992.0,550.0 992.0,546.2 992.0,542.5 992.0,538.8 992.0,535.0 992.0,531.2 992.0,527.5 992.0,523.8 992.0,520.0 991.6,513.1 991.2,506.2 990.5,499.3 989.3,492.5 988.0,485.7 986.1,479.1 984.1,472.4 981.7,466.0 978.9,459.6 976.0,453.4 972.5,447.5 968.9,441.6 964.8,436.0 960.5,430.6 955.8,425.6 950.9,420.8 945.7,416.2 940.1,412.2 934.5,408.2 928.4,405.0 922.2,401.9 915.8,399.5 909.2,397.4 902.5,395.8 895.7,394.7 888.8,394.0 881.9,394.1 875.0,394.1 870.2,394.6 865.4,395.0 860.6,395.5 855.8,395.9 851.0,396.4 846.2,396.8 841.4,397.3 836.6,397.8 831.8,398.2 827.0,398.7 822.2,399.1 817.4,399.6 812.6,400.0 807.8,400.5 803.0,400.9 798.2,401.4 793.4,401.8 788.6,402.3 783.8,402.7 779.0,403.2 774.2,403.6 769.4,404.1 764.6,404.5 759.8,405.0 755.0,405.5 750.2,405.9 745.4,406.4 740.6,406.8 735.8,407.3 731.0,407.7 726.2,408.2 721.4,408.6 716.6,409.1 711.8,409.5 707.0,410.0 702.2,410.4 697.4,410.9 692.6,411.3 687.8,411.8 683.0,412.2" fill="#5b7a1e" stroke="#5b7a1e" stroke-width="0.6"/>
<polygon points="683.0,412.2 687.8,411.8 692.6,411.3 697.4,410.9 702.2,410.4 707.0,410.0 711.8,409.5 716.6,409.1 721.4,408.6 726.2,408.2 731.0,407.7 735.8,407.3 740.6,406.8 745.4,406.4 750.2,405.9 755.0,405.5 759.8,405.0 764.6,404.5 769.4,404.1 774.2,403.6 779.0,403.2 783.8,402.7 788.6,402.3 793.4,401.8 798.2,401.4 803.0,400.9 807.8,400.5 812.6,400.0 817.4,399.6 822.2,399.1 827.0,398.7 831.8,398.2 836.6,397.8 841.4,397.3 846.2,396.8 851.0,396.4 855.8,395.9 860.6,395.5 865.4,395.0 870.2,394.6 875.0,394.1 881.9,394.1 888.8,394.0 895.7,394.7 902.5,395.8 909.2,397.4 915.8,399.5 922.2,401.9 928.4,405.0 934.5,408.2 940.1,412.2 945.7,416.2 950.9,420.8 955.8,425.6 960.5,430.6 964.8,436.0 968.9,441.6 972.5,447.5 976.0,453.4 978.9,459.6 981.7,466.0 984.1,472.4 986.1,479.1 988.0,485.7 989.3,492.5 990.5,499.3 991.2,506.2 991.6,513.1 992.0,520.0 992.0,523.8 992.0,527.5 992.0,531.2 992.0,535.0 992.0,538.8 992.0,542.5 992.0,546.2 992.0,550.0 977.6,550.0 977.6,546.2 977.6,542.5 977.6,538.8 977.6,535.0 977.6,531.2 977.6,527.5 977.6,523.8 977.6,520.0 977.3,514.0 976.9,508.1 976.4,502.1 975.4,496.2 974.3,490.3 972.8,484.6 971.1,478.8 969.2,473.2 966.9,467.7 964.5,462.2 961.6,457.0 958.6,451.9 955.2,447.0 951.7,442.2 947.8,437.7 943.7,433.5 939.4,429.4 934.7,425.7 929.9,422.2 924.8,419.2 919.6,416.3 914.1,414.1 908.5,412.1 902.8,410.6 896.9,409.6 891.0,408.9 885.0,408.9 879.0,408.9 874.1,409.4 869.3,409.9 864.4,410.4 859.6,410.9 854.7,411.4 849.8,411.9 845.0,412.4 840.1,412.8 835.3,413.3 830.4,413.8 825.5,414.3 820.7,414.8 815.8,415.3 811.0,415.8 806.1,416.3 801.2,416.7 796.4,417.2 791.5,417.7 786.7,418.2 781.8,418.7 776.9,419.2 772.1,419.7 767.2,420.2 762.4,420.6 757.5,421.1 752.6,421.6 747.8,422.1 742.9,422.6 738.1,423.1 733.2,423.6 728.3,424.1 723.5,424.5 718.6,425.0 713.8,425.5 708.9,426.0 704.0,426.5 699.2,427.0 694.3,427.5 689.5,428.0 684.6,428.4" fill="#5e801e" stroke="#5e801e" stroke-width="0.6"/>
<polygon points="684.6,428.4 689.5,428.0 694.3,427.5 699.2,427.0 704.0,426.5 708.9,426.0 713.8,425.5 718.6,425.0 723.5,424.5 728.3,424.1 733.2,423.6 738.1,423.1 742.9,422.6 747.8,422.1 752.6,421.6 757.5,421.1 762.4,420.6 767.2,420.2 772.1,419.7 776.9,419.2 781.8,418.7 786.7,418.2 791.5,417.7 796.4,417.2 801.2,416.7 806.1,416.3 811.0,415.8 815.8,415.3 820.7,414.8 825.5,414.3 830.4,413.8 835.3,413.3 840.1,412.8 845.0,412.4 849.8,411.9 854.7,411.4 859.6,410.9 864.4,410.4 869.3,409.9 874.1,409.4 879.0,408.9 885.0,408.9 891.0,408.9 896.9,409.6 902.8,410.6 908.5,412.1 914.1,414.1 919.6,416.3 924.8,419.2 929.9,422.2 934.7,425.7 939.4,429.4 943.7,433.5 947.8,437.7 951.7,442.2 955.2,447.0 958.6,451.9 961.6,457.0 964.5,462.2 966.9,467.7 969.2,473.2 971.1,478.8 972.8,484.6 974.3,490.3 975.4,496.2 976.4,502.1 976.9,508.1 977.3,514.0 977.6,520.0 977.6,523.8 977.6,527.5 977.6,531.2 977.6,535.0 977.6,538.8 977.6,542.5 977.6,546.2 977.6,550.0 963.2,550.0 963.2,546.2 963.2,542.5 963.2,538.8 963.2,535.0 963.2,531.2 963.2,527.5 963.2,523.8 963.2,520.0 962.9,515.0 962.7,509.9 962.3,504.9 961.4,499.9 960.6,495.0 959.5,490.1 958.1,485.2 956.6,480.4 954.9,475.7 952.9,471.1 950.7,466.6 948.3,462.2 945.7,458.0 942.9,453.8 939.8,449.9 936.5,446.1 933.0,442.6 929.3,439.3 925.4,436.1 921.2,433.4 916.9,430.8 912.4,428.7 907.8,426.8 903.0,425.4 898.0,424.4 893.1,423.7 888.0,423.7 883.0,423.8 878.1,424.3 873.2,424.8 868.2,425.3 863.3,425.9 858.4,426.4 853.5,426.9 848.6,427.4 843.6,427.9 838.7,428.5 833.8,429.0 828.9,429.5 824.0,430.0 819.0,430.6 814.1,431.1 809.2,431.6 804.3,432.1 799.4,432.6 794.4,433.2 789.5,433.7 784.6,434.2 779.7,434.7 774.8,435.3 769.8,435.8 764.9,436.3 760.0,436.8 755.1,437.3 750.2,437.9 745.2,438.4 740.3,438.9 735.4,439.4 730.5,440.0 725.6,440.5 720.6,441.0 715.7,441.5 710.8,442.0 705.9,442.6 701.0,443.1 696.0,443.6 691.1,444.1 686.2,444.6" fill="#5c7e1e" stroke="#5c7e1e" stroke-width="0.6"/>
<polygon points="686.2,444.6 691.1,444.1 696.0,443.6 701.0,443.1 705.9,442.6 710.8,442.0 715.7,441.5 720.6,441.0 725.6,440.5 730.5,440.0 735.4,439.4 740.3,438.9 745.2,438.4 750.2,437.9 755.1,437.3 760.0,436.8 764.9,436.3 769.8,435.8 774.8,435.3 779.7,434.7 784.6,434.2 789.5,433.7 794.4,433.2 799.4,432.6 804.3,432.1 809.2,431.6 814.1,431.1 819.0,430.6 824.0,430.0 828.9,429.5 833.8,429.0 838.7,428.5 843.6,427.9 848.6,427.4 853.5,426.9 858.4,426.4 863.3,425.9 868.2,425.3 873.2,424.8 878.1,424.3 883.0,423.8 888.0,423.7 893.1,423.7 898.0,424.4 903.0,425.4 907.8,426.8 912.4,428.7 916.9,430.8 921.2,433.4 925.4,436.1 929.3,439.3 933.0,442.6 936.5,446.1 939.8,449.9 942.9,453.8 945.7,458.0 948.3,462.2 950.7,466.6 952.9,471.1 954.9,475.7 956.6,480.4 958.1,485.2 959.5,490.1 960.6,495.0 961.4,499.9 962.3,504.9 962.7,509.9 962.9,515.0 963.2,520.0 963.2,523.8 963.2,527.5 963.2,531.2 963.2,535.0 963.2,538.8 963.2,542.5 963.2,546.2 963.2,550.0 951.0,550.0 951.0,546.2 951.0,542.5 951.0,538.8 951.0,535.0 951.0,531.2 951.0,527.5 951.0,523.8 951.0,520.0 950.7,515.8 950.5,511.5 950.3,507.3 949.6,503.1 949.0,498.9 948.2,494.8 947.1,490.7 946.0,486.6 944.6,482.6 943.1,478.6 941.5,474.8 939.6,471.0 937.5,467.3 935.4,463.7 932.9,460.3 930.4,456.9 927.6,453.8 924.7,450.8 921.5,448.0 918.2,445.4 914.7,443.1 911.0,441.1 907.1,439.4 903.2,438.0 899.0,437.1 894.9,436.4 890.6,436.3 886.4,436.4 881.4,436.9 876.5,437.5 871.5,438.0 866.5,438.6 861.5,439.1 856.6,439.7 851.6,440.2 846.6,440.8 841.7,441.3 836.7,441.9 831.7,442.4 826.7,443.0 821.8,443.5 816.8,444.1 811.8,444.6 806.9,445.2 801.9,445.7 796.9,446.3 792.0,446.8 787.0,447.4 782.0,447.9 777.0,448.5 772.1,449.0 767.1,449.6 762.1,450.1 757.2,450.7 752.2,451.3 747.2,451.8 742.2,452.4 737.3,452.9 732.3,453.5 727.3,454.0 722.4,454.6 717.4,455.1 712.4,455.7 707.4,456.2 702.5,456.8 697.5,457.3 692.5,457.9 687.6,458.4" fill="#587620" stroke="#587620" stroke-width="0.6"/>
<polygon points="687.6,458.4 692.5,457.9 697.5,457.3 702.5,456.8 707.4,456.2 712.4,455.7 717.4,455.1 722.4,454.6 727.3,454.0 732.3,453.5 737.3,452.9 742.2,452.4 747.2,451.8 752.2,451.3 757.2,450.7 762.1,450.1 767.1,449.6 772.1,449.0 777.0,448.5 782.0,447.9 787.0,447.4 792.0,446.8 796.9,446.3 801.9,445.7 806.9,445.2 811.8,444.6 816.8,444.1 821.8,443.5 826.7,443.0 831.7,442.4 836.7,441.9 841.7,441.3 846.6,440.8 851.6,440.2 856.6,439.7 861.5,439.1 866.5,438.6 871.5,438.0 876.5,437.5 881.4,436.9 886.4,436.4 890.6,436.3 894.9,436.4 899.0,437.1 903.2,438.0 907.1,439.4 911.0,441.1 914.7,443.1 918.2,445.4 921.5,448.0 924.7,450.8 927.6,453.8 930.4,456.9 932.9,460.3 935.4,463.7 937.5,467.3 939.6,471.0 941.5,474.8 943.1,478.6 944.6,482.6 946.0,486.6 947.1,490.7 948.2,494.8 949.0,498.9 949.6,503.1 950.3,507.3 950.5,511.5 950.7,515.8 951.0,520.0 951.0,523.8 951.0,527.5 951.0,531.2 951.0,535.0 951.0,538.8 951.0,542.5 951.0,546.2 951.0,550.0 938.0,550.0 938.0,546.2 938.0,542.5 938.0,538.8 938.0,535.0 938.0,531.2 938.0,527.5 938.0,523.8 938.0,520.0 937.9,516.6 937.7,513.2 937.6,509.8 937.1,506.5 936.7,503.1 936.2,499.7 935.4,496.4 934.7,493.1 933.8,489.8 932.7,486.6 931.7,483.4 930.3,480.3 928.9,477.2 927.5,474.1 925.7,471.2 924.0,468.3 921.9,465.6 919.8,463.0 917.4,460.5 915.0,458.2 912.3,456.1 909.5,454.2 906.5,452.6 903.4,451.3 900.1,450.4 896.8,449.7 893.4,449.7 890.0,449.7 885.0,450.3 880.0,450.9 874.9,451.4 869.9,452.0 864.9,452.6 859.8,453.2 854.8,453.8 849.8,454.4 844.8,454.9 839.8,455.5 834.7,456.1 829.7,456.7 824.7,457.3 819.6,457.9 814.6,458.4 809.6,459.0 804.6,459.6 799.5,460.2 794.5,460.8 789.5,461.4 784.5,461.9 779.5,462.5 774.4,463.1 769.4,463.7 764.4,464.3 759.4,464.8 754.3,465.4 749.3,466.0 744.3,466.6 739.2,467.2 734.2,467.8 729.2,468.3 724.2,468.9 719.1,469.5 714.1,470.1 709.1,470.7 704.1,471.3 699.0,471.8 694.0,472.4 689.0,473.0" fill="#526a22" stroke="#526a22" stroke-width="0.6"/></g></g>
<g clip-path="url(#cFront)"><polygon points="681.0,392.0 685.7,391.6 690.5,391.2 695.2,390.8 699.9,390.4 704.6,389.9 709.4,389.5 714.1,389.1 718.8,388.7 723.5,388.3 728.2,387.9 733.0,387.5 737.7,387.1 742.4,386.7 747.1,386.3 751.9,385.9 756.6,385.4 761.3,385.0 766.0,384.6 770.8,384.2 775.5,383.8 780.2,383.4 785.0,383.0 789.7,382.6 794.4,382.2 799.1,381.8 803.9,381.3 808.6,380.9 813.3,380.5 818.0,380.1 822.8,379.7 827.5,379.3 832.2,378.9 836.9,378.5 841.6,378.1 846.4,377.7 851.1,377.2 855.8,376.8 860.5,376.4 865.3,376.0 870.0,375.6 878.1,375.5 886.2,375.4 894.2,376.2 902.2,377.3 910.1,378.9 917.9,381.3 925.6,383.8 932.9,387.3 940.2,390.8 946.9,395.2 953.7,399.8 959.9,404.9 965.9,410.3 971.5,416.1 976.7,422.3 981.7,428.7 986.1,435.5 990.5,442.3 994.0,449.6 997.4,456.9 1000.3,464.5 1002.8,472.2 1005.1,479.9 1006.6,487.9 1008.1,495.8 1009.0,503.8 1009.5,511.9 1010.0,520.0 1010.0,523.8 1010.0,527.5 1010.0,531.2 1010.0,535.0 1010.0,538.8 1010.0,542.5 1010.0,546.2 1010.0,550.0 1002.1,550.0 1002.1,546.2 1002.1,542.5 1002.1,538.8 1002.1,535.0 1002.1,531.2 1002.1,527.5 1002.1,523.8 1002.1,520.0 1001.6,512.4 1001.2,504.9 1000.4,497.4 999.0,489.9 997.6,482.4 995.5,475.2 993.2,468.0 990.5,460.9 987.4,454.0 984.1,447.2 980.1,440.7 976.1,434.3 971.5,428.4 966.7,422.5 961.5,417.0 955.9,411.9 950.2,407.0 943.9,402.7 937.7,398.5 930.9,395.1 924.1,391.8 917.0,389.3 909.7,387.0 902.4,385.4 894.9,384.3 887.4,383.6 879.8,383.7 872.2,383.8 867.4,384.2 862.7,384.6 857.9,385.0 853.2,385.5 848.4,385.9 843.7,386.3 838.9,386.8 834.1,387.2 829.4,387.6 824.6,388.0 819.9,388.5 815.1,388.9 810.3,389.3 805.6,389.8 800.8,390.2 796.1,390.6 791.3,391.0 786.6,391.5 781.8,391.9 777.0,392.3 772.3,392.8 767.5,393.2 762.8,393.6 758.0,394.0 753.2,394.5 748.5,394.9 743.7,395.3 739.0,395.8 734.2,396.2 729.5,396.6 724.7,397.0 719.9,397.5 715.2,397.9 710.4,398.3 705.7,398.8 700.9,399.2 696.2,399.6 691.4,400.1 686.6,400.5 681.9,400.9" fill="#7a9f69" stroke="#7a9f69" stroke-width="0.6"/>
<polygon points="681.9,400.9 686.6,400.5 691.4,400.1 696.2,399.6 700.9,399.2 705.7,398.8 710.4,398.3 715.2,397.9 719.9,397.5 724.7,397.0 729.5,396.6 734.2,396.2 739.0,395.8 743.7,395.3 748.5,394.9 753.2,394.5 758.0,394.0 762.8,393.6 767.5,393.2 772.3,392.8 777.0,392.3 781.8,391.9 786.6,391.5 791.3,391.0 796.1,390.6 800.8,390.2 805.6,389.8 810.3,389.3 815.1,388.9 819.9,388.5 824.6,388.0 829.4,387.6 834.1,387.2 838.9,386.8 843.7,386.3 848.4,385.9 853.2,385.5 857.9,385.0 862.7,384.6 867.4,384.2 872.2,383.8 879.8,383.7 887.4,383.6 894.9,384.3 902.4,385.4 909.7,387.0 917.0,389.3 924.1,391.8 930.9,395.1 937.7,398.5 943.9,402.7 950.2,407.0 955.9,411.9 961.5,417.0 966.7,422.5 971.5,428.4 976.1,434.3 980.1,440.7 984.1,447.2 987.4,454.0 990.5,460.9 993.2,468.0 995.5,475.2 997.6,482.4 999.0,489.9 1000.4,497.4 1001.2,504.9 1001.6,512.4 1002.1,520.0 1002.1,523.8 1002.1,527.5 1002.1,531.2 1002.1,535.0 1002.1,538.8 1002.1,542.5 1002.1,546.2 1002.1,550.0 992.0,550.0 992.0,546.2 992.0,542.5 992.0,538.8 992.0,535.0 992.0,531.2 992.0,527.5 992.0,523.8 992.0,520.0 991.6,513.1 991.2,506.2 990.5,499.3 989.3,492.5 988.0,485.7 986.1,479.1 984.1,472.4 981.7,466.0 978.9,459.6 976.0,453.4 972.5,447.5 968.9,441.6 964.8,436.0 960.5,430.6 955.8,425.6 950.9,420.8 945.7,416.2 940.1,412.2 934.5,408.2 928.4,405.0 922.2,401.9 915.8,399.5 909.2,397.4 902.5,395.8 895.7,394.7 888.8,394.0 881.9,394.1 875.0,394.1 870.2,394.6 865.4,395.0 860.6,395.5 855.8,395.9 851.0,396.4 846.2,396.8 841.4,397.3 836.6,397.8 831.8,398.2 827.0,398.7 822.2,399.1 817.4,399.6 812.6,400.0 807.8,400.5 803.0,400.9 798.2,401.4 793.4,401.8 788.6,402.3 783.8,402.7 779.0,403.2 774.2,403.6 769.4,404.1 764.6,404.5 759.8,405.0 755.0,405.5 750.2,405.9 745.4,406.4 740.6,406.8 735.8,407.3 731.0,407.7 726.2,408.2 721.4,408.6 716.6,409.1 711.8,409.5 707.0,410.0 702.2,410.4 697.4,410.9 692.6,411.3 687.8,411.8 683.0,412.2" fill="#88c570" stroke="#88c570" stroke-width="0.6"/>
<polygon points="683.0,412.2 687.8,411.8 692.6,411.3 697.4,410.9 702.2,410.4 707.0,410.0 711.8,409.5 716.6,409.1 721.4,408.6 726.2,408.2 731.0,407.7 735.8,407.3 740.6,406.8 745.4,406.4 750.2,405.9 755.0,405.5 759.8,405.0 764.6,404.5 769.4,404.1 774.2,403.6 779.0,403.2 783.8,402.7 788.6,402.3 793.4,401.8 798.2,401.4 803.0,400.9 807.8,400.5 812.6,400.0 817.4,399.6 822.2,399.1 827.0,398.7 831.8,398.2 836.6,397.8 841.4,397.3 846.2,396.8 851.0,396.4 855.8,395.9 860.6,395.5 865.4,395.0 870.2,394.6 875.0,394.1 881.9,394.1 888.8,394.0 895.7,394.7 902.5,395.8 909.2,397.4 915.8,399.5 922.2,401.9 928.4,405.0 934.5,408.2 940.1,412.2 945.7,416.2 950.9,420.8 955.8,425.6 960.5,430.6 964.8,436.0 968.9,441.6 972.5,447.5 976.0,453.4 978.9,459.6 981.7,466.0 984.1,472.4 986.1,479.1 988.0,485.7 989.3,492.5 990.5,499.3 991.2,506.2 991.6,513.1 992.0,520.0 992.0,523.8 992.0,527.5 992.0,531.2 992.0,535.0 992.0,538.8 992.0,542.5 992.0,546.2 992.0,550.0 977.6,550.0 977.6,546.2 977.6,542.5 977.6,538.8 977.6,535.0 977.6,531.2 977.6,527.5 977.6,523.8 977.6,520.0 977.3,514.0 976.9,508.1 976.4,502.1 975.4,496.2 974.3,490.3 972.8,484.6 971.1,478.8 969.2,473.2 966.9,467.7 964.5,462.2 961.6,457.0 958.6,451.9 955.2,447.0 951.7,442.2 947.8,437.7 943.7,433.5 939.4,429.4 934.7,425.7 929.9,422.2 924.8,419.2 919.6,416.3 914.1,414.1 908.5,412.1 902.8,410.6 896.9,409.6 891.0,408.9 885.0,408.9 879.0,408.9 874.1,409.4 869.3,409.9 864.4,410.4 859.6,410.9 854.7,411.4 849.8,411.9 845.0,412.4 840.1,412.8 835.3,413.3 830.4,413.8 825.5,414.3 820.7,414.8 815.8,415.3 811.0,415.8 806.1,416.3 801.2,416.7 796.4,417.2 791.5,417.7 786.7,418.2 781.8,418.7 776.9,419.2 772.1,419.7 767.2,420.2 762.4,420.6 757.5,421.1 752.6,421.6 747.8,422.1 742.9,422.6 738.1,423.1 733.2,423.6 728.3,424.1 723.5,424.5 718.6,425.0 713.8,425.5 708.9,426.0 704.0,426.5 699.2,427.0 694.3,427.5 689.5,428.0 684.6,428.4" fill="#92d47a" stroke="#92d47a" stroke-width="0.6"/>
<polygon points="684.6,428.4 689.5,428.0 694.3,427.5 699.2,427.0 704.0,426.5 708.9,426.0 713.8,425.5 718.6,425.0 723.5,424.5 728.3,424.1 733.2,423.6 738.1,423.1 742.9,422.6 747.8,422.1 752.6,421.6 757.5,421.1 762.4,420.6 767.2,420.2 772.1,419.7 776.9,419.2 781.8,418.7 786.7,418.2 791.5,417.7 796.4,417.2 801.2,416.7 806.1,416.3 811.0,415.8 815.8,415.3 820.7,414.8 825.5,414.3 830.4,413.8 835.3,413.3 840.1,412.8 845.0,412.4 849.8,411.9 854.7,411.4 859.6,410.9 864.4,410.4 869.3,409.9 874.1,409.4 879.0,408.9 885.0,408.9 891.0,408.9 896.9,409.6 902.8,410.6 908.5,412.1 914.1,414.1 919.6,416.3 924.8,419.2 929.9,422.2 934.7,425.7 939.4,429.4 943.7,433.5 947.8,437.7 951.7,442.2 955.2,447.0 958.6,451.9 961.6,457.0 964.5,462.2 966.9,467.7 969.2,473.2 971.1,478.8 972.8,484.6 974.3,490.3 975.4,496.2 976.4,502.1 976.9,508.1 977.3,514.0 977.6,520.0 977.6,523.8 977.6,527.5 977.6,531.2 977.6,535.0 977.6,538.8 977.6,542.5 977.6,546.2 977.6,550.0 963.2,550.0 963.2,546.2 963.2,542.5 963.2,538.8 963.2,535.0 963.2,531.2 963.2,527.5 963.2,523.8 963.2,520.0 962.9,515.0 962.7,509.9 962.3,504.9 961.4,499.9 960.6,495.0 959.5,490.1 958.1,485.2 956.6,480.4 954.9,475.7 952.9,471.1 950.7,466.6 948.3,462.2 945.7,458.0 942.9,453.8 939.8,449.9 936.5,446.1 933.0,442.6 929.3,439.3 925.4,436.1 921.2,433.4 916.9,430.8 912.4,428.7 907.8,426.8 903.0,425.4 898.0,424.4 893.1,423.7 888.0,423.7 883.0,423.8 878.1,424.3 873.2,424.8 868.2,425.3 863.3,425.9 858.4,426.4 853.5,426.9 848.6,427.4 843.6,427.9 838.7,428.5 833.8,429.0 828.9,429.5 824.0,430.0 819.0,430.6 814.1,431.1 809.2,431.6 804.3,432.1 799.4,432.6 794.4,433.2 789.5,433.7 784.6,434.2 779.7,434.7 774.8,435.3 769.8,435.8 764.9,436.3 760.0,436.8 755.1,437.3 750.2,437.9 745.2,438.4 740.3,438.9 735.4,439.4 730.5,440.0 725.6,440.5 720.6,441.0 715.7,441.5 710.8,442.0 705.9,442.6 701.0,443.1 696.0,443.6 691.1,444.1 686.2,444.6" fill="#90d078" stroke="#90d078" stroke-width="0.6"/>
<polygon points="686.2,444.6 691.1,444.1 696.0,443.6 701.0,443.1 705.9,442.6 710.8,442.0 715.7,441.5 720.6,441.0 725.6,440.5 730.5,440.0 735.4,439.4 740.3,438.9 745.2,438.4 750.2,437.9 755.1,437.3 760.0,436.8 764.9,436.3 769.8,435.8 774.8,435.3 779.7,434.7 784.6,434.2 789.5,433.7 794.4,433.2 799.4,432.6 804.3,432.1 809.2,431.6 814.1,431.1 819.0,430.6 824.0,430.0 828.9,429.5 833.8,429.0 838.7,428.5 843.6,427.9 848.6,427.4 853.5,426.9 858.4,426.4 863.3,425.9 868.2,425.3 873.2,424.8 878.1,424.3 883.0,423.8 888.0,423.7 893.1,423.7 898.0,424.4 903.0,425.4 907.8,426.8 912.4,428.7 916.9,430.8 921.2,433.4 925.4,436.1 929.3,439.3 933.0,442.6 936.5,446.1 939.8,449.9 942.9,453.8 945.7,458.0 948.3,462.2 950.7,466.6 952.9,471.1 954.9,475.7 956.6,480.4 958.1,485.2 959.5,490.1 960.6,495.0 961.4,499.9 962.3,504.9 962.7,509.9 962.9,515.0 963.2,520.0 963.2,523.8 963.2,527.5 963.2,531.2 963.2,535.0 963.2,538.8 963.2,542.5 963.2,546.2 963.2,550.0 951.0,550.0 951.0,546.2 951.0,542.5 951.0,538.8 951.0,535.0 951.0,531.2 951.0,527.5 951.0,523.8 951.0,520.0 950.7,515.8 950.5,511.5 950.3,507.3 949.6,503.1 949.0,498.9 948.2,494.8 947.1,490.7 946.0,486.6 944.6,482.6 943.1,478.6 941.5,474.8 939.6,471.0 937.5,467.3 935.4,463.7 932.9,460.3 930.4,456.9 927.6,453.8 924.7,450.8 921.5,448.0 918.2,445.4 914.7,443.1 911.0,441.1 907.1,439.4 903.2,438.0 899.0,437.1 894.9,436.4 890.6,436.3 886.4,436.4 881.4,436.9 876.5,437.5 871.5,438.0 866.5,438.6 861.5,439.1 856.6,439.7 851.6,440.2 846.6,440.8 841.7,441.3 836.7,441.9 831.7,442.4 826.7,443.0 821.8,443.5 816.8,444.1 811.8,444.6 806.9,445.2 801.9,445.7 796.9,446.3 792.0,446.8 787.0,447.4 782.0,447.9 777.0,448.5 772.1,449.0 767.1,449.6 762.1,450.1 757.2,450.7 752.2,451.3 747.2,451.8 742.2,452.4 737.3,452.9 732.3,453.5 727.3,454.0 722.4,454.6 717.4,455.1 712.4,455.7 707.4,456.2 702.5,456.8 697.5,457.3 692.5,457.9 687.6,458.4" fill="#86bc72" stroke="#86bc72" stroke-width="0.6"/>
<polygon points="687.6,458.4 692.5,457.9 697.5,457.3 702.5,456.8 707.4,456.2 712.4,455.7 717.4,455.1 722.4,454.6 727.3,454.0 732.3,453.5 737.3,452.9 742.2,452.4 747.2,451.8 752.2,451.3 757.2,450.7 762.1,450.1 767.1,449.6 772.1,449.0 777.0,448.5 782.0,447.9 787.0,447.4 792.0,446.8 796.9,446.3 801.9,445.7 806.9,445.2 811.8,444.6 816.8,444.1 821.8,443.5 826.7,443.0 831.7,442.4 836.7,441.9 841.7,441.3 846.6,440.8 851.6,440.2 856.6,439.7 861.5,439.1 866.5,438.6 871.5,438.0 876.5,437.5 881.4,436.9 886.4,436.4 890.6,436.3 894.9,436.4 899.0,437.1 903.2,438.0 907.1,439.4 911.0,441.1 914.7,443.1 918.2,445.4 921.5,448.0 924.7,450.8 927.6,453.8 930.4,456.9 932.9,460.3 935.4,463.7 937.5,467.3 939.6,471.0 941.5,474.8 943.1,478.6 944.6,482.6 946.0,486.6 947.1,490.7 948.2,494.8 949.0,498.9 949.6,503.1 950.3,507.3 950.5,511.5 950.7,515.8 951.0,520.0 951.0,523.8 951.0,527.5 951.0,531.2 951.0,535.0 951.0,538.8 951.0,542.5 951.0,546.2 951.0,550.0 938.0,550.0 938.0,546.2 938.0,542.5 938.0,538.8 938.0,535.0 938.0,531.2 938.0,527.5 938.0,523.8 938.0,520.0 937.9,516.6 937.7,513.2 937.6,509.8 937.1,506.5 936.7,503.1 936.2,499.7 935.4,496.4 934.7,493.1 933.8,489.8 932.7,486.6 931.7,483.4 930.3,480.3 928.9,477.2 927.5,474.1 925.7,471.2 924.0,468.3 921.9,465.6 919.8,463.0 917.4,460.5 915.0,458.2 912.3,456.1 909.5,454.2 906.5,452.6 903.4,451.3 900.1,450.4 896.8,449.7 893.4,449.7 890.0,449.7 885.0,450.3 880.0,450.9 874.9,451.4 869.9,452.0 864.9,452.6 859.8,453.2 854.8,453.8 849.8,454.4 844.8,454.9 839.8,455.5 834.7,456.1 829.7,456.7 824.7,457.3 819.6,457.9 814.6,458.4 809.6,459.0 804.6,459.6 799.5,460.2 794.5,460.8 789.5,461.4 784.5,461.9 779.5,462.5 774.4,463.1 769.4,463.7 764.4,464.3 759.4,464.8 754.3,465.4 749.3,466.0 744.3,466.6 739.2,467.2 734.2,467.8 729.2,468.3 724.2,468.9 719.1,469.5 714.1,470.1 709.1,470.7 704.1,471.3 699.0,471.8 694.0,472.4 689.0,473.0" fill="#7aa46a" stroke="#7aa46a" stroke-width="0.6"/><path d="M681.0,392.0 L681.9,400.9 L683.0,412.2 L684.6,428.4 L686.2,444.6 L687.6,458.4 L689.0,473.0 M699.9,390.4 L700.9,399.2 L702.2,410.4 L704.0,426.5 L705.9,442.6 L707.4,456.2 L709.1,470.7 M718.8,388.7 L719.9,397.5 L721.4,408.6 L723.5,424.5 L725.6,440.5 L727.3,454.0 L729.2,468.3 M737.7,387.1 L739.0,395.8 L740.6,406.8 L742.9,422.6 L745.2,438.4 L747.2,451.8 L749.3,466.0 M756.6,385.4 L758.0,394.0 L759.8,405.0 L762.4,420.6 L764.9,436.3 L767.1,449.6 L769.4,463.7 M775.5,383.8 L777.0,392.3 L779.0,403.2 L781.8,418.7 L784.6,434.2 L787.0,447.4 L789.5,461.4 M794.4,382.2 L796.1,390.6 L798.2,401.4 L801.2,416.7 L804.3,432.1 L806.9,445.2 L809.6,459.0 M813.3,380.5 L815.1,388.9 L817.4,399.6 L820.7,414.8 L824.0,430.0 L826.7,443.0 L829.7,456.7 M832.2,378.9 L834.1,387.2 L836.6,397.8 L840.1,412.8 L843.6,427.9 L846.6,440.8 L849.8,454.4 M851.1,377.2 L853.2,385.5 L855.8,395.9 L859.6,410.9 L863.3,425.9 L866.5,438.6 L869.9,452.0 M870.0,375.6 L872.2,383.8 L875.0,394.1 L879.0,408.9 L883.0,423.8 L886.4,436.4 L890.0,449.7 M902.2,377.3 L902.4,385.4 L902.5,395.8 L902.8,410.6 L903.0,425.4 L903.2,438.0 L903.4,451.3 M932.9,387.3 L930.9,395.1 L928.4,405.0 L924.8,419.2 L921.2,433.4 L918.2,445.4 L915.0,458.2 M959.9,404.9 L955.9,411.9 L950.9,420.8 L943.7,433.5 L936.5,446.1 L930.4,456.9 L924.0,468.3 M981.7,428.7 L976.1,434.3 L968.9,441.6 L958.6,451.9 L948.3,462.2 L939.6,471.0 L930.3,480.3 M997.4,456.9 L990.5,460.9 L981.7,466.0 L969.2,473.2 L956.6,480.4 L946.0,486.6 L934.7,493.1 M1006.6,487.9 L999.0,489.9 L989.3,492.5 L975.4,496.2 L961.4,499.9 L949.6,503.1 L937.1,506.5 M1010.0,520.0 L1002.1,520.0 L992.0,520.0 L977.6,520.0 L963.2,520.0 L951.0,520.0 L938.0,520.0 M1010.0,535.0 L1002.1,535.0 L992.0,535.0 L977.6,535.0 L963.2,535.0 L951.0,535.0 L938.0,535.0 M1010.0,550.0 L1002.1,550.0 L992.0,550.0 L977.6,550.0 L963.2,550.0 L951.0,550.0 L938.0,550.0 M681.0,392.0 L699.9,390.4 L718.8,388.7 L737.7,387.1 L756.6,385.4 L775.5,383.8 L794.4,382.2 L813.3,380.5 L832.2,378.9 L851.1,377.2 L870.0,375.6 L902.2,377.3 L932.9,387.3 L959.9,404.9 L981.7,428.7 L997.4,456.9 L1006.6,487.9 L1010.0,520.0 L1010.0,535.0 L1010.0,550.0 M681.9,400.9 L700.9,399.2 L719.9,397.5 L739.0,395.8 L758.0,394.0 L777.0,392.3 L796.1,390.6 L815.1,388.9 L834.1,387.2 L853.2,385.5 L872.2,383.8 L902.4,385.4 L930.9,395.1 L955.9,411.9 L976.1,434.3 L990.5,460.9 L999.0,489.9 L1002.1,520.0 L1002.1,535.0 L1002.1,550.0 M683.0,412.2 L702.2,410.4 L721.4,408.6 L740.6,406.8 L759.8,405.0 L779.0,403.2 L798.2,401.4 L817.4,399.6 L836.6,397.8 L855.8,395.9 L875.0,394.1 L902.5,395.8 L928.4,405.0 L950.9,420.8 L968.9,441.6 L981.7,466.0 L989.3,492.5 L992.0,520.0 L992.0,535.0 L992.0,550.0 M684.6,428.4 L704.0,426.5 L723.5,424.5 L742.9,422.6 L762.4,420.6 L781.8,418.7 L801.2,416.7 L820.7,414.8 L840.1,412.8 L859.6,410.9 L879.0,408.9 L902.8,410.6 L924.8,419.2 L943.7,433.5 L958.6,451.9 L969.2,473.2 L975.4,496.2 L977.6,520.0 L977.6,535.0 L977.6,550.0 M686.2,444.6 L705.9,442.6 L725.6,440.5 L745.2,438.4 L764.9,436.3 L784.6,434.2 L804.3,432.1 L824.0,430.0 L843.6,427.9 L863.3,425.9 L883.0,423.8 L903.0,425.4 L921.2,433.4 L936.5,446.1 L948.3,462.2 L956.6,480.4 L961.4,499.9 L963.2,520.0 L963.2,535.0 L963.2,550.0 M687.6,458.4 L707.4,456.2 L727.3,454.0 L747.2,451.8 L767.1,449.6 L787.0,447.4 L806.9,445.2 L826.7,443.0 L846.6,440.8 L866.5,438.6 L886.4,436.4 L903.2,438.0 L918.2,445.4 L930.4,456.9 L939.6,471.0 L946.0,486.6 L949.6,503.1 L951.0,520.0 L951.0,535.0 L951.0,550.0 M689.0,473.0 L709.1,470.7 L729.2,468.3 L749.3,466.0 L769.4,463.7 L789.5,461.4 L809.6,459.0 L829.7,456.7 L849.8,454.4 L869.9,452.0 L890.0,449.7 L903.4,451.3 L915.0,458.2 L924.0,468.3 L930.3,480.3 L934.7,493.1 L937.1,506.5 L938.0,520.0 L938.0,535.0 L938.0,550.0" fill="none" stroke="#b8a4b8" stroke-width="0.8" opacity="0.55"/><path d="M681.9,400.9 L699.9,390.4 M683.0,412.2 L700.9,399.2 M684.6,428.4 L702.2,410.4 M686.2,444.6 L704.0,426.5 M687.6,458.4 L705.9,442.6 M689.0,473.0 L707.4,456.2 M700.9,399.2 L718.8,388.7 M702.2,410.4 L719.9,397.5 M704.0,426.5 L721.4,408.6 M705.9,442.6 L723.5,424.5 M707.4,456.2 L725.6,440.5 M709.1,470.7 L727.3,454.0 M719.9,397.5 L737.7,387.1 M721.4,408.6 L739.0,395.8 M723.5,424.5 L740.6,406.8 M725.6,440.5 L742.9,422.6 M727.3,454.0 L745.2,438.4 M729.2,468.3 L747.2,451.8 M739.0,395.8 L756.6,385.4 M740.6,406.8 L758.0,394.0 M742.9,422.6 L759.8,405.0 M745.2,438.4 L762.4,420.6 M747.2,451.8 L764.9,436.3 M749.3,466.0 L767.1,449.6 M758.0,394.0 L775.5,383.8 M759.8,405.0 L777.0,392.3 M762.4,420.6 L779.0,403.2 M764.9,436.3 L781.8,418.7 M767.1,449.6 L784.6,434.2 M769.4,463.7 L787.0,447.4 M777.0,392.3 L794.4,382.2 M779.0,403.2 L796.1,390.6 M781.8,418.7 L798.2,401.4 M784.6,434.2 L801.2,416.7 M787.0,447.4 L804.3,432.1 M789.5,461.4 L806.9,445.2 M796.1,390.6 L813.3,380.5 M798.2,401.4 L815.1,388.9 M801.2,416.7 L817.4,399.6 M804.3,432.1 L820.7,414.8 M806.9,445.2 L824.0,430.0 M809.6,459.0 L826.7,443.0 M815.1,388.9 L832.2,378.9 M817.4,399.6 L834.1,387.2 M820.7,414.8 L836.6,397.8 M824.0,430.0 L840.1,412.8 M826.7,443.0 L843.6,427.9 M829.7,456.7 L846.6,440.8 M834.1,387.2 L851.1,377.2 M836.6,397.8 L853.2,385.5 M840.1,412.8 L855.8,395.9 M843.6,427.9 L859.6,410.9 M846.6,440.8 L863.3,425.9 M849.8,454.4 L866.5,438.6 M853.2,385.5 L870.0,375.6 M855.8,395.9 L872.2,383.8 M859.6,410.9 L875.0,394.1 M863.3,425.9 L879.0,408.9 M866.5,438.6 L883.0,423.8 M869.9,452.0 L886.4,436.4 M872.2,383.8 L902.2,377.3 M875.0,394.1 L902.4,385.4 M879.0,408.9 L902.5,395.8 M883.0,423.8 L902.8,410.6 M886.4,436.4 L903.0,425.4 M890.0,449.7 L903.2,438.0 M902.4,385.4 L932.9,387.3 M902.5,395.8 L930.9,395.1 M902.8,410.6 L928.4,405.0 M903.0,425.4 L924.8,419.2 M903.2,438.0 L921.2,433.4 M903.4,451.3 L918.2,445.4 M930.9,395.1 L959.9,404.9 M928.4,405.0 L955.9,411.9 M924.8,419.2 L950.9,420.8 M921.2,433.4 L943.7,433.5 M918.2,445.4 L936.5,446.1 M915.0,458.2 L930.4,456.9 M955.9,411.9 L981.7,428.7 M950.9,420.8 L976.1,434.3 M943.7,433.5 L968.9,441.6 M936.5,446.1 L958.6,451.9 M930.4,456.9 L948.3,462.2 M924.0,468.3 L939.6,471.0 M976.1,434.3 L997.4,456.9 M968.9,441.6 L990.5,460.9 M958.6,451.9 L981.7,466.0 M948.3,462.2 L969.2,473.2 M939.6,471.0 L956.6,480.4 M930.3,480.3 L946.0,486.6 M990.5,460.9 L1006.6,487.9 M981.7,466.0 L999.0,489.9 M969.2,473.2 L989.3,492.5 M956.6,480.4 L975.4,496.2 M946.0,486.6 L961.4,499.9 M934.7,493.1 L949.6,503.1 M999.0,489.9 L1010.0,520.0 M989.3,492.5 L1002.1,520.0 M975.4,496.2 L992.0,520.0 M961.4,499.9 L977.6,520.0 M949.6,503.1 L963.2,520.0 M937.1,506.5 L951.0,520.0 M1002.1,520.0 L1010.0,535.0 M992.0,520.0 L1002.1,535.0 M977.6,520.0 L992.0,535.0 M963.2,520.0 L977.6,535.0 M951.0,520.0 L963.2,535.0 M938.0,520.0 L951.0,535.0 M1002.1,535.0 L1010.0,550.0 M992.0,535.0 L1002.1,550.0 M977.6,535.0 L992.0,550.0 M963.2,535.0 L977.6,550.0 M951.0,535.0 L963.2,550.0 M938.0,535.0 L951.0,550.0" fill="none" stroke="#5e9a4c" stroke-width="0.8" opacity="0.55"/></g>
<g fill="none" stroke="#6a6e66" stroke-width="1.3" opacity="0.65"><polyline points="681.0,392.0 685.7,391.6 690.5,391.2 695.2,390.8 699.9,390.4 704.6,389.9 709.4,389.5 714.1,389.1 718.8,388.7 723.5,388.3 728.2,387.9 733.0,387.5 737.7,387.1 742.4,386.7 747.1,386.3 751.9,385.9 756.6,385.4 761.3,385.0 766.0,384.6 770.8,384.2 775.5,383.8 780.2,383.4 785.0,383.0 789.7,382.6 794.4,382.2 799.1,381.8 803.9,381.3 808.6,380.9 813.3,380.5 818.0,380.1 822.8,379.7 827.5,379.3 832.2,378.9 836.9,378.5 841.6,378.1 846.4,377.7 851.1,377.2 855.8,376.8 860.5,376.4 865.3,376.0 870.0,375.6 878.1,375.5 886.2,375.4 894.2,376.2 902.2,377.3 910.1,378.9 917.9,381.3 925.6,383.8 932.9,387.3 940.2,390.8 946.9,395.2 953.7,399.8 959.9,404.9 965.9,410.3 971.5,416.1 976.7,422.3 981.7,428.7 986.1,435.5 990.5,442.3 994.0,449.6 997.4,456.9 1000.3,464.5 1002.8,472.2 1005.1,479.9 1006.6,487.9 1008.1,495.8 1009.0,503.8 1009.5,511.9 1010.0,520.0 1010.0,523.8 1010.0,527.5 1010.0,531.2 1010.0,535.0 1010.0,538.8 1010.0,542.5 1010.0,546.2 1010.0,550.0"/><polyline points="689.0,473.0 694.0,472.4 699.0,471.8 704.1,471.3 709.1,470.7 714.1,470.1 719.1,469.5 724.2,468.9 729.2,468.3 734.2,467.8 739.2,467.2 744.3,466.6 749.3,466.0 754.3,465.4 759.4,464.8 764.4,464.3 769.4,463.7 774.4,463.1 779.5,462.5 784.5,461.9 789.5,461.4 794.5,460.8 799.5,460.2 804.6,459.6 809.6,459.0 814.6,458.4 819.6,457.9 824.7,457.3 829.7,456.7 834.7,456.1 839.8,455.5 844.8,454.9 849.8,454.4 854.8,453.8 859.8,453.2 864.9,452.6 869.9,452.0 874.9,451.4 880.0,450.9 885.0,450.3 890.0,449.7 893.4,449.7 896.8,449.7 900.1,450.4 903.4,451.3 906.5,452.6 909.5,454.2 912.3,456.1 915.0,458.2 917.4,460.5 919.8,463.0 921.9,465.6 924.0,468.3 925.7,471.2 927.5,474.1 928.9,477.2 930.3,480.3 931.7,483.4 932.7,486.6 933.8,489.8 934.7,493.1 935.4,496.4 936.2,499.7 936.7,503.1 937.1,506.5 937.6,509.8 937.7,513.2 937.9,516.6 938.0,520.0 938.0,523.8 938.0,527.5 938.0,531.2 938.0,535.0 938.0,538.8 938.0,542.5 938.0,546.2 938.0,550.0"/></g>
</g>
<ellipse cx="686" cy="432.5" rx="9.5" ry="41" transform="rotate(-6 686 432.5)" fill="#587a4c"/>
<path d="M688.5,434.4 L688.2,440.9 L686.5,442.5 L684.6,438.2 L683.5,430.6 L683.8,424.1 L685.5,422.5 L687.4,426.8 Z M690.9,433.5 L691.2,441.2 L690.7,447.6 L689.5,451.7 L687.8,452.9 L685.8,450.9 L683.8,446.2 L682.2,439.4 L681.1,431.5 L680.8,423.8 L681.3,417.4 L682.5,413.3 L684.2,412.1 L686.2,414.1 L688.2,418.8 L689.8,425.6 Z M693.3,434.2 L693.8,442.0 L693.7,449.2 L693.0,455.3 L691.9,459.8 L690.4,462.4 L688.6,463.0 L686.7,461.6 L684.6,458.1 L682.7,452.9 L681.0,446.3 L679.6,438.8 L678.7,430.8 L678.2,423.0 L678.3,415.8 L679.0,409.7 L680.1,405.2 L681.6,402.6 L683.4,402.0 L685.3,403.4 L687.4,406.9 L689.3,412.1 L691.0,418.7 L692.4,426.2 Z M695.7,434.0 L696.2,441.9 L696.4,449.5 L696.1,456.4 L695.5,462.4 L694.5,467.2 L693.1,470.7 L691.5,472.8 L689.7,473.3 L687.7,472.2 L685.7,469.6 L683.7,465.6 L681.8,460.3 L680.0,453.9 L678.5,446.7 L677.2,439.0 L676.3,431.0 L675.8,423.1 L675.6,415.5 L675.9,408.6 L676.5,402.6 L677.5,397.8 L678.9,394.3 L680.5,392.2 L682.3,391.7 L684.3,392.8 L686.3,395.4 L688.3,399.4 L690.2,404.7 L692.0,411.1 L693.5,418.3 L694.8,426.0 Z M688.5,434.4 L686.0,432.5 M688.2,440.9 L686.0,432.5 M688.2,440.9 L686.0,432.5 M686.5,442.5 L686.0,432.5 M684.6,438.2 L686.0,432.5 M684.6,438.2 L686.0,432.5 M683.5,430.6 L686.0,432.5 M683.8,424.1 L686.0,432.5 M683.8,424.1 L686.0,432.5 M685.5,422.5 L686.0,432.5 M687.4,426.8 L686.0,432.5 M687.4,426.8 L686.0,432.5 M690.9,433.5 L688.5,434.4 M691.2,441.2 L688.5,434.4 M691.2,441.2 L688.2,440.9 M690.7,447.6 L688.2,440.9 M689.5,451.7 L686.5,442.5 M689.5,451.7 L684.6,438.2 M687.8,452.9 L686.5,442.5 M685.8,450.9 L686.5,442.5 M685.8,450.9 L684.6,438.2 M683.8,446.2 L684.6,438.2 M682.2,439.4 L683.5,430.6 M682.2,439.4 L683.8,424.1 M681.1,431.5 L683.5,430.6 M680.8,423.8 L683.5,430.6 M680.8,423.8 L683.8,424.1 M681.3,417.4 L683.8,424.1 M682.5,413.3 L685.5,422.5 M682.5,413.3 L687.4,426.8 M684.2,412.1 L685.5,422.5 M686.2,414.1 L685.5,422.5 M686.2,414.1 L687.4,426.8 M688.2,418.8 L687.4,426.8 M689.8,425.6 L688.5,434.4 M689.8,425.6 L688.2,440.9 M693.3,434.2 L690.9,433.5 M693.8,442.0 L691.2,441.2 M693.8,442.0 L690.7,447.6 M693.7,449.2 L691.2,441.2 M693.0,455.3 L690.7,447.6 M693.0,455.3 L689.5,451.7 M691.9,459.8 L689.5,451.7 M690.4,462.4 L689.5,451.7 M690.4,462.4 L687.8,452.9 M688.6,463.0 L687.8,452.9 M686.7,461.6 L685.8,450.9 M686.7,461.6 L683.8,446.2 M684.6,458.1 L685.8,450.9 M682.7,452.9 L683.8,446.2 M682.7,452.9 L682.2,439.4 M681.0,446.3 L682.2,439.4 M679.6,438.8 L682.2,439.4 M679.6,438.8 L681.1,431.5 M678.7,430.8 L681.1,431.5 M678.2,423.0 L680.8,423.8 M678.2,423.0 L681.3,417.4 M678.3,415.8 L680.8,423.8 M679.0,409.7 L681.3,417.4 M679.0,409.7 L682.5,413.3 M680.1,405.2 L682.5,413.3 M681.6,402.6 L682.5,413.3 M681.6,402.6 L684.2,412.1 M683.4,402.0 L684.2,412.1 M685.3,403.4 L686.2,414.1 M685.3,403.4 L688.2,418.8 M687.4,406.9 L686.2,414.1 M689.3,412.1 L688.2,418.8 M689.3,412.1 L689.8,425.6 M691.0,418.7 L689.8,425.6 M692.4,426.2 L689.8,425.6 M692.4,426.2 L690.9,433.5 M695.7,434.0 L693.3,434.2 M696.2,441.9 L693.8,442.0 M696.2,441.9 L693.7,449.2 M696.4,449.5 L693.7,449.2 M696.1,456.4 L693.7,449.2 M696.1,456.4 L693.0,455.3 M695.5,462.4 L693.0,455.3 M694.5,467.2 L691.9,459.8 M694.5,467.2 L690.4,462.4 M693.1,470.7 L691.9,459.8 M691.5,472.8 L690.4,462.4 M691.5,472.8 L688.6,463.0 M689.7,473.3 L688.6,463.0 M687.7,472.2 L686.7,461.6 M687.7,472.2 L684.6,458.1 M685.7,469.6 L684.6,458.1 M683.7,465.6 L684.6,458.1 M683.7,465.6 L682.7,452.9 M681.8,460.3 L682.7,452.9 M680.0,453.9 L681.0,446.3 M680.0,453.9 L679.6,438.8 M678.5,446.7 L681.0,446.3 M677.2,439.0 L679.6,438.8 M677.2,439.0 L678.7,430.8 M676.3,431.0 L678.7,430.8 M675.8,423.1 L678.2,423.0 M675.8,423.1 L678.3,415.8 M675.6,415.5 L678.3,415.8 M675.9,408.6 L678.3,415.8 M675.9,408.6 L679.0,409.7 M676.5,402.6 L679.0,409.7 M677.5,397.8 L680.1,405.2 M677.5,397.8 L681.6,402.6 M678.9,394.3 L680.1,405.2 M680.5,392.2 L681.6,402.6 M680.5,392.2 L683.4,402.0 M682.3,391.7 L683.4,402.0 M684.3,392.8 L685.3,403.4 M684.3,392.8 L687.4,406.9 M686.3,395.4 L687.4,406.9 M688.3,399.4 L687.4,406.9 M688.3,399.4 L689.3,412.1 M690.2,404.7 L689.3,412.1 M692.0,411.1 L691.0,418.7 M692.0,411.1 L692.4,426.2 M693.5,418.3 L691.0,418.7 M694.8,426.0 L692.4,426.2 M694.8,426.0 L693.3,434.2" fill="none" stroke="#a898a8" stroke-width="0.8" opacity="0.55"/>
<clipPath id="cCap"><path d="M1104,242 L1115.5,287 C1140,302 1250,310 1286,293 L1295.5,243 Z"/></clipPath>
<clipPath id="cCapLow"><path d="M1104,270 L1115.5,287 C1140,302 1250,310 1286,293 L1295.5,270 L1339,270 L1339,320 L1100,320 Z"/></clipPath>
<g clip-path="url(#cCap)"><polygon points="1104.0,230.0 1106.4,248.0 1108.8,266.0 1111.2,284.0 1113.6,302.0 1116.0,320.0 1126.1,320.0 1124.0,302.0 1121.9,284.0 1119.8,266.0 1117.6,248.0 1115.5,230.0" fill="#1f3a1a" stroke="#1f3a1a" stroke-width="0.6"/>
<polygon points="1115.5,230.0 1117.6,248.0 1119.8,266.0 1121.9,284.0 1124.0,302.0 1126.1,320.0 1146.4,320.0 1144.8,302.0 1143.2,284.0 1141.6,266.0 1140.1,248.0 1138.5,230.0" fill="#4f8a3c" stroke="#4f8a3c" stroke-width="0.6"/>
<polygon points="1138.5,230.0 1140.1,248.0 1141.6,266.0 1143.2,284.0 1144.8,302.0 1146.4,320.0 1170.1,320.0 1169.1,302.0 1168.2,284.0 1167.2,266.0 1166.2,248.0 1165.3,230.0" fill="#6cc050" stroke="#6cc050" stroke-width="0.6"/>
<polygon points="1165.3,230.0 1166.2,248.0 1167.2,266.0 1168.2,284.0 1169.1,302.0 1170.1,320.0 1242.8,320.0 1243.7,302.0 1244.7,284.0 1245.7,266.0 1246.7,248.0 1247.6,230.0" fill="#7acc5a" stroke="#7acc5a" stroke-width="0.6"/>
<polygon points="1247.6,230.0 1246.7,248.0 1245.7,266.0 1244.7,284.0 1243.7,302.0 1242.8,320.0 1264.7,320.0 1266.3,302.0 1267.8,284.0 1269.4,266.0 1271.0,248.0 1272.5,230.0" fill="#62a24a" stroke="#62a24a" stroke-width="0.6"/>
<polygon points="1272.5,230.0 1271.0,248.0 1269.4,266.0 1267.8,284.0 1266.3,302.0 1264.7,320.0 1285.0,320.0 1287.1,302.0 1289.2,284.0 1291.3,266.0 1293.4,248.0 1295.5,230.0" fill="#4a7e38" stroke="#4a7e38" stroke-width="0.6"/><path d="M1104.0,230.0 L1115.5,230.0 L1138.5,230.0 L1165.3,230.0 L1205.5,230.0 L1247.6,230.0 L1272.5,230.0 L1295.5,230.0 M1106.4,248.0 L1117.6,248.0 L1140.1,248.0 L1166.2,248.0 L1205.5,248.0 L1246.7,248.0 L1271.0,248.0 L1293.4,248.0 M1108.8,266.0 L1119.8,266.0 L1141.6,266.0 L1167.2,266.0 L1205.5,266.0 L1245.7,266.0 L1269.4,266.0 L1291.3,266.0 M1111.2,284.0 L1121.9,284.0 L1143.2,284.0 L1168.2,284.0 L1205.5,284.0 L1244.7,284.0 L1267.8,284.0 L1289.2,284.0 M1113.6,302.0 L1124.0,302.0 L1144.8,302.0 L1169.1,302.0 L1205.6,302.0 L1243.7,302.0 L1266.3,302.0 L1287.1,302.0 M1116.0,320.0 L1126.1,320.0 L1146.4,320.0 L1170.1,320.0 L1205.6,320.0 L1242.8,320.0 L1264.7,320.0 L1285.0,320.0 M1104.0,230.0 L1106.4,248.0 L1108.8,266.0 L1111.2,284.0 L1113.6,302.0 L1116.0,320.0 M1115.5,230.0 L1117.6,248.0 L1119.8,266.0 L1121.9,284.0 L1124.0,302.0 L1126.1,320.0 M1138.5,230.0 L1140.1,248.0 L1141.6,266.0 L1143.2,284.0 L1144.8,302.0 L1146.4,320.0 M1165.3,230.0 L1166.2,248.0 L1167.2,266.0 L1168.2,284.0 L1169.1,302.0 L1170.1,320.0 M1205.5,230.0 L1205.5,248.0 L1205.5,266.0 L1205.5,284.0 L1205.6,302.0 L1205.6,320.0 M1247.6,230.0 L1246.7,248.0 L1245.7,266.0 L1244.7,284.0 L1243.7,302.0 L1242.8,320.0 M1272.5,230.0 L1271.0,248.0 L1269.4,266.0 L1267.8,284.0 L1266.3,302.0 L1264.7,320.0 M1295.5,230.0 L1293.4,248.0 L1291.3,266.0 L1289.2,284.0 L1287.1,302.0 L1285.0,320.0" fill="none" stroke="#50a040" stroke-width="0.8" opacity="0.6"/><path d="M1104.0,230.0 L1117.6,248.0 M1115.5,230.0 L1140.1,248.0 M1138.5,230.0 L1166.2,248.0 M1165.3,230.0 L1205.5,248.0 M1205.5,230.0 L1246.7,248.0 M1247.6,230.0 L1271.0,248.0 M1272.5,230.0 L1293.4,248.0 M1106.4,248.0 L1119.8,266.0 M1117.6,248.0 L1141.6,266.0 M1140.1,248.0 L1167.2,266.0 M1166.2,248.0 L1205.5,266.0 M1205.5,248.0 L1245.7,266.0 M1246.7,248.0 L1269.4,266.0 M1271.0,248.0 L1291.3,266.0 M1108.8,266.0 L1121.9,284.0 M1119.8,266.0 L1143.2,284.0 M1141.6,266.0 L1168.2,284.0 M1167.2,266.0 L1205.5,284.0 M1205.5,266.0 L1244.7,284.0 M1245.7,266.0 L1267.8,284.0 M1269.4,266.0 L1289.2,284.0 M1111.2,284.0 L1124.0,302.0 M1121.9,284.0 L1144.8,302.0 M1143.2,284.0 L1169.1,302.0 M1168.2,284.0 L1205.6,302.0 M1205.5,284.0 L1243.7,302.0 M1244.7,284.0 L1266.3,302.0 M1267.8,284.0 L1287.1,302.0 M1113.6,302.0 L1126.1,320.0 M1124.0,302.0 L1146.4,320.0 M1144.8,302.0 L1170.1,320.0 M1169.1,302.0 L1205.6,320.0 M1205.6,302.0 L1242.8,320.0 M1243.7,302.0 L1264.7,320.0 M1266.3,302.0 L1285.0,320.0" fill="none" stroke="#50a040" stroke-width="0.8" opacity="0.6"/></g>
<g clip-path="url(#cTop)"><g clip-path="url(#cCapLow)"><polygon points="1104.0,230.0 1106.4,248.0 1108.8,266.0 1111.2,284.0 1113.6,302.0 1116.0,320.0 1126.1,320.0 1124.0,302.0 1121.9,284.0 1119.8,266.0 1117.6,248.0 1115.5,230.0" fill="#4a2a24" stroke="#4a2a24" stroke-width="0.6"/>
<polygon points="1115.5,230.0 1117.6,248.0 1119.8,266.0 1121.9,284.0 1124.0,302.0 1126.1,320.0 1146.4,320.0 1144.8,302.0 1143.2,284.0 1141.6,266.0 1140.1,248.0 1138.5,230.0" fill="#5e3a2a" stroke="#5e3a2a" stroke-width="0.6"/>
<polygon points="1138.5,230.0 1140.1,248.0 1141.6,266.0 1143.2,284.0 1144.8,302.0 1146.4,320.0 1170.1,320.0 1169.1,302.0 1168.2,284.0 1167.2,266.0 1166.2,248.0 1165.3,230.0" fill="#6a4a26" stroke="#6a4a26" stroke-width="0.6"/>
<polygon points="1165.3,230.0 1166.2,248.0 1167.2,266.0 1168.2,284.0 1169.1,302.0 1170.1,320.0 1242.8,320.0 1243.7,302.0 1244.7,284.0 1245.7,266.0 1246.7,248.0 1247.6,230.0" fill="#6b5a28" stroke="#6b5a28" stroke-width="0.6"/>
<polygon points="1247.6,230.0 1246.7,248.0 1245.7,266.0 1244.7,284.0 1243.7,302.0 1242.8,320.0 1264.7,320.0 1266.3,302.0 1267.8,284.0 1269.4,266.0 1271.0,248.0 1272.5,230.0" fill="#604a24" stroke="#604a24" stroke-width="0.6"/>
<polygon points="1272.5,230.0 1271.0,248.0 1269.4,266.0 1267.8,284.0 1266.3,302.0 1264.7,320.0 1285.0,320.0 1287.1,302.0 1289.2,284.0 1291.3,266.0 1293.4,248.0 1295.5,230.0" fill="#56402a" stroke="#56402a" stroke-width="0.6"/></g></g>
<ellipse cx="1200" cy="242.5" rx="96" ry="20" fill="#416c32"/>
<path d="M1219.2,242.7 L1213.0,245.4 L1199.2,246.5 L1185.9,245.2 L1180.8,242.3 L1187.0,239.6 L1200.8,238.5 L1214.1,239.8 Z M1238.3,243.1 L1234.2,246.1 L1225.0,248.6 L1211.9,250.1 L1197.0,250.5 L1182.6,249.6 L1170.8,247.7 L1163.5,245.0 L1161.7,241.9 L1165.8,238.9 L1175.0,236.4 L1188.1,234.9 L1203.0,234.5 L1217.4,235.4 L1229.2,237.3 L1236.5,240.0 Z M1257.6,242.7 L1255.3,245.8 L1249.3,248.7 L1239.9,251.2 L1227.8,253.0 L1213.8,254.2 L1198.8,254.5 L1184.0,254.0 L1170.2,252.8 L1158.5,250.8 L1149.5,248.3 L1144.1,245.4 L1142.4,242.3 L1144.7,239.2 L1150.7,236.3 L1160.1,233.8 L1172.2,232.0 L1186.2,230.8 L1201.2,230.5 L1216.0,231.0 L1229.8,232.2 L1241.5,234.2 L1250.5,236.7 L1255.9,239.6 Z M1276.8,242.6 L1275.2,245.7 L1270.8,248.7 L1263.6,251.5 L1254.0,253.9 L1242.2,255.9 L1228.9,257.3 L1214.5,258.2 L1199.5,258.5 L1184.5,258.2 L1170.1,257.2 L1156.9,255.7 L1145.3,253.7 L1135.9,251.3 L1128.9,248.5 L1124.6,245.5 L1123.2,242.4 L1124.8,239.3 L1129.2,236.3 L1136.4,233.5 L1146.0,231.1 L1157.8,229.1 L1171.1,227.7 L1185.5,226.8 L1200.5,226.5 L1215.5,226.8 L1229.9,227.8 L1243.1,229.3 L1254.7,231.3 L1264.1,233.7 L1271.1,236.5 L1275.4,239.5 Z M1296.0,243.1 L1294.3,246.3 L1290.3,249.3 L1284.1,252.1 L1275.8,254.8 L1265.7,257.1 L1254.0,259.0 L1240.9,260.6 L1226.8,261.7 L1212.0,262.3 L1197.0,262.5 L1182.0,262.1 L1167.5,261.3 L1153.7,260.0 L1141.2,258.3 L1130.0,256.2 L1120.6,253.7 L1113.1,251.0 L1107.8,248.1 L1104.8,245.0 L1104.0,241.9 L1105.7,238.7 L1109.7,235.7 L1115.9,232.9 L1124.2,230.2 L1134.3,227.9 L1146.0,226.0 L1159.1,224.4 L1173.2,223.3 L1188.0,222.7 L1203.0,222.5 L1218.0,222.9 L1232.5,223.7 L1246.3,225.0 L1258.8,226.7 L1270.0,228.8 L1279.4,231.3 L1286.9,234.0 L1292.2,236.9 L1295.2,240.0 Z M1219.2,242.7 L1200.0,242.5 M1213.0,245.4 L1200.0,242.5 M1213.0,245.4 L1200.0,242.5 M1199.2,246.5 L1200.0,242.5 M1185.9,245.2 L1200.0,242.5 M1185.9,245.2 L1200.0,242.5 M1180.8,242.3 L1200.0,242.5 M1187.0,239.6 L1200.0,242.5 M1187.0,239.6 L1200.0,242.5 M1200.8,238.5 L1200.0,242.5 M1214.1,239.8 L1200.0,242.5 M1214.1,239.8 L1200.0,242.5 M1238.3,243.1 L1219.2,242.7 M1234.2,246.1 L1219.2,242.7 M1234.2,246.1 L1213.0,245.4 M1225.0,248.6 L1213.0,245.4 M1211.9,250.1 L1199.2,246.5 M1211.9,250.1 L1185.9,245.2 M1197.0,250.5 L1199.2,246.5 M1182.6,249.6 L1199.2,246.5 M1182.6,249.6 L1185.9,245.2 M1170.8,247.7 L1185.9,245.2 M1163.5,245.0 L1180.8,242.3 M1163.5,245.0 L1187.0,239.6 M1161.7,241.9 L1180.8,242.3 M1165.8,238.9 L1180.8,242.3 M1165.8,238.9 L1187.0,239.6 M1175.0,236.4 L1187.0,239.6 M1188.1,234.9 L1200.8,238.5 M1188.1,234.9 L1214.1,239.8 M1203.0,234.5 L1200.8,238.5 M1217.4,235.4 L1200.8,238.5 M1217.4,235.4 L1214.1,239.8 M1229.2,237.3 L1214.1,239.8 M1236.5,240.0 L1219.2,242.7 M1236.5,240.0 L1213.0,245.4 M1257.6,242.7 L1238.3,243.1 M1255.3,245.8 L1234.2,246.1 M1255.3,245.8 L1225.0,248.6 M1249.3,248.7 L1234.2,246.1 M1239.9,251.2 L1225.0,248.6 M1239.9,251.2 L1211.9,250.1 M1227.8,253.0 L1211.9,250.1 M1213.8,254.2 L1211.9,250.1 M1213.8,254.2 L1197.0,250.5 M1198.8,254.5 L1197.0,250.5 M1184.0,254.0 L1182.6,249.6 M1184.0,254.0 L1170.8,247.7 M1170.2,252.8 L1182.6,249.6 M1158.5,250.8 L1170.8,247.7 M1158.5,250.8 L1163.5,245.0 M1149.5,248.3 L1163.5,245.0 M1144.1,245.4 L1163.5,245.0 M1144.1,245.4 L1161.7,241.9 M1142.4,242.3 L1161.7,241.9 M1144.7,239.2 L1165.8,238.9 M1144.7,239.2 L1175.0,236.4 M1150.7,236.3 L1165.8,238.9 M1160.1,233.8 L1175.0,236.4 M1160.1,233.8 L1188.1,234.9 M1172.2,232.0 L1188.1,234.9 M1186.2,230.8 L1188.1,234.9 M1186.2,230.8 L1203.0,234.5 M1201.2,230.5 L1203.0,234.5 M1216.0,231.0 L1217.4,235.4 M1216.0,231.0 L1229.2,237.3 M1229.8,232.2 L1217.4,235.4 M1241.5,234.2 L1229.2,237.3 M1241.5,234.2 L1236.5,240.0 M1250.5,236.7 L1236.5,240.0 M1255.9,239.6 L1236.5,240.0 M1255.9,239.6 L1238.3,243.1 M1276.8,242.6 L1257.6,242.7 M1275.2,245.7 L1255.3,245.8 M1275.2,245.7 L1249.3,248.7 M1270.8,248.7 L1249.3,248.7 M1263.6,251.5 L1249.3,248.7 M1263.6,251.5 L1239.9,251.2 M1254.0,253.9 L1239.9,251.2 M1242.2,255.9 L1227.8,253.0 M1242.2,255.9 L1213.8,254.2 M1228.9,257.3 L1227.8,253.0 M1214.5,258.2 L1213.8,254.2 M1214.5,258.2 L1198.8,254.5 M1199.5,258.5 L1198.8,254.5 M1184.5,258.2 L1184.0,254.0 M1184.5,258.2 L1170.2,252.8 M1170.1,257.2 L1170.2,252.8 M1156.9,255.7 L1170.2,252.8 M1156.9,255.7 L1158.5,250.8 M1145.3,253.7 L1158.5,250.8 M1135.9,251.3 L1149.5,248.3 M1135.9,251.3 L1144.1,245.4 M1128.9,248.5 L1149.5,248.3 M1124.6,245.5 L1144.1,245.4 M1124.6,245.5 L1142.4,242.3 M1123.2,242.4 L1142.4,242.3 M1124.8,239.3 L1144.7,239.2 M1124.8,239.3 L1150.7,236.3 M1129.2,236.3 L1150.7,236.3 M1136.4,233.5 L1150.7,236.3 M1136.4,233.5 L1160.1,233.8 M1146.0,231.1 L1160.1,233.8 M1157.8,229.1 L1172.2,232.0 M1157.8,229.1 L1186.2,230.8 M1171.1,227.7 L1172.2,232.0 M1185.5,226.8 L1186.2,230.8 M1185.5,226.8 L1201.2,230.5 M1200.5,226.5 L1201.2,230.5 M1215.5,226.8 L1216.0,231.0 M1215.5,226.8 L1229.8,232.2 M1229.9,227.8 L1229.8,232.2 M1243.1,229.3 L1229.8,232.2 M1243.1,229.3 L1241.5,234.2 M1254.7,231.3 L1241.5,234.2 M1264.1,233.7 L1250.5,236.7 M1264.1,233.7 L1255.9,239.6 M1271.1,236.5 L1250.5,236.7 M1275.4,239.5 L1255.9,239.6 M1275.4,239.5 L1257.6,242.7 M1296.0,243.1 L1276.8,242.6 M1294.3,246.3 L1275.2,245.7 M1294.3,246.3 L1270.8,248.7 M1290.3,249.3 L1270.8,248.7 M1284.1,252.1 L1270.8,248.7 M1284.1,252.1 L1263.6,251.5 M1275.8,254.8 L1263.6,251.5 M1265.7,257.1 L1254.0,253.9 M1265.7,257.1 L1242.2,255.9 M1254.0,259.0 L1242.2,255.9 M1240.9,260.6 L1228.9,257.3 M1240.9,260.6 L1214.5,258.2 M1226.8,261.7 L1228.9,257.3 M1212.0,262.3 L1214.5,258.2 M1212.0,262.3 L1199.5,258.5 M1197.0,262.5 L1199.5,258.5 M1182.0,262.1 L1184.5,258.2 M1182.0,262.1 L1170.1,257.2 M1167.5,261.3 L1170.1,257.2 M1153.7,260.0 L1170.1,257.2 M1153.7,260.0 L1156.9,255.7 M1141.2,258.3 L1156.9,255.7 M1130.0,256.2 L1145.3,253.7 M1130.0,256.2 L1135.9,251.3 M1120.6,253.7 L1135.9,251.3 M1113.1,251.0 L1128.9,248.5 M1113.1,251.0 L1124.6,245.5 M1107.8,248.1 L1128.9,248.5 M1104.8,245.0 L1124.6,245.5 M1104.8,245.0 L1123.2,242.4 M1104.0,241.9 L1123.2,242.4 M1105.7,238.7 L1124.8,239.3 M1105.7,238.7 L1129.2,236.3 M1109.7,235.7 L1129.2,236.3 M1115.9,232.9 L1129.2,236.3 M1115.9,232.9 L1136.4,233.5 M1124.2,230.2 L1136.4,233.5 M1134.3,227.9 L1146.0,231.1 M1134.3,227.9 L1157.8,229.1 M1146.0,226.0 L1157.8,229.1 M1159.1,224.4 L1171.1,227.7 M1159.1,224.4 L1185.5,226.8 M1173.2,223.3 L1171.1,227.7 M1188.0,222.7 L1185.5,226.8 M1188.0,222.7 L1200.5,226.5 M1203.0,222.5 L1200.5,226.5 M1218.0,222.9 L1215.5,226.8 M1218.0,222.9 L1229.9,227.8 M1232.5,223.7 L1229.9,227.8 M1246.3,225.0 L1229.9,227.8 M1246.3,225.0 L1243.1,229.3 M1258.8,226.7 L1243.1,229.3 M1270.0,228.8 L1254.7,231.3 M1270.0,228.8 L1264.1,233.7 M1279.4,231.3 L1264.1,233.7 M1286.9,234.0 L1271.1,236.5 M1286.9,234.0 L1275.4,239.5 M1292.2,236.9 L1271.1,236.5 M1295.2,240.0 L1275.4,239.5 M1295.2,240.0 L1276.8,242.6" fill="none" stroke="#9a8e9a" stroke-width="0.9" opacity="0.5"/>
<g fill="none" stroke="#4e8a30" stroke-width="1" opacity="0.8">
<polyline points="772.0,870.0 752.5,289.0 817.5,340.5 1339.0,295.0"/>
<polyline points="817.5,340.5 831.0,970.0"/>
<polyline points="1339.0,295.0 1293.0,871.0 831.0,970.0 772.0,870.0"/>
</g>
<line x1="733" y1="970.5" x2="733" y2="940" stroke="#30e0a0" stroke-width="1.2"/>
<polygon points="730.3,941 733,933.5 735.8,941" fill="#10d030"/>
<line x1="733" y1="970.5" x2="721.5" y2="960.5" stroke="#ff4060" stroke-width="1.2"/>
<circle cx="721.3" cy="960.6" r="2.4" fill="#e00010"/>
<line x1="733" y1="970.5" x2="762" y2="966.5" stroke="#1010e0" stroke-width="1.3"/>
<polygon points="760.5,964 767.3,966.3 761,970" fill="#000080"/>
<g font-family="Liberation Sans" font-style="italic" font-weight="bold">
<text x="763.5" y="962" font-size="15" fill="#0000ff">Z</text>
<text x="737.5" y="935" font-size="14" fill="#00ee00">Y</text>
<text x="723" y="955" font-size="14.5" fill="#ff0000">X</text>
</g>

</svg>
</body></html>
